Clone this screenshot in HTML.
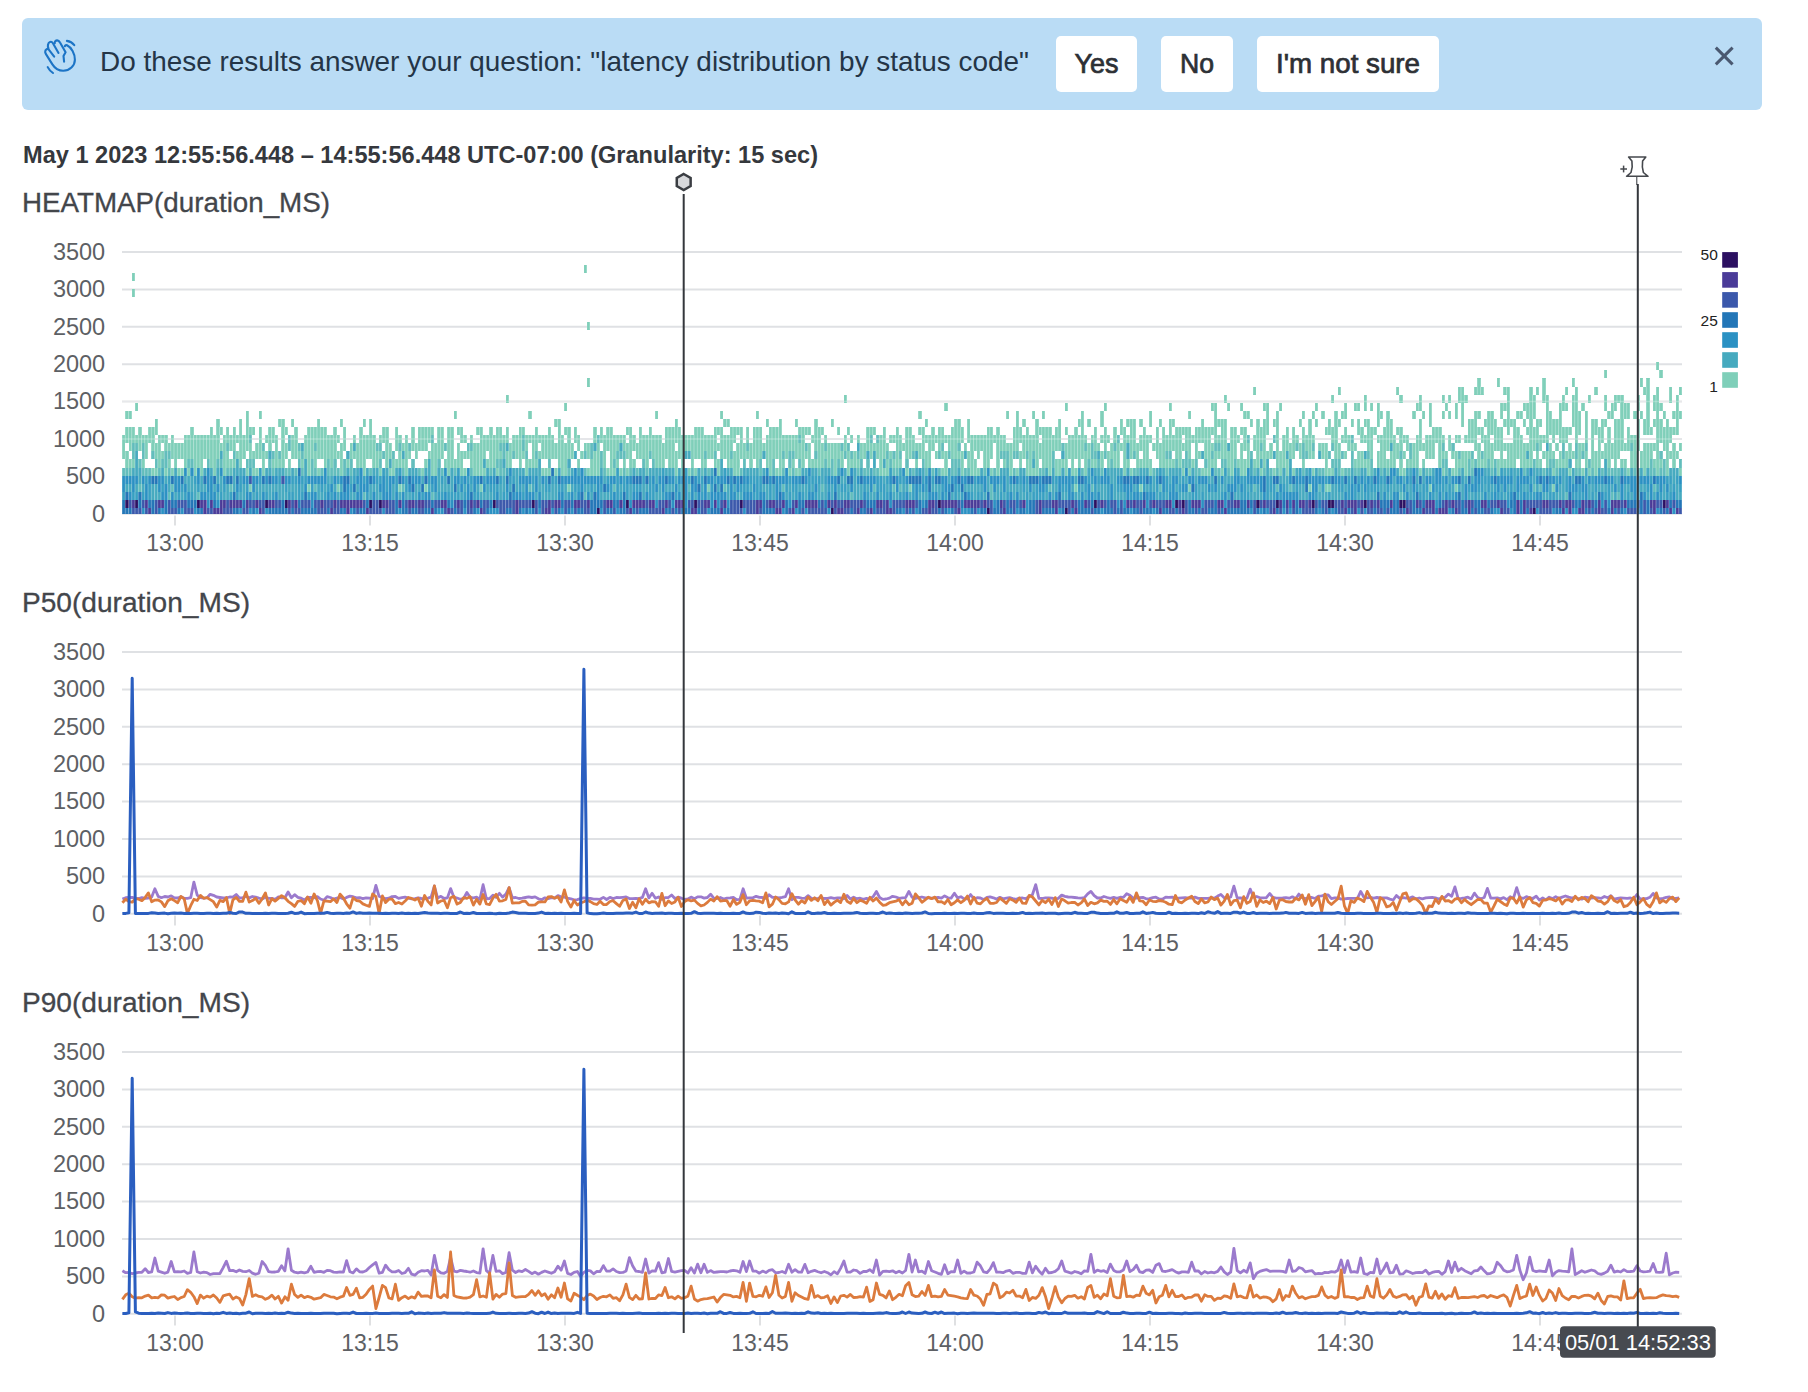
<!DOCTYPE html><html><head><meta charset="utf-8"><title>Query results</title><style>html,body{margin:0;padding:0;background:#fff;width:1808px;height:1392px;overflow:hidden}svg{display:block}text{font-family:"Liberation Sans",sans-serif}</style></head><body>
<svg width="1808" height="1392" viewBox="0 0 1808 1392">
<rect x="22" y="18" width="1740" height="92" rx="6" fill="#badcf5"/>
<g fill="none" stroke="#1c74c6" stroke-width="2.1" stroke-linecap="round" stroke-linejoin="round"><path d="M54.2 56.6 L49 49.8 C47.8 48.2 45 49 45.2 52 C45.3 52.8 45.5 53.3 45.8 53.9 L52.4 64.4 C54.6 67.9 58.6 70.8 63.2 70.8 C69.6 70.8 74.9 65.8 74.9 59.7 C74.9 53.5 71.4 47.4 67 45.3 C66 44.9 65.2 45.3 64.8 46.2"/><path d="M48.4 48.2 C47.5 46.4 47.6 42.9 50.1 41.9 C51.2 41.5 52.1 41.9 52.8 43 L58.5 52.9"/><path d="M54.8 43.2 C54.3 41.6 55.7 40.4 57.2 40.4 C58.4 40.4 59.3 41.3 60 42.6 L65.6 52.3 L63.5 56 L64.1 61.6"/><path d="M66.9 40.9 C69.8 41.3 72.6 42.9 74.3 45.2"/><path d="M47.7 67.1 C48.9 69.5 50.8 71.5 53 73"/></g>
<text x="100" y="71" font-size="27.8" fill="#243547" textLength="929" lengthAdjust="spacingAndGlyphs">Do these results answer your question: "latency distribution by status code"</text>
<rect x="1056" y="36" width="81" height="56" rx="5" fill="#ffffff"/>
<text x="1096.5" y="72.8" font-size="27" text-anchor="middle" fill="#2d3035" stroke="#2d3035" stroke-width="0.7" textLength="44" lengthAdjust="spacingAndGlyphs">Yes</text>
<rect x="1161" y="36" width="72" height="56" rx="5" fill="#ffffff"/>
<text x="1197.0" y="72.8" font-size="27" text-anchor="middle" fill="#2d3035" stroke="#2d3035" stroke-width="0.7" textLength="34" lengthAdjust="spacingAndGlyphs">No</text>
<rect x="1257" y="36" width="182" height="56" rx="5" fill="#ffffff"/>
<text x="1348.0" y="72.8" font-size="27" text-anchor="middle" fill="#2d3035" stroke="#2d3035" stroke-width="0.7" textLength="144" lengthAdjust="spacingAndGlyphs">I&#39;m not sure</text>
<g stroke="#4a5870" stroke-width="3" stroke-linecap="butt"><line x1="1715.8" y1="47.6" x2="1732.6" y2="64.4"/><line x1="1732.6" y1="47.6" x2="1715.8" y2="64.4"/></g>
<text x="23" y="162.7" font-size="23.2" font-weight="bold" fill="#35383d" textLength="795" lengthAdjust="spacingAndGlyphs">May 1 2023 12:55:56.448 – 14:55:56.448 UTC-07:00 (Granularity: 15 sec)</text>
<text x="22" y="211.8" font-size="27" fill="#43464b" stroke="#43464b" stroke-width="0.3" textLength="308" lengthAdjust="spacingAndGlyphs">HEATMAP(duration_MS)</text>
<text x="105.2" y="521.6" font-size="23.5" text-anchor="end" fill="#5d6064">0</text>
<text x="105.2" y="484.2" font-size="23.5" text-anchor="end" fill="#5d6064">500</text>
<text x="105.2" y="446.8" font-size="23.5" text-anchor="end" fill="#5d6064">1000</text>
<text x="105.2" y="409.4" font-size="23.5" text-anchor="end" fill="#5d6064">1500</text>
<text x="105.2" y="372.0" font-size="23.5" text-anchor="end" fill="#5d6064">2000</text>
<text x="105.2" y="334.6" font-size="23.5" text-anchor="end" fill="#5d6064">2500</text>
<text x="105.2" y="297.3" font-size="23.5" text-anchor="end" fill="#5d6064">3000</text>
<text x="105.2" y="259.9" font-size="23.5" text-anchor="end" fill="#5d6064">3500</text>
<line x1="175" y1="515.5" x2="175" y2="525.5" stroke="#d4d6d9" stroke-width="1.5"/>
<text x="175" y="550.7" font-size="23" text-anchor="middle" fill="#5d6064">13:00</text>
<line x1="370" y1="515.5" x2="370" y2="525.5" stroke="#d4d6d9" stroke-width="1.5"/>
<text x="370" y="550.7" font-size="23" text-anchor="middle" fill="#5d6064">13:15</text>
<line x1="565" y1="515.5" x2="565" y2="525.5" stroke="#d4d6d9" stroke-width="1.5"/>
<text x="565" y="550.7" font-size="23" text-anchor="middle" fill="#5d6064">13:30</text>
<line x1="760" y1="515.5" x2="760" y2="525.5" stroke="#d4d6d9" stroke-width="1.5"/>
<text x="760" y="550.7" font-size="23" text-anchor="middle" fill="#5d6064">13:45</text>
<line x1="955" y1="515.5" x2="955" y2="525.5" stroke="#d4d6d9" stroke-width="1.5"/>
<text x="955" y="550.7" font-size="23" text-anchor="middle" fill="#5d6064">14:00</text>
<line x1="1150" y1="515.5" x2="1150" y2="525.5" stroke="#d4d6d9" stroke-width="1.5"/>
<text x="1150" y="550.7" font-size="23" text-anchor="middle" fill="#5d6064">14:15</text>
<line x1="1345" y1="515.5" x2="1345" y2="525.5" stroke="#d4d6d9" stroke-width="1.5"/>
<text x="1345" y="550.7" font-size="23" text-anchor="middle" fill="#5d6064">14:30</text>
<line x1="1540" y1="515.5" x2="1540" y2="525.5" stroke="#d4d6d9" stroke-width="1.5"/>
<text x="1540" y="550.7" font-size="23" text-anchor="middle" fill="#5d6064">14:45</text>
<text x="22" y="611.8" font-size="27" fill="#43464b" stroke="#43464b" stroke-width="0.3" textLength="228" lengthAdjust="spacingAndGlyphs">P50(duration_MS)</text>
<text x="105.2" y="921.6" font-size="23.5" text-anchor="end" fill="#5d6064">0</text>
<text x="105.2" y="884.2" font-size="23.5" text-anchor="end" fill="#5d6064">500</text>
<text x="105.2" y="846.8" font-size="23.5" text-anchor="end" fill="#5d6064">1000</text>
<text x="105.2" y="809.4" font-size="23.5" text-anchor="end" fill="#5d6064">1500</text>
<text x="105.2" y="772.0" font-size="23.5" text-anchor="end" fill="#5d6064">2000</text>
<text x="105.2" y="734.6" font-size="23.5" text-anchor="end" fill="#5d6064">2500</text>
<text x="105.2" y="697.3" font-size="23.5" text-anchor="end" fill="#5d6064">3000</text>
<text x="105.2" y="659.9" font-size="23.5" text-anchor="end" fill="#5d6064">3500</text>
<line x1="175" y1="915.5" x2="175" y2="925.5" stroke="#d4d6d9" stroke-width="1.5"/>
<text x="175" y="950.7" font-size="23" text-anchor="middle" fill="#5d6064">13:00</text>
<line x1="370" y1="915.5" x2="370" y2="925.5" stroke="#d4d6d9" stroke-width="1.5"/>
<text x="370" y="950.7" font-size="23" text-anchor="middle" fill="#5d6064">13:15</text>
<line x1="565" y1="915.5" x2="565" y2="925.5" stroke="#d4d6d9" stroke-width="1.5"/>
<text x="565" y="950.7" font-size="23" text-anchor="middle" fill="#5d6064">13:30</text>
<line x1="760" y1="915.5" x2="760" y2="925.5" stroke="#d4d6d9" stroke-width="1.5"/>
<text x="760" y="950.7" font-size="23" text-anchor="middle" fill="#5d6064">13:45</text>
<line x1="955" y1="915.5" x2="955" y2="925.5" stroke="#d4d6d9" stroke-width="1.5"/>
<text x="955" y="950.7" font-size="23" text-anchor="middle" fill="#5d6064">14:00</text>
<line x1="1150" y1="915.5" x2="1150" y2="925.5" stroke="#d4d6d9" stroke-width="1.5"/>
<text x="1150" y="950.7" font-size="23" text-anchor="middle" fill="#5d6064">14:15</text>
<line x1="1345" y1="915.5" x2="1345" y2="925.5" stroke="#d4d6d9" stroke-width="1.5"/>
<text x="1345" y="950.7" font-size="23" text-anchor="middle" fill="#5d6064">14:30</text>
<line x1="1540" y1="915.5" x2="1540" y2="925.5" stroke="#d4d6d9" stroke-width="1.5"/>
<text x="1540" y="950.7" font-size="23" text-anchor="middle" fill="#5d6064">14:45</text>
<text x="22" y="1011.8" font-size="27" fill="#43464b" stroke="#43464b" stroke-width="0.3" textLength="228" lengthAdjust="spacingAndGlyphs">P90(duration_MS)</text>
<text x="105.2" y="1321.6" font-size="23.5" text-anchor="end" fill="#5d6064">0</text>
<text x="105.2" y="1284.2" font-size="23.5" text-anchor="end" fill="#5d6064">500</text>
<text x="105.2" y="1246.8" font-size="23.5" text-anchor="end" fill="#5d6064">1000</text>
<text x="105.2" y="1209.4" font-size="23.5" text-anchor="end" fill="#5d6064">1500</text>
<text x="105.2" y="1172.0" font-size="23.5" text-anchor="end" fill="#5d6064">2000</text>
<text x="105.2" y="1134.6" font-size="23.5" text-anchor="end" fill="#5d6064">2500</text>
<text x="105.2" y="1097.3" font-size="23.5" text-anchor="end" fill="#5d6064">3000</text>
<text x="105.2" y="1059.9" font-size="23.5" text-anchor="end" fill="#5d6064">3500</text>
<line x1="175" y1="1315.5" x2="175" y2="1325.5" stroke="#d4d6d9" stroke-width="1.5"/>
<text x="175" y="1350.7" font-size="23" text-anchor="middle" fill="#5d6064">13:00</text>
<line x1="370" y1="1315.5" x2="370" y2="1325.5" stroke="#d4d6d9" stroke-width="1.5"/>
<text x="370" y="1350.7" font-size="23" text-anchor="middle" fill="#5d6064">13:15</text>
<line x1="565" y1="1315.5" x2="565" y2="1325.5" stroke="#d4d6d9" stroke-width="1.5"/>
<text x="565" y="1350.7" font-size="23" text-anchor="middle" fill="#5d6064">13:30</text>
<line x1="760" y1="1315.5" x2="760" y2="1325.5" stroke="#d4d6d9" stroke-width="1.5"/>
<text x="760" y="1350.7" font-size="23" text-anchor="middle" fill="#5d6064">13:45</text>
<line x1="955" y1="1315.5" x2="955" y2="1325.5" stroke="#d4d6d9" stroke-width="1.5"/>
<text x="955" y="1350.7" font-size="23" text-anchor="middle" fill="#5d6064">14:00</text>
<line x1="1150" y1="1315.5" x2="1150" y2="1325.5" stroke="#d4d6d9" stroke-width="1.5"/>
<text x="1150" y="1350.7" font-size="23" text-anchor="middle" fill="#5d6064">14:15</text>
<line x1="1345" y1="1315.5" x2="1345" y2="1325.5" stroke="#d4d6d9" stroke-width="1.5"/>
<text x="1345" y="1350.7" font-size="23" text-anchor="middle" fill="#5d6064">14:30</text>
<line x1="1540" y1="1315.5" x2="1540" y2="1325.5" stroke="#d4d6d9" stroke-width="1.5"/>
<text x="1540" y="1350.7" font-size="23" text-anchor="middle" fill="#5d6064">14:45</text>
<g stroke="#dfe1e4" stroke-width="2"><line x1="122" y1="513.8" x2="1682" y2="513.8"/><line x1="122" y1="476.4" x2="1682" y2="476.4"/><line x1="122" y1="439.0" x2="1682" y2="439.0"/><line x1="122" y1="401.6" x2="1682" y2="401.6"/><line x1="122" y1="364.2" x2="1682" y2="364.2"/><line x1="122" y1="326.8" x2="1682" y2="326.8"/><line x1="122" y1="289.5" x2="1682" y2="289.5"/><line x1="122" y1="252.1" x2="1682" y2="252.1"/></g>
<g shape-rendering="crispEdges">
<g fill="#2c1061"><path id="hm0" d="M596.50 508.0h3.25v5.8h-3.25zM830.50 508.0h3.25v5.8h-3.25zM986.50 508.0h3.25v5.8h-3.25zM1064.50 508.0h3.25v5.8h-3.25zM1532.50 508.0h3.25v5.8h-3.25zM125.25 499.9h3.25v8.1h-3.25zM135.00 499.9h3.25v8.1h-3.25zM196.75 499.9h3.25v8.1h-3.25zM265.00 499.9h3.25v8.1h-3.25zM284.50 499.9h3.25v8.1h-3.25zM369.00 499.9h3.25v8.1h-3.25zM378.75 499.9h3.25v8.1h-3.25zM492.50 499.9h3.25v8.1h-3.25zM531.50 499.9h3.25v8.1h-3.25zM625.75 499.9h3.25v8.1h-3.25zM694.00 499.9h3.25v8.1h-3.25zM739.50 499.9h3.25v8.1h-3.25zM937.75 499.9h3.25v8.1h-3.25zM1093.75 499.9h3.25v8.1h-3.25zM1175.00 499.9h3.25v8.1h-3.25zM1181.50 499.9h3.25v8.1h-3.25zM1256.25 499.9h3.25v8.1h-3.25zM1275.75 499.9h3.25v8.1h-3.25zM1311.50 499.9h3.25v8.1h-3.25zM1327.75 499.9h6.50v8.1h-6.50zM1363.50 499.9h3.25v8.1h-3.25zM1399.25 499.9h6.50v8.1h-6.50zM1662.50 499.9h3.25v8.1h-3.25z"/></g>
<g fill="#4a3b98"><path id="hm1" d="M148.00 508.0h3.25v5.8h-3.25zM203.25 508.0h3.25v5.8h-3.25zM213.00 508.0h9.75v5.8h-9.75zM258.50 508.0h3.25v5.8h-3.25zM330.00 508.0h3.25v5.8h-3.25zM346.25 508.0h3.25v5.8h-3.25zM365.75 508.0h3.25v5.8h-3.25zM430.75 508.0h3.25v5.8h-3.25zM447.00 508.0h3.25v5.8h-3.25zM479.50 508.0h3.25v5.8h-3.25zM515.25 508.0h3.25v5.8h-3.25zM544.50 508.0h6.50v5.8h-6.50zM629.00 508.0h3.25v5.8h-3.25zM661.50 508.0h3.25v5.8h-3.25zM690.75 508.0h6.50v5.8h-6.50zM720.00 508.0h3.25v5.8h-3.25zM755.75 508.0h3.25v5.8h-3.25zM775.25 508.0h6.50v5.8h-6.50zM791.50 508.0h3.25v5.8h-3.25zM837.00 508.0h6.50v5.8h-6.50zM856.50 508.0h3.25v5.8h-3.25zM869.50 508.0h3.25v5.8h-3.25zM885.75 508.0h6.50v5.8h-6.50zM928.00 508.0h3.25v5.8h-3.25zM957.25 508.0h3.25v5.8h-3.25zM1002.75 508.0h3.25v5.8h-3.25zM1038.50 508.0h3.25v5.8h-3.25zM1054.75 508.0h3.25v5.8h-3.25zM1074.25 508.0h3.25v5.8h-3.25zM1158.75 508.0h3.25v5.8h-3.25zM1181.50 508.0h3.25v5.8h-3.25zM1223.75 508.0h3.25v5.8h-3.25zM1272.50 508.0h3.25v5.8h-3.25zM1344.00 508.0h3.25v5.8h-3.25zM1353.75 508.0h3.25v5.8h-3.25zM1405.75 508.0h3.25v5.8h-3.25zM1422.00 508.0h3.25v5.8h-3.25zM1431.75 508.0h3.25v5.8h-3.25zM1438.25 508.0h9.75v5.8h-9.75zM1454.50 508.0h3.25v5.8h-3.25zM1467.50 508.0h3.25v5.8h-3.25zM1500.00 508.0h3.25v5.8h-3.25zM1516.25 508.0h3.25v5.8h-3.25zM1522.75 508.0h3.25v5.8h-3.25zM1529.25 508.0h3.25v5.8h-3.25zM1561.75 508.0h3.25v5.8h-3.25zM1568.25 508.0h3.25v5.8h-3.25zM1578.00 508.0h6.50v5.8h-6.50zM1597.50 508.0h3.25v5.8h-3.25zM1610.50 508.0h3.25v5.8h-3.25zM1652.75 508.0h3.25v5.8h-3.25zM1669.00 508.0h3.25v5.8h-3.25zM1675.50 508.0h3.25v5.8h-3.25zM131.75 499.9h3.25v8.1h-3.25zM144.75 499.9h3.25v8.1h-3.25zM157.75 499.9h6.50v8.1h-6.50zM200.00 499.9h6.50v8.1h-6.50zM209.75 499.9h3.25v8.1h-3.25zM219.50 499.9h6.50v8.1h-6.50zM229.25 499.9h13.00v8.1h-13.00zM245.50 499.9h3.25v8.1h-3.25zM255.25 499.9h3.25v8.1h-3.25zM268.25 499.9h6.50v8.1h-6.50zM287.75 499.9h3.25v8.1h-3.25zM294.25 499.9h3.25v8.1h-3.25zM320.25 499.9h3.25v8.1h-3.25zM333.25 499.9h3.25v8.1h-3.25zM339.75 499.9h22.75v8.1h-22.75zM382.00 499.9h6.50v8.1h-6.50zM398.25 499.9h3.25v8.1h-3.25zM408.00 499.9h6.50v8.1h-6.50zM417.75 499.9h6.50v8.1h-6.50zM440.50 499.9h6.50v8.1h-6.50zM456.75 499.9h3.25v8.1h-3.25zM469.75 499.9h3.25v8.1h-3.25zM476.25 499.9h3.25v8.1h-3.25zM515.25 499.9h3.25v8.1h-3.25zM547.75 499.9h3.25v8.1h-3.25zM554.25 499.9h6.50v8.1h-6.50zM573.75 499.9h6.50v8.1h-6.50zM586.75 499.9h3.25v8.1h-3.25zM606.25 499.9h6.50v8.1h-6.50zM619.25 499.9h3.25v8.1h-3.25zM632.25 499.9h13.00v8.1h-13.00zM648.50 499.9h6.50v8.1h-6.50zM664.75 499.9h3.25v8.1h-3.25zM674.50 499.9h9.75v8.1h-9.75zM703.75 499.9h6.50v8.1h-6.50zM713.50 499.9h3.25v8.1h-3.25zM723.25 499.9h3.25v8.1h-3.25zM755.75 499.9h6.50v8.1h-6.50zM768.75 499.9h6.50v8.1h-6.50zM781.75 499.9h3.25v8.1h-3.25zM794.75 499.9h3.25v8.1h-3.25zM804.50 499.9h13.00v8.1h-13.00zM827.25 499.9h3.25v8.1h-3.25zM833.75 499.9h3.25v8.1h-3.25zM843.50 499.9h6.50v8.1h-6.50zM859.75 499.9h3.25v8.1h-3.25zM876.00 499.9h6.50v8.1h-6.50zM885.75 499.9h3.25v8.1h-3.25zM905.25 499.9h9.75v8.1h-9.75zM928.00 499.9h6.50v8.1h-6.50zM941.00 499.9h16.25v8.1h-16.25zM963.75 499.9h16.25v8.1h-16.25zM983.25 499.9h3.25v8.1h-3.25zM999.50 499.9h3.25v8.1h-3.25zM1022.25 499.9h3.25v8.1h-3.25zM1038.50 499.9h3.25v8.1h-3.25zM1051.50 499.9h6.50v8.1h-6.50zM1071.00 499.9h3.25v8.1h-3.25zM1084.00 499.9h3.25v8.1h-3.25zM1100.25 499.9h3.25v8.1h-3.25zM1126.25 499.9h3.25v8.1h-3.25zM1132.75 499.9h3.25v8.1h-3.25zM1142.50 499.9h3.25v8.1h-3.25zM1152.25 499.9h3.25v8.1h-3.25zM1165.25 499.9h6.50v8.1h-6.50zM1178.25 499.9h3.25v8.1h-3.25zM1191.25 499.9h9.75v8.1h-9.75zM1217.25 499.9h6.50v8.1h-6.50zM1233.50 499.9h6.50v8.1h-6.50zM1246.50 499.9h3.25v8.1h-3.25zM1262.75 499.9h3.25v8.1h-3.25zM1279.00 499.9h3.25v8.1h-3.25zM1285.50 499.9h3.25v8.1h-3.25zM1292.00 499.9h3.25v8.1h-3.25zM1298.50 499.9h6.50v8.1h-6.50zM1308.25 499.9h3.25v8.1h-3.25zM1340.75 499.9h3.25v8.1h-3.25zM1347.25 499.9h9.75v8.1h-9.75zM1360.25 499.9h3.25v8.1h-3.25zM1370.00 499.9h3.25v8.1h-3.25zM1376.50 499.9h3.25v8.1h-3.25zM1389.50 499.9h3.25v8.1h-3.25zM1415.50 499.9h3.25v8.1h-3.25zM1425.25 499.9h9.75v8.1h-9.75zM1444.75 499.9h3.25v8.1h-3.25zM1451.25 499.9h3.25v8.1h-3.25zM1467.50 499.9h3.25v8.1h-3.25zM1480.50 499.9h6.50v8.1h-6.50zM1496.75 499.9h3.25v8.1h-3.25zM1516.25 499.9h3.25v8.1h-3.25zM1522.75 499.9h3.25v8.1h-3.25zM1542.25 499.9h6.50v8.1h-6.50zM1558.50 499.9h3.25v8.1h-3.25zM1565.00 499.9h6.50v8.1h-6.50zM1581.25 499.9h3.25v8.1h-3.25zM1587.75 499.9h3.25v8.1h-3.25zM1597.50 499.9h3.25v8.1h-3.25zM1610.50 499.9h9.75v8.1h-9.75zM1623.50 499.9h3.25v8.1h-3.25zM1649.50 499.9h6.50v8.1h-6.50zM1665.75 499.9h3.25v8.1h-3.25z"/></g>
<g fill="#3b58ab"><path id="hm2" d="M131.75 508.0h9.75v5.8h-9.75zM144.75 508.0h3.25v5.8h-3.25zM154.50 508.0h3.25v5.8h-3.25zM167.50 508.0h9.75v5.8h-9.75zM183.75 508.0h9.75v5.8h-9.75zM206.50 508.0h6.50v5.8h-6.50zM222.75 508.0h9.75v5.8h-9.75zM242.25 508.0h6.50v5.8h-6.50zM261.75 508.0h3.25v5.8h-3.25zM287.75 508.0h3.25v5.8h-3.25zM294.25 508.0h6.50v5.8h-6.50zM317.00 508.0h9.75v5.8h-9.75zM333.25 508.0h6.50v5.8h-6.50zM356.00 508.0h3.25v5.8h-3.25zM369.00 508.0h13.00v5.8h-13.00zM385.25 508.0h9.75v5.8h-9.75zM408.00 508.0h3.25v5.8h-3.25zM417.75 508.0h6.50v5.8h-6.50zM443.75 508.0h3.25v5.8h-3.25zM450.25 508.0h3.25v5.8h-3.25zM456.75 508.0h6.50v5.8h-6.50zM466.50 508.0h6.50v5.8h-6.50zM482.75 508.0h3.25v5.8h-3.25zM499.00 508.0h6.50v5.8h-6.50zM512.00 508.0h3.25v5.8h-3.25zM534.75 508.0h3.25v5.8h-3.25zM541.25 508.0h3.25v5.8h-3.25zM554.25 508.0h3.25v5.8h-3.25zM564.00 508.0h3.25v5.8h-3.25zM573.75 508.0h3.25v5.8h-3.25zM583.50 508.0h6.50v5.8h-6.50zM603.00 508.0h3.25v5.8h-3.25zM612.75 508.0h3.25v5.8h-3.25zM625.75 508.0h3.25v5.8h-3.25zM635.50 508.0h3.25v5.8h-3.25zM648.50 508.0h13.00v5.8h-13.00zM671.25 508.0h3.25v5.8h-3.25zM677.75 508.0h3.25v5.8h-3.25zM700.50 508.0h6.50v5.8h-6.50zM729.75 508.0h13.00v5.8h-13.00zM746.00 508.0h9.75v5.8h-9.75zM759.00 508.0h3.25v5.8h-3.25zM788.25 508.0h3.25v5.8h-3.25zM801.25 508.0h3.25v5.8h-3.25zM807.75 508.0h19.50v5.8h-19.50zM833.75 508.0h3.25v5.8h-3.25zM843.50 508.0h6.50v5.8h-6.50zM853.25 508.0h3.25v5.8h-3.25zM866.25 508.0h3.25v5.8h-3.25zM876.00 508.0h9.75v5.8h-9.75zM892.25 508.0h3.25v5.8h-3.25zM905.25 508.0h3.25v5.8h-3.25zM911.75 508.0h3.25v5.8h-3.25zM921.50 508.0h6.50v5.8h-6.50zM931.25 508.0h6.50v5.8h-6.50zM941.00 508.0h3.25v5.8h-3.25zM954.00 508.0h3.25v5.8h-3.25zM973.50 508.0h3.25v5.8h-3.25zM989.75 508.0h3.25v5.8h-3.25zM999.50 508.0h3.25v5.8h-3.25zM1012.50 508.0h3.25v5.8h-3.25zM1035.25 508.0h3.25v5.8h-3.25zM1067.75 508.0h3.25v5.8h-3.25zM1090.50 508.0h3.25v5.8h-3.25zM1113.25 508.0h3.25v5.8h-3.25zM1119.75 508.0h3.25v5.8h-3.25zM1139.25 508.0h3.25v5.8h-3.25zM1168.50 508.0h6.50v5.8h-6.50zM1178.25 508.0h3.25v5.8h-3.25zM1184.75 508.0h3.25v5.8h-3.25zM1194.50 508.0h3.25v5.8h-3.25zM1201.00 508.0h6.50v5.8h-6.50zM1217.25 508.0h3.25v5.8h-3.25zM1253.00 508.0h3.25v5.8h-3.25zM1269.25 508.0h3.25v5.8h-3.25zM1279.00 508.0h3.25v5.8h-3.25zM1285.50 508.0h3.25v5.8h-3.25zM1292.00 508.0h3.25v5.8h-3.25zM1301.75 508.0h13.00v5.8h-13.00zM1324.50 508.0h3.25v5.8h-3.25zM1337.50 508.0h6.50v5.8h-6.50zM1350.50 508.0h3.25v5.8h-3.25zM1360.25 508.0h3.25v5.8h-3.25zM1366.75 508.0h6.50v5.8h-6.50zM1376.50 508.0h6.50v5.8h-6.50zM1386.25 508.0h3.25v5.8h-3.25zM1399.25 508.0h3.25v5.8h-3.25zM1409.00 508.0h3.25v5.8h-3.25zM1425.25 508.0h6.50v5.8h-6.50zM1457.75 508.0h3.25v5.8h-3.25zM1474.00 508.0h3.25v5.8h-3.25zM1483.75 508.0h6.50v5.8h-6.50zM1503.25 508.0h6.50v5.8h-6.50zM1539.00 508.0h13.00v5.8h-13.00zM1587.75 508.0h3.25v5.8h-3.25zM1594.25 508.0h3.25v5.8h-3.25zM1600.75 508.0h6.50v5.8h-6.50zM1617.00 508.0h3.25v5.8h-3.25zM1626.75 508.0h9.75v5.8h-9.75zM1643.00 508.0h3.25v5.8h-3.25zM1649.50 508.0h3.25v5.8h-3.25zM1662.50 508.0h3.25v5.8h-3.25zM1678.75 508.0h3.25v5.8h-3.25zM128.50 499.9h3.25v8.1h-3.25zM141.50 499.9h3.25v8.1h-3.25zM154.50 499.9h3.25v8.1h-3.25zM167.50 499.9h3.25v8.1h-3.25zM177.25 499.9h9.75v8.1h-9.75zM226.00 499.9h3.25v8.1h-3.25zM248.75 499.9h6.50v8.1h-6.50zM258.50 499.9h6.50v8.1h-6.50zM274.75 499.9h6.50v8.1h-6.50zM291.00 499.9h3.25v8.1h-3.25zM300.75 499.9h9.75v8.1h-9.75zM313.75 499.9h6.50v8.1h-6.50zM323.50 499.9h9.75v8.1h-9.75zM336.50 499.9h3.25v8.1h-3.25zM362.50 499.9h3.25v8.1h-3.25zM372.25 499.9h6.50v8.1h-6.50zM388.50 499.9h6.50v8.1h-6.50zM404.75 499.9h3.25v8.1h-3.25zM414.50 499.9h3.25v8.1h-3.25zM424.25 499.9h6.50v8.1h-6.50zM434.00 499.9h6.50v8.1h-6.50zM453.50 499.9h3.25v8.1h-3.25zM460.00 499.9h3.25v8.1h-3.25zM466.50 499.9h3.25v8.1h-3.25zM473.00 499.9h3.25v8.1h-3.25zM482.75 499.9h6.50v8.1h-6.50zM495.75 499.9h19.50v8.1h-19.50zM518.50 499.9h13.00v8.1h-13.00zM534.75 499.9h3.25v8.1h-3.25zM541.25 499.9h6.50v8.1h-6.50zM551.00 499.9h3.25v8.1h-3.25zM564.00 499.9h6.50v8.1h-6.50zM580.25 499.9h6.50v8.1h-6.50zM603.00 499.9h3.25v8.1h-3.25zM645.25 499.9h3.25v8.1h-3.25zM658.25 499.9h6.50v8.1h-6.50zM668.00 499.9h3.25v8.1h-3.25zM687.50 499.9h6.50v8.1h-6.50zM697.25 499.9h6.50v8.1h-6.50zM720.00 499.9h3.25v8.1h-3.25zM729.75 499.9h9.75v8.1h-9.75zM742.75 499.9h13.00v8.1h-13.00zM765.50 499.9h3.25v8.1h-3.25zM775.25 499.9h6.50v8.1h-6.50zM791.50 499.9h3.25v8.1h-3.25zM820.75 499.9h3.25v8.1h-3.25zM830.50 499.9h3.25v8.1h-3.25zM837.00 499.9h6.50v8.1h-6.50zM850.00 499.9h9.75v8.1h-9.75zM863.00 499.9h3.25v8.1h-3.25zM882.50 499.9h3.25v8.1h-3.25zM892.25 499.9h13.00v8.1h-13.00zM915.00 499.9h3.25v8.1h-3.25zM934.50 499.9h3.25v8.1h-3.25zM957.25 499.9h3.25v8.1h-3.25zM980.00 499.9h3.25v8.1h-3.25zM986.50 499.9h6.50v8.1h-6.50zM1002.75 499.9h3.25v8.1h-3.25zM1009.25 499.9h6.50v8.1h-6.50zM1019.00 499.9h3.25v8.1h-3.25zM1035.25 499.9h3.25v8.1h-3.25zM1041.75 499.9h9.75v8.1h-9.75zM1058.00 499.9h13.00v8.1h-13.00zM1074.25 499.9h3.25v8.1h-3.25zM1087.25 499.9h3.25v8.1h-3.25zM1097.00 499.9h3.25v8.1h-3.25zM1103.50 499.9h3.25v8.1h-3.25zM1110.00 499.9h6.50v8.1h-6.50zM1119.75 499.9h3.25v8.1h-3.25zM1129.50 499.9h3.25v8.1h-3.25zM1136.00 499.9h6.50v8.1h-6.50zM1149.00 499.9h3.25v8.1h-3.25zM1155.50 499.9h9.75v8.1h-9.75zM1184.75 499.9h3.25v8.1h-3.25zM1204.25 499.9h9.75v8.1h-9.75zM1227.00 499.9h6.50v8.1h-6.50zM1253.00 499.9h3.25v8.1h-3.25zM1259.50 499.9h3.25v8.1h-3.25zM1266.00 499.9h9.75v8.1h-9.75zM1305.00 499.9h3.25v8.1h-3.25zM1314.75 499.9h3.25v8.1h-3.25zM1321.25 499.9h6.50v8.1h-6.50zM1334.25 499.9h6.50v8.1h-6.50zM1344.00 499.9h3.25v8.1h-3.25zM1357.00 499.9h3.25v8.1h-3.25zM1366.75 499.9h3.25v8.1h-3.25zM1373.25 499.9h3.25v8.1h-3.25zM1405.75 499.9h6.50v8.1h-6.50zM1418.75 499.9h3.25v8.1h-3.25zM1441.50 499.9h3.25v8.1h-3.25zM1448.00 499.9h3.25v8.1h-3.25zM1454.50 499.9h6.50v8.1h-6.50zM1464.25 499.9h3.25v8.1h-3.25zM1470.75 499.9h3.25v8.1h-3.25zM1490.25 499.9h6.50v8.1h-6.50zM1500.00 499.9h6.50v8.1h-6.50zM1526.00 499.9h16.25v8.1h-16.25zM1548.75 499.9h9.75v8.1h-9.75zM1561.75 499.9h3.25v8.1h-3.25zM1571.50 499.9h3.25v8.1h-3.25zM1584.50 499.9h3.25v8.1h-3.25zM1591.00 499.9h3.25v8.1h-3.25zM1604.00 499.9h3.25v8.1h-3.25zM1620.25 499.9h3.25v8.1h-3.25zM1636.50 499.9h3.25v8.1h-3.25zM1643.00 499.9h3.25v8.1h-3.25zM1656.00 499.9h6.50v8.1h-6.50zM1672.25 499.9h3.25v8.1h-3.25zM248.75 475.6h3.25v8.1h-3.25zM281.25 475.6h3.25v8.1h-3.25z"/></g>
<g fill="#2376b7"><path id="hm3" d="M122.00 508.0h9.75v5.8h-9.75zM151.25 508.0h3.25v5.8h-3.25zM157.75 508.0h3.25v5.8h-3.25zM164.25 508.0h3.25v5.8h-3.25zM177.25 508.0h3.25v5.8h-3.25zM196.75 508.0h6.50v5.8h-6.50zM232.50 508.0h6.50v5.8h-6.50zM252.00 508.0h3.25v5.8h-3.25zM268.25 508.0h19.50v5.8h-19.50zM291.00 508.0h3.25v5.8h-3.25zM300.75 508.0h16.25v5.8h-16.25zM326.75 508.0h3.25v5.8h-3.25zM339.75 508.0h6.50v5.8h-6.50zM352.75 508.0h3.25v5.8h-3.25zM359.25 508.0h6.50v5.8h-6.50zM395.00 508.0h3.25v5.8h-3.25zM401.50 508.0h6.50v5.8h-6.50zM411.25 508.0h6.50v5.8h-6.50zM424.25 508.0h6.50v5.8h-6.50zM434.00 508.0h3.25v5.8h-3.25zM453.50 508.0h3.25v5.8h-3.25zM473.00 508.0h3.25v5.8h-3.25zM486.00 508.0h3.25v5.8h-3.25zM505.50 508.0h6.50v5.8h-6.50zM518.50 508.0h3.25v5.8h-3.25zM525.00 508.0h3.25v5.8h-3.25zM531.50 508.0h3.25v5.8h-3.25zM557.50 508.0h3.25v5.8h-3.25zM567.25 508.0h3.25v5.8h-3.25zM577.00 508.0h6.50v5.8h-6.50zM590.00 508.0h6.50v5.8h-6.50zM606.25 508.0h6.50v5.8h-6.50zM619.25 508.0h6.50v5.8h-6.50zM632.25 508.0h3.25v5.8h-3.25zM638.75 508.0h9.75v5.8h-9.75zM664.75 508.0h6.50v5.8h-6.50zM674.50 508.0h3.25v5.8h-3.25zM681.00 508.0h9.75v5.8h-9.75zM697.25 508.0h3.25v5.8h-3.25zM710.25 508.0h9.75v5.8h-9.75zM723.25 508.0h6.50v5.8h-6.50zM762.25 508.0h13.00v5.8h-13.00zM785.00 508.0h3.25v5.8h-3.25zM798.00 508.0h3.25v5.8h-3.25zM850.00 508.0h3.25v5.8h-3.25zM859.75 508.0h6.50v5.8h-6.50zM872.75 508.0h3.25v5.8h-3.25zM895.50 508.0h6.50v5.8h-6.50zM908.50 508.0h3.25v5.8h-3.25zM918.25 508.0h3.25v5.8h-3.25zM937.75 508.0h3.25v5.8h-3.25zM944.25 508.0h3.25v5.8h-3.25zM950.75 508.0h3.25v5.8h-3.25zM970.25 508.0h3.25v5.8h-3.25zM980.00 508.0h6.50v5.8h-6.50zM993.00 508.0h6.50v5.8h-6.50zM1006.00 508.0h6.50v5.8h-6.50zM1019.00 508.0h6.50v5.8h-6.50zM1028.75 508.0h6.50v5.8h-6.50zM1041.75 508.0h13.00v5.8h-13.00zM1061.25 508.0h3.25v5.8h-3.25zM1071.00 508.0h3.25v5.8h-3.25zM1077.50 508.0h13.00v5.8h-13.00zM1093.75 508.0h6.50v5.8h-6.50zM1103.50 508.0h9.75v5.8h-9.75zM1116.50 508.0h3.25v5.8h-3.25zM1123.00 508.0h6.50v5.8h-6.50zM1132.75 508.0h6.50v5.8h-6.50zM1142.50 508.0h9.75v5.8h-9.75zM1155.50 508.0h3.25v5.8h-3.25zM1162.00 508.0h6.50v5.8h-6.50zM1175.00 508.0h3.25v5.8h-3.25zM1188.00 508.0h6.50v5.8h-6.50zM1197.75 508.0h3.25v5.8h-3.25zM1207.50 508.0h9.75v5.8h-9.75zM1220.50 508.0h3.25v5.8h-3.25zM1227.00 508.0h22.75v5.8h-22.75zM1256.25 508.0h3.25v5.8h-3.25zM1262.75 508.0h3.25v5.8h-3.25zM1275.75 508.0h3.25v5.8h-3.25zM1295.25 508.0h3.25v5.8h-3.25zM1314.75 508.0h3.25v5.8h-3.25zM1321.25 508.0h3.25v5.8h-3.25zM1327.75 508.0h3.25v5.8h-3.25zM1334.25 508.0h3.25v5.8h-3.25zM1347.25 508.0h3.25v5.8h-3.25zM1373.25 508.0h3.25v5.8h-3.25zM1383.00 508.0h3.25v5.8h-3.25zM1389.50 508.0h9.75v5.8h-9.75zM1402.50 508.0h3.25v5.8h-3.25zM1412.25 508.0h9.75v5.8h-9.75zM1435.00 508.0h3.25v5.8h-3.25zM1451.25 508.0h3.25v5.8h-3.25zM1461.00 508.0h6.50v5.8h-6.50zM1470.75 508.0h3.25v5.8h-3.25zM1477.25 508.0h6.50v5.8h-6.50zM1490.25 508.0h3.25v5.8h-3.25zM1513.00 508.0h3.25v5.8h-3.25zM1519.50 508.0h3.25v5.8h-3.25zM1526.00 508.0h3.25v5.8h-3.25zM1555.25 508.0h6.50v5.8h-6.50zM1584.50 508.0h3.25v5.8h-3.25zM1591.00 508.0h3.25v5.8h-3.25zM1607.25 508.0h3.25v5.8h-3.25zM1613.75 508.0h3.25v5.8h-3.25zM1620.25 508.0h3.25v5.8h-3.25zM1636.50 508.0h6.50v5.8h-6.50zM1646.25 508.0h3.25v5.8h-3.25zM1659.25 508.0h3.25v5.8h-3.25zM1665.75 508.0h3.25v5.8h-3.25zM122.00 499.9h3.25v8.1h-3.25zM138.25 499.9h3.25v8.1h-3.25zM148.00 499.9h6.50v8.1h-6.50zM164.25 499.9h3.25v8.1h-3.25zM170.75 499.9h6.50v8.1h-6.50zM187.00 499.9h9.75v8.1h-9.75zM213.00 499.9h3.25v8.1h-3.25zM242.25 499.9h3.25v8.1h-3.25zM281.25 499.9h3.25v8.1h-3.25zM297.50 499.9h3.25v8.1h-3.25zM365.75 499.9h3.25v8.1h-3.25zM395.00 499.9h3.25v8.1h-3.25zM401.50 499.9h3.25v8.1h-3.25zM430.75 499.9h3.25v8.1h-3.25zM447.00 499.9h3.25v8.1h-3.25zM463.25 499.9h3.25v8.1h-3.25zM479.50 499.9h3.25v8.1h-3.25zM489.25 499.9h3.25v8.1h-3.25zM538.00 499.9h3.25v8.1h-3.25zM560.75 499.9h3.25v8.1h-3.25zM570.50 499.9h3.25v8.1h-3.25zM590.00 499.9h13.00v8.1h-13.00zM612.75 499.9h6.50v8.1h-6.50zM622.50 499.9h3.25v8.1h-3.25zM762.25 499.9h3.25v8.1h-3.25zM785.00 499.9h3.25v8.1h-3.25zM798.00 499.9h6.50v8.1h-6.50zM817.50 499.9h3.25v8.1h-3.25zM824.00 499.9h3.25v8.1h-3.25zM866.25 499.9h9.75v8.1h-9.75zM918.25 499.9h3.25v8.1h-3.25zM924.75 499.9h3.25v8.1h-3.25zM960.50 499.9h3.25v8.1h-3.25zM996.25 499.9h3.25v8.1h-3.25zM1006.00 499.9h3.25v8.1h-3.25zM1015.75 499.9h3.25v8.1h-3.25zM1028.75 499.9h6.50v8.1h-6.50zM1077.50 499.9h6.50v8.1h-6.50zM1090.50 499.9h3.25v8.1h-3.25zM1106.75 499.9h3.25v8.1h-3.25zM1188.00 499.9h3.25v8.1h-3.25zM1214.00 499.9h3.25v8.1h-3.25zM1240.00 499.9h6.50v8.1h-6.50zM1249.75 499.9h3.25v8.1h-3.25zM1282.25 499.9h3.25v8.1h-3.25zM1288.75 499.9h3.25v8.1h-3.25zM1295.25 499.9h3.25v8.1h-3.25zM1318.00 499.9h3.25v8.1h-3.25zM1379.75 499.9h9.75v8.1h-9.75zM1392.75 499.9h6.50v8.1h-6.50zM1412.25 499.9h3.25v8.1h-3.25zM1422.00 499.9h3.25v8.1h-3.25zM1438.25 499.9h3.25v8.1h-3.25zM1461.00 499.9h3.25v8.1h-3.25zM1474.00 499.9h6.50v8.1h-6.50zM1487.00 499.9h3.25v8.1h-3.25zM1509.75 499.9h6.50v8.1h-6.50zM1519.50 499.9h3.25v8.1h-3.25zM1574.75 499.9h6.50v8.1h-6.50zM1594.25 499.9h3.25v8.1h-3.25zM1626.75 499.9h9.75v8.1h-9.75zM1639.75 499.9h3.25v8.1h-3.25zM1646.25 499.9h3.25v8.1h-3.25zM1669.00 499.9h3.25v8.1h-3.25zM1675.50 499.9h6.50v8.1h-6.50zM125.25 491.8h3.25v8.1h-3.25zM138.25 491.8h3.25v8.1h-3.25zM232.50 491.8h3.25v8.1h-3.25zM304.00 491.8h3.25v8.1h-3.25zM469.75 491.8h3.25v8.1h-3.25zM508.75 491.8h3.25v8.1h-3.25zM580.25 491.8h3.25v8.1h-3.25zM593.25 491.8h3.25v8.1h-3.25zM622.50 491.8h3.25v8.1h-3.25zM638.75 491.8h3.25v8.1h-3.25zM671.25 491.8h3.25v8.1h-3.25zM778.50 491.8h3.25v8.1h-3.25zM833.75 491.8h3.25v8.1h-3.25zM947.50 491.8h3.25v8.1h-3.25zM963.75 491.8h3.25v8.1h-3.25zM986.50 491.8h3.25v8.1h-3.25zM1058.00 491.8h3.25v8.1h-3.25zM1142.50 491.8h3.25v8.1h-3.25zM1230.25 491.8h3.25v8.1h-3.25zM1376.50 491.8h3.25v8.1h-3.25zM1415.50 491.8h3.25v8.1h-3.25zM1457.75 491.8h3.25v8.1h-3.25zM1513.00 491.8h3.25v8.1h-3.25zM1568.25 491.8h3.25v8.1h-3.25zM1597.50 491.8h3.25v8.1h-3.25zM1639.75 491.8h3.25v8.1h-3.25zM343.00 483.7h3.25v8.1h-3.25zM352.75 483.7h3.25v8.1h-3.25zM411.25 483.7h3.25v8.1h-3.25zM421.00 483.7h3.25v8.1h-3.25zM453.50 483.7h3.25v8.1h-3.25zM512.00 483.7h3.25v8.1h-3.25zM603.00 483.7h3.25v8.1h-3.25zM697.25 483.7h3.25v8.1h-3.25zM713.50 483.7h3.25v8.1h-3.25zM720.00 483.7h3.25v8.1h-3.25zM928.00 483.7h3.25v8.1h-3.25zM950.75 483.7h3.25v8.1h-3.25zM960.50 483.7h3.25v8.1h-3.25zM1191.25 483.7h3.25v8.1h-3.25zM1262.75 483.7h3.25v8.1h-3.25zM1305.00 483.7h3.25v8.1h-3.25zM151.25 475.6h6.50v8.1h-6.50zM170.75 475.6h3.25v8.1h-3.25zM180.50 475.6h3.25v8.1h-3.25zM203.25 475.6h3.25v8.1h-3.25zM213.00 475.6h3.25v8.1h-3.25zM226.00 475.6h6.50v8.1h-6.50zM235.75 475.6h3.25v8.1h-3.25zM261.75 475.6h3.25v8.1h-3.25zM268.25 475.6h3.25v8.1h-3.25zM343.00 475.6h6.50v8.1h-6.50zM369.00 475.6h3.25v8.1h-3.25zM398.25 475.6h3.25v8.1h-3.25zM408.00 475.6h3.25v8.1h-3.25zM424.25 475.6h3.25v8.1h-3.25zM447.00 475.6h3.25v8.1h-3.25zM479.50 475.6h3.25v8.1h-3.25zM495.75 475.6h3.25v8.1h-3.25zM505.50 475.6h3.25v8.1h-3.25zM547.75 475.6h3.25v8.1h-3.25zM557.50 475.6h3.25v8.1h-3.25zM632.25 475.6h9.75v8.1h-9.75zM645.25 475.6h3.25v8.1h-3.25zM664.75 475.6h3.25v8.1h-3.25zM690.75 475.6h3.25v8.1h-3.25zM703.75 475.6h3.25v8.1h-3.25zM726.50 475.6h3.25v8.1h-3.25zM733.00 475.6h3.25v8.1h-3.25zM739.50 475.6h3.25v8.1h-3.25zM762.25 475.6h6.50v8.1h-6.50zM772.00 475.6h3.25v8.1h-3.25zM801.25 475.6h3.25v8.1h-3.25zM837.00 475.6h3.25v8.1h-3.25zM846.75 475.6h6.50v8.1h-6.50zM859.75 475.6h3.25v8.1h-3.25zM892.25 475.6h3.25v8.1h-3.25zM908.50 475.6h13.00v8.1h-13.00zM928.00 475.6h3.25v8.1h-3.25zM934.50 475.6h6.50v8.1h-6.50zM957.25 475.6h3.25v8.1h-3.25zM967.00 475.6h6.50v8.1h-6.50zM1012.50 475.6h3.25v8.1h-3.25zM1028.75 475.6h9.75v8.1h-9.75zM1041.75 475.6h9.75v8.1h-9.75zM1077.50 475.6h6.50v8.1h-6.50zM1123.00 475.6h6.50v8.1h-6.50zM1132.75 475.6h6.50v8.1h-6.50zM1145.75 475.6h3.25v8.1h-3.25zM1158.75 475.6h3.25v8.1h-3.25zM1214.00 475.6h3.25v8.1h-3.25zM1262.75 475.6h3.25v8.1h-3.25zM1272.50 475.6h6.50v8.1h-6.50zM1292.00 475.6h3.25v8.1h-3.25zM1305.00 475.6h3.25v8.1h-3.25zM1331.00 475.6h3.25v8.1h-3.25zM1344.00 475.6h3.25v8.1h-3.25zM1353.75 475.6h3.25v8.1h-3.25zM1373.25 475.6h3.25v8.1h-3.25zM1386.25 475.6h3.25v8.1h-3.25zM1412.25 475.6h3.25v8.1h-3.25zM1418.75 475.6h3.25v8.1h-3.25zM1457.75 475.6h3.25v8.1h-3.25zM1467.50 475.6h3.25v8.1h-3.25zM1493.50 475.6h3.25v8.1h-3.25zM1539.00 475.6h3.25v8.1h-3.25zM1545.50 475.6h3.25v8.1h-3.25zM1574.75 475.6h6.50v8.1h-6.50zM1604.00 475.6h3.25v8.1h-3.25zM1620.25 475.6h3.25v8.1h-3.25zM1652.75 475.6h3.25v8.1h-3.25zM297.50 467.5h3.25v8.1h-3.25zM551.00 467.5h3.25v8.1h-3.25zM713.50 467.5h3.25v8.1h-3.25zM1474.00 467.5h3.25v8.1h-3.25z"/></g>
<g fill="#2b91c3"><path id="hm4" d="M141.50 508.0h3.25v5.8h-3.25zM161.00 508.0h3.25v5.8h-3.25zM180.50 508.0h3.25v5.8h-3.25zM193.50 508.0h3.25v5.8h-3.25zM239.00 508.0h3.25v5.8h-3.25zM248.75 508.0h3.25v5.8h-3.25zM255.25 508.0h3.25v5.8h-3.25zM265.00 508.0h3.25v5.8h-3.25zM349.50 508.0h3.25v5.8h-3.25zM382.00 508.0h3.25v5.8h-3.25zM398.25 508.0h3.25v5.8h-3.25zM437.25 508.0h6.50v5.8h-6.50zM463.25 508.0h3.25v5.8h-3.25zM476.25 508.0h3.25v5.8h-3.25zM489.25 508.0h9.75v5.8h-9.75zM521.75 508.0h3.25v5.8h-3.25zM528.25 508.0h3.25v5.8h-3.25zM538.00 508.0h3.25v5.8h-3.25zM551.00 508.0h3.25v5.8h-3.25zM560.75 508.0h3.25v5.8h-3.25zM570.50 508.0h3.25v5.8h-3.25zM599.75 508.0h3.25v5.8h-3.25zM616.00 508.0h3.25v5.8h-3.25zM707.00 508.0h3.25v5.8h-3.25zM742.75 508.0h3.25v5.8h-3.25zM781.75 508.0h3.25v5.8h-3.25zM794.75 508.0h3.25v5.8h-3.25zM804.50 508.0h3.25v5.8h-3.25zM827.25 508.0h3.25v5.8h-3.25zM902.00 508.0h3.25v5.8h-3.25zM915.00 508.0h3.25v5.8h-3.25zM947.50 508.0h3.25v5.8h-3.25zM960.50 508.0h9.75v5.8h-9.75zM976.75 508.0h3.25v5.8h-3.25zM1015.75 508.0h3.25v5.8h-3.25zM1025.50 508.0h3.25v5.8h-3.25zM1058.00 508.0h3.25v5.8h-3.25zM1100.25 508.0h3.25v5.8h-3.25zM1129.50 508.0h3.25v5.8h-3.25zM1152.25 508.0h3.25v5.8h-3.25zM1249.75 508.0h3.25v5.8h-3.25zM1259.50 508.0h3.25v5.8h-3.25zM1266.00 508.0h3.25v5.8h-3.25zM1282.25 508.0h3.25v5.8h-3.25zM1288.75 508.0h3.25v5.8h-3.25zM1298.50 508.0h3.25v5.8h-3.25zM1318.00 508.0h3.25v5.8h-3.25zM1331.00 508.0h3.25v5.8h-3.25zM1357.00 508.0h3.25v5.8h-3.25zM1363.50 508.0h3.25v5.8h-3.25zM1448.00 508.0h3.25v5.8h-3.25zM1493.50 508.0h6.50v5.8h-6.50zM1509.75 508.0h3.25v5.8h-3.25zM1535.75 508.0h3.25v5.8h-3.25zM1552.00 508.0h3.25v5.8h-3.25zM1565.00 508.0h3.25v5.8h-3.25zM1571.50 508.0h6.50v5.8h-6.50zM1623.50 508.0h3.25v5.8h-3.25zM1656.00 508.0h3.25v5.8h-3.25zM1672.25 508.0h3.25v5.8h-3.25zM206.50 499.9h3.25v8.1h-3.25zM216.25 499.9h3.25v8.1h-3.25zM310.50 499.9h3.25v8.1h-3.25zM450.25 499.9h3.25v8.1h-3.25zM629.00 499.9h3.25v8.1h-3.25zM655.00 499.9h3.25v8.1h-3.25zM671.25 499.9h3.25v8.1h-3.25zM684.25 499.9h3.25v8.1h-3.25zM710.25 499.9h3.25v8.1h-3.25zM716.75 499.9h3.25v8.1h-3.25zM726.50 499.9h3.25v8.1h-3.25zM788.25 499.9h3.25v8.1h-3.25zM889.00 499.9h3.25v8.1h-3.25zM921.50 499.9h3.25v8.1h-3.25zM993.00 499.9h3.25v8.1h-3.25zM1025.50 499.9h3.25v8.1h-3.25zM1116.50 499.9h3.25v8.1h-3.25zM1123.00 499.9h3.25v8.1h-3.25zM1145.75 499.9h3.25v8.1h-3.25zM1171.75 499.9h3.25v8.1h-3.25zM1201.00 499.9h3.25v8.1h-3.25zM1223.75 499.9h3.25v8.1h-3.25zM1435.00 499.9h3.25v8.1h-3.25zM1506.50 499.9h3.25v8.1h-3.25zM1600.75 499.9h3.25v8.1h-3.25zM1607.25 499.9h3.25v8.1h-3.25zM128.50 491.8h3.25v8.1h-3.25zM144.75 491.8h3.25v8.1h-3.25zM161.00 491.8h6.50v8.1h-6.50zM170.75 491.8h3.25v8.1h-3.25zM187.00 491.8h3.25v8.1h-3.25zM200.00 491.8h6.50v8.1h-6.50zM209.75 491.8h6.50v8.1h-6.50zM245.50 491.8h6.50v8.1h-6.50zM261.75 491.8h3.25v8.1h-3.25zM274.75 491.8h3.25v8.1h-3.25zM310.50 491.8h6.50v8.1h-6.50zM326.75 491.8h3.25v8.1h-3.25zM333.25 491.8h3.25v8.1h-3.25zM339.75 491.8h9.75v8.1h-9.75zM356.00 491.8h6.50v8.1h-6.50zM372.25 491.8h3.25v8.1h-3.25zM382.00 491.8h9.75v8.1h-9.75zM395.00 491.8h3.25v8.1h-3.25zM401.50 491.8h3.25v8.1h-3.25zM417.75 491.8h3.25v8.1h-3.25zM424.25 491.8h6.50v8.1h-6.50zM443.75 491.8h3.25v8.1h-3.25zM466.50 491.8h3.25v8.1h-3.25zM495.75 491.8h3.25v8.1h-3.25zM512.00 491.8h9.75v8.1h-9.75zM525.00 491.8h9.75v8.1h-9.75zM538.00 491.8h3.25v8.1h-3.25zM557.50 491.8h6.50v8.1h-6.50zM570.50 491.8h3.25v8.1h-3.25zM577.00 491.8h3.25v8.1h-3.25zM586.75 491.8h3.25v8.1h-3.25zM596.50 491.8h3.25v8.1h-3.25zM612.75 491.8h3.25v8.1h-3.25zM632.25 491.8h6.50v8.1h-6.50zM645.25 491.8h3.25v8.1h-3.25zM664.75 491.8h6.50v8.1h-6.50zM677.75 491.8h3.25v8.1h-3.25zM684.25 491.8h3.25v8.1h-3.25zM690.75 491.8h3.25v8.1h-3.25zM697.25 491.8h3.25v8.1h-3.25zM703.75 491.8h3.25v8.1h-3.25zM710.25 491.8h16.25v8.1h-16.25zM729.75 491.8h6.50v8.1h-6.50zM742.75 491.8h9.75v8.1h-9.75zM759.00 491.8h6.50v8.1h-6.50zM775.25 491.8h3.25v8.1h-3.25zM781.75 491.8h3.25v8.1h-3.25zM798.00 491.8h3.25v8.1h-3.25zM807.75 491.8h6.50v8.1h-6.50zM827.25 491.8h3.25v8.1h-3.25zM863.00 491.8h3.25v8.1h-3.25zM876.00 491.8h3.25v8.1h-3.25zM889.00 491.8h3.25v8.1h-3.25zM905.25 491.8h3.25v8.1h-3.25zM915.00 491.8h3.25v8.1h-3.25zM928.00 491.8h9.75v8.1h-9.75zM941.00 491.8h3.25v8.1h-3.25zM967.00 491.8h3.25v8.1h-3.25zM1009.25 491.8h3.25v8.1h-3.25zM1015.75 491.8h3.25v8.1h-3.25zM1048.25 491.8h3.25v8.1h-3.25zM1054.75 491.8h3.25v8.1h-3.25zM1067.75 491.8h6.50v8.1h-6.50zM1080.75 491.8h3.25v8.1h-3.25zM1087.25 491.8h6.50v8.1h-6.50zM1097.00 491.8h3.25v8.1h-3.25zM1110.00 491.8h3.25v8.1h-3.25zM1126.25 491.8h3.25v8.1h-3.25zM1132.75 491.8h6.50v8.1h-6.50zM1145.75 491.8h9.75v8.1h-9.75zM1168.50 491.8h9.75v8.1h-9.75zM1223.75 491.8h3.25v8.1h-3.25zM1262.75 491.8h3.25v8.1h-3.25zM1275.75 491.8h3.25v8.1h-3.25zM1282.25 491.8h16.25v8.1h-16.25zM1308.25 491.8h6.50v8.1h-6.50zM1344.00 491.8h3.25v8.1h-3.25zM1350.50 491.8h3.25v8.1h-3.25zM1383.00 491.8h3.25v8.1h-3.25zM1392.75 491.8h6.50v8.1h-6.50zM1405.75 491.8h3.25v8.1h-3.25zM1428.50 491.8h3.25v8.1h-3.25zM1438.25 491.8h3.25v8.1h-3.25zM1444.75 491.8h3.25v8.1h-3.25zM1454.50 491.8h3.25v8.1h-3.25zM1464.25 491.8h3.25v8.1h-3.25zM1483.75 491.8h3.25v8.1h-3.25zM1493.50 491.8h3.25v8.1h-3.25zM1509.75 491.8h3.25v8.1h-3.25zM1522.75 491.8h3.25v8.1h-3.25zM1535.75 491.8h6.50v8.1h-6.50zM1584.50 491.8h3.25v8.1h-3.25zM1600.75 491.8h3.25v8.1h-3.25zM1620.25 491.8h3.25v8.1h-3.25zM1633.25 491.8h3.25v8.1h-3.25zM1643.00 491.8h3.25v8.1h-3.25zM1649.50 491.8h3.25v8.1h-3.25zM1656.00 491.8h3.25v8.1h-3.25zM1672.25 491.8h3.25v8.1h-3.25zM122.00 483.7h3.25v8.1h-3.25zM131.75 483.7h3.25v8.1h-3.25zM144.75 483.7h3.25v8.1h-3.25zM157.75 483.7h3.25v8.1h-3.25zM164.25 483.7h3.25v8.1h-3.25zM174.00 483.7h6.50v8.1h-6.50zM183.75 483.7h3.25v8.1h-3.25zM206.50 483.7h6.50v8.1h-6.50zM216.25 483.7h3.25v8.1h-3.25zM235.75 483.7h3.25v8.1h-3.25zM252.00 483.7h3.25v8.1h-3.25zM304.00 483.7h3.25v8.1h-3.25zM330.00 483.7h3.25v8.1h-3.25zM346.25 483.7h3.25v8.1h-3.25zM359.25 483.7h9.75v8.1h-9.75zM378.75 483.7h6.50v8.1h-6.50zM388.50 483.7h3.25v8.1h-3.25zM408.00 483.7h3.25v8.1h-3.25zM434.00 483.7h3.25v8.1h-3.25zM460.00 483.7h3.25v8.1h-3.25zM466.50 483.7h3.25v8.1h-3.25zM473.00 483.7h3.25v8.1h-3.25zM482.75 483.7h3.25v8.1h-3.25zM505.50 483.7h3.25v8.1h-3.25zM525.00 483.7h3.25v8.1h-3.25zM534.75 483.7h3.25v8.1h-3.25zM580.25 483.7h3.25v8.1h-3.25zM596.50 483.7h3.25v8.1h-3.25zM606.25 483.7h3.25v8.1h-3.25zM655.00 483.7h3.25v8.1h-3.25zM661.50 483.7h3.25v8.1h-3.25zM674.50 483.7h3.25v8.1h-3.25zM684.25 483.7h3.25v8.1h-3.25zM690.75 483.7h6.50v8.1h-6.50zM703.75 483.7h3.25v8.1h-3.25zM729.75 483.7h3.25v8.1h-3.25zM736.25 483.7h3.25v8.1h-3.25zM752.50 483.7h3.25v8.1h-3.25zM775.25 483.7h3.25v8.1h-3.25zM814.25 483.7h3.25v8.1h-3.25zM833.75 483.7h3.25v8.1h-3.25zM850.00 483.7h3.25v8.1h-3.25zM869.50 483.7h3.25v8.1h-3.25zM895.50 483.7h3.25v8.1h-3.25zM915.00 483.7h3.25v8.1h-3.25zM921.50 483.7h3.25v8.1h-3.25zM944.25 483.7h6.50v8.1h-6.50zM983.25 483.7h3.25v8.1h-3.25zM993.00 483.7h3.25v8.1h-3.25zM1002.75 483.7h3.25v8.1h-3.25zM1028.75 483.7h3.25v8.1h-3.25zM1038.50 483.7h6.50v8.1h-6.50zM1058.00 483.7h3.25v8.1h-3.25zM1067.75 483.7h3.25v8.1h-3.25zM1087.25 483.7h3.25v8.1h-3.25zM1110.00 483.7h3.25v8.1h-3.25zM1123.00 483.7h9.75v8.1h-9.75zM1162.00 483.7h3.25v8.1h-3.25zM1171.75 483.7h3.25v8.1h-3.25zM1181.50 483.7h6.50v8.1h-6.50zM1207.50 483.7h3.25v8.1h-3.25zM1214.00 483.7h3.25v8.1h-3.25zM1227.00 483.7h9.75v8.1h-9.75zM1240.00 483.7h3.25v8.1h-3.25zM1259.50 483.7h3.25v8.1h-3.25zM1279.00 483.7h3.25v8.1h-3.25zM1311.50 483.7h6.50v8.1h-6.50zM1350.50 483.7h3.25v8.1h-3.25zM1357.00 483.7h3.25v8.1h-3.25zM1363.50 483.7h3.25v8.1h-3.25zM1402.50 483.7h3.25v8.1h-3.25zM1412.25 483.7h3.25v8.1h-3.25zM1431.75 483.7h3.25v8.1h-3.25zM1464.25 483.7h3.25v8.1h-3.25zM1470.75 483.7h6.50v8.1h-6.50zM1496.75 483.7h3.25v8.1h-3.25zM1503.25 483.7h3.25v8.1h-3.25zM1516.25 483.7h3.25v8.1h-3.25zM1529.25 483.7h3.25v8.1h-3.25zM1542.25 483.7h6.50v8.1h-6.50zM1555.25 483.7h3.25v8.1h-3.25zM1568.25 483.7h9.75v8.1h-9.75zM1581.25 483.7h6.50v8.1h-6.50zM1613.75 483.7h3.25v8.1h-3.25zM1620.25 483.7h3.25v8.1h-3.25zM1630.00 483.7h6.50v8.1h-6.50zM1649.50 483.7h3.25v8.1h-3.25zM1659.25 483.7h3.25v8.1h-3.25zM1665.75 483.7h3.25v8.1h-3.25zM122.00 475.6h16.25v8.1h-16.25zM141.50 475.6h3.25v8.1h-3.25zM148.00 475.6h3.25v8.1h-3.25zM157.75 475.6h6.50v8.1h-6.50zM174.00 475.6h6.50v8.1h-6.50zM196.75 475.6h3.25v8.1h-3.25zM206.50 475.6h6.50v8.1h-6.50zM222.75 475.6h3.25v8.1h-3.25zM242.25 475.6h6.50v8.1h-6.50zM252.00 475.6h6.50v8.1h-6.50zM265.00 475.6h3.25v8.1h-3.25zM271.50 475.6h6.50v8.1h-6.50zM284.50 475.6h6.50v8.1h-6.50zM297.50 475.6h3.25v8.1h-3.25zM307.25 475.6h19.50v8.1h-19.50zM333.25 475.6h3.25v8.1h-3.25zM339.75 475.6h3.25v8.1h-3.25zM356.00 475.6h6.50v8.1h-6.50zM365.75 475.6h3.25v8.1h-3.25zM372.25 475.6h3.25v8.1h-3.25zM382.00 475.6h3.25v8.1h-3.25zM388.50 475.6h6.50v8.1h-6.50zM401.50 475.6h3.25v8.1h-3.25zM411.25 475.6h9.75v8.1h-9.75zM430.75 475.6h6.50v8.1h-6.50zM453.50 475.6h6.50v8.1h-6.50zM463.25 475.6h3.25v8.1h-3.25zM473.00 475.6h6.50v8.1h-6.50zM486.00 475.6h9.75v8.1h-9.75zM518.50 475.6h13.00v8.1h-13.00zM534.75 475.6h3.25v8.1h-3.25zM541.25 475.6h3.25v8.1h-3.25zM560.75 475.6h42.25v8.1h-42.25zM609.50 475.6h6.50v8.1h-6.50zM619.25 475.6h3.25v8.1h-3.25zM625.75 475.6h6.50v8.1h-6.50zM651.75 475.6h3.25v8.1h-3.25zM658.25 475.6h6.50v8.1h-6.50zM668.00 475.6h6.50v8.1h-6.50zM677.75 475.6h9.75v8.1h-9.75zM694.00 475.6h3.25v8.1h-3.25zM707.00 475.6h6.50v8.1h-6.50zM716.75 475.6h9.75v8.1h-9.75zM729.75 475.6h3.25v8.1h-3.25zM736.25 475.6h3.25v8.1h-3.25zM742.75 475.6h6.50v8.1h-6.50zM768.75 475.6h3.25v8.1h-3.25zM775.25 475.6h13.00v8.1h-13.00zM791.50 475.6h9.75v8.1h-9.75zM804.50 475.6h3.25v8.1h-3.25zM827.25 475.6h9.75v8.1h-9.75zM856.50 475.6h3.25v8.1h-3.25zM863.00 475.6h13.00v8.1h-13.00zM889.00 475.6h3.25v8.1h-3.25zM895.50 475.6h3.25v8.1h-3.25zM905.25 475.6h3.25v8.1h-3.25zM924.75 475.6h3.25v8.1h-3.25zM941.00 475.6h6.50v8.1h-6.50zM950.75 475.6h6.50v8.1h-6.50zM960.50 475.6h6.50v8.1h-6.50zM976.75 475.6h9.75v8.1h-9.75zM989.75 475.6h9.75v8.1h-9.75zM1002.75 475.6h3.25v8.1h-3.25zM1009.25 475.6h3.25v8.1h-3.25zM1015.75 475.6h3.25v8.1h-3.25zM1022.25 475.6h3.25v8.1h-3.25zM1038.50 475.6h3.25v8.1h-3.25zM1058.00 475.6h16.25v8.1h-16.25zM1084.00 475.6h3.25v8.1h-3.25zM1093.75 475.6h3.25v8.1h-3.25zM1100.25 475.6h9.75v8.1h-9.75zM1116.50 475.6h6.50v8.1h-6.50zM1129.50 475.6h3.25v8.1h-3.25zM1139.25 475.6h6.50v8.1h-6.50zM1149.00 475.6h3.25v8.1h-3.25zM1155.50 475.6h3.25v8.1h-3.25zM1162.00 475.6h3.25v8.1h-3.25zM1171.75 475.6h6.50v8.1h-6.50zM1188.00 475.6h6.50v8.1h-6.50zM1197.75 475.6h9.75v8.1h-9.75zM1220.50 475.6h3.25v8.1h-3.25zM1233.50 475.6h6.50v8.1h-6.50zM1246.50 475.6h16.25v8.1h-16.25zM1288.75 475.6h3.25v8.1h-3.25zM1295.25 475.6h9.75v8.1h-9.75zM1308.25 475.6h16.25v8.1h-16.25zM1327.75 475.6h3.25v8.1h-3.25zM1334.25 475.6h6.50v8.1h-6.50zM1360.25 475.6h3.25v8.1h-3.25zM1366.75 475.6h3.25v8.1h-3.25zM1376.50 475.6h3.25v8.1h-3.25zM1389.50 475.6h3.25v8.1h-3.25zM1396.00 475.6h6.50v8.1h-6.50zM1405.75 475.6h3.25v8.1h-3.25zM1425.25 475.6h6.50v8.1h-6.50zM1435.00 475.6h6.50v8.1h-6.50zM1444.75 475.6h3.25v8.1h-3.25zM1451.25 475.6h6.50v8.1h-6.50zM1474.00 475.6h6.50v8.1h-6.50zM1490.25 475.6h3.25v8.1h-3.25zM1496.75 475.6h16.25v8.1h-16.25zM1516.25 475.6h13.00v8.1h-13.00zM1535.75 475.6h3.25v8.1h-3.25zM1542.25 475.6h3.25v8.1h-3.25zM1548.75 475.6h6.50v8.1h-6.50zM1558.50 475.6h3.25v8.1h-3.25zM1568.25 475.6h3.25v8.1h-3.25zM1581.25 475.6h3.25v8.1h-3.25zM1587.75 475.6h3.25v8.1h-3.25zM1594.25 475.6h9.75v8.1h-9.75zM1607.25 475.6h6.50v8.1h-6.50zM1623.50 475.6h26.00v8.1h-26.00zM1656.00 475.6h9.75v8.1h-9.75zM1678.75 475.6h3.25v8.1h-3.25zM183.75 467.5h3.25v8.1h-3.25zM190.25 467.5h3.25v8.1h-3.25zM196.75 467.5h3.25v8.1h-3.25zM206.50 467.5h3.25v8.1h-3.25zM219.50 467.5h3.25v8.1h-3.25zM323.50 467.5h3.25v8.1h-3.25zM359.25 467.5h3.25v8.1h-3.25zM443.75 467.5h3.25v8.1h-3.25zM466.50 467.5h3.25v8.1h-3.25zM508.75 467.5h3.25v8.1h-3.25zM573.75 467.5h3.25v8.1h-3.25zM580.25 467.5h3.25v8.1h-3.25zM765.50 467.5h3.25v8.1h-3.25zM785.00 467.5h3.25v8.1h-3.25zM807.75 467.5h3.25v8.1h-3.25zM840.25 467.5h3.25v8.1h-3.25zM850.00 467.5h3.25v8.1h-3.25zM902.00 467.5h3.25v8.1h-3.25zM928.00 467.5h3.25v8.1h-3.25zM986.50 467.5h3.25v8.1h-3.25zM1090.50 467.5h3.25v8.1h-3.25zM1103.50 467.5h3.25v8.1h-3.25zM1184.75 467.5h3.25v8.1h-3.25zM1210.75 467.5h3.25v8.1h-3.25zM1246.50 467.5h3.25v8.1h-3.25zM1376.50 467.5h3.25v8.1h-3.25zM1389.50 467.5h6.50v8.1h-6.50zM1412.25 467.5h3.25v8.1h-3.25zM1435.00 467.5h6.50v8.1h-6.50zM1477.25 467.5h6.50v8.1h-6.50zM1519.50 467.5h3.25v8.1h-3.25zM1529.25 467.5h3.25v8.1h-3.25z"/></g>
<g fill="#46aabf"><path id="hm5" d="M151.25 491.8h9.75v8.1h-9.75zM174.00 491.8h3.25v8.1h-3.25zM180.50 491.8h3.25v8.1h-3.25zM193.50 491.8h3.25v8.1h-3.25zM216.25 491.8h3.25v8.1h-3.25zM222.75 491.8h6.50v8.1h-6.50zM239.00 491.8h6.50v8.1h-6.50zM252.00 491.8h3.25v8.1h-3.25zM258.50 491.8h3.25v8.1h-3.25zM268.25 491.8h3.25v8.1h-3.25zM278.00 491.8h9.75v8.1h-9.75zM294.25 491.8h3.25v8.1h-3.25zM317.00 491.8h6.50v8.1h-6.50zM336.50 491.8h3.25v8.1h-3.25zM349.50 491.8h6.50v8.1h-6.50zM369.00 491.8h3.25v8.1h-3.25zM375.50 491.8h6.50v8.1h-6.50zM391.75 491.8h3.25v8.1h-3.25zM398.25 491.8h3.25v8.1h-3.25zM404.75 491.8h6.50v8.1h-6.50zM414.50 491.8h3.25v8.1h-3.25zM434.00 491.8h3.25v8.1h-3.25zM460.00 491.8h3.25v8.1h-3.25zM479.50 491.8h13.00v8.1h-13.00zM499.00 491.8h3.25v8.1h-3.25zM534.75 491.8h3.25v8.1h-3.25zM541.25 491.8h16.25v8.1h-16.25zM564.00 491.8h3.25v8.1h-3.25zM573.75 491.8h3.25v8.1h-3.25zM590.00 491.8h3.25v8.1h-3.25zM599.75 491.8h9.75v8.1h-9.75zM629.00 491.8h3.25v8.1h-3.25zM642.00 491.8h3.25v8.1h-3.25zM655.00 491.8h6.50v8.1h-6.50zM681.00 491.8h3.25v8.1h-3.25zM687.50 491.8h3.25v8.1h-3.25zM694.00 491.8h3.25v8.1h-3.25zM707.00 491.8h3.25v8.1h-3.25zM726.50 491.8h3.25v8.1h-3.25zM736.25 491.8h6.50v8.1h-6.50zM765.50 491.8h3.25v8.1h-3.25zM772.00 491.8h3.25v8.1h-3.25zM785.00 491.8h3.25v8.1h-3.25zM791.50 491.8h3.25v8.1h-3.25zM804.50 491.8h3.25v8.1h-3.25zM817.50 491.8h9.75v8.1h-9.75zM830.50 491.8h3.25v8.1h-3.25zM837.00 491.8h9.75v8.1h-9.75zM853.25 491.8h9.75v8.1h-9.75zM869.50 491.8h6.50v8.1h-6.50zM879.25 491.8h3.25v8.1h-3.25zM892.25 491.8h6.50v8.1h-6.50zM908.50 491.8h3.25v8.1h-3.25zM918.25 491.8h9.75v8.1h-9.75zM937.75 491.8h3.25v8.1h-3.25zM950.75 491.8h3.25v8.1h-3.25zM957.25 491.8h3.25v8.1h-3.25zM973.50 491.8h3.25v8.1h-3.25zM983.25 491.8h3.25v8.1h-3.25zM993.00 491.8h6.50v8.1h-6.50zM1002.75 491.8h3.25v8.1h-3.25zM1012.50 491.8h3.25v8.1h-3.25zM1019.00 491.8h6.50v8.1h-6.50zM1028.75 491.8h3.25v8.1h-3.25zM1045.00 491.8h3.25v8.1h-3.25zM1051.50 491.8h3.25v8.1h-3.25zM1061.25 491.8h6.50v8.1h-6.50zM1074.25 491.8h6.50v8.1h-6.50zM1084.00 491.8h3.25v8.1h-3.25zM1100.25 491.8h6.50v8.1h-6.50zM1113.25 491.8h13.00v8.1h-13.00zM1155.50 491.8h3.25v8.1h-3.25zM1165.25 491.8h3.25v8.1h-3.25zM1178.25 491.8h13.00v8.1h-13.00zM1197.75 491.8h3.25v8.1h-3.25zM1204.25 491.8h16.25v8.1h-16.25zM1227.00 491.8h3.25v8.1h-3.25zM1233.50 491.8h6.50v8.1h-6.50zM1249.75 491.8h13.00v8.1h-13.00zM1269.25 491.8h3.25v8.1h-3.25zM1298.50 491.8h9.75v8.1h-9.75zM1318.00 491.8h9.75v8.1h-9.75zM1331.00 491.8h13.00v8.1h-13.00zM1357.00 491.8h6.50v8.1h-6.50zM1370.00 491.8h6.50v8.1h-6.50zM1379.75 491.8h3.25v8.1h-3.25zM1386.25 491.8h6.50v8.1h-6.50zM1402.50 491.8h3.25v8.1h-3.25zM1409.00 491.8h3.25v8.1h-3.25zM1425.25 491.8h3.25v8.1h-3.25zM1435.00 491.8h3.25v8.1h-3.25zM1441.50 491.8h3.25v8.1h-3.25zM1461.00 491.8h3.25v8.1h-3.25zM1467.50 491.8h6.50v8.1h-6.50zM1477.25 491.8h6.50v8.1h-6.50zM1487.00 491.8h3.25v8.1h-3.25zM1503.25 491.8h3.25v8.1h-3.25zM1542.25 491.8h6.50v8.1h-6.50zM1555.25 491.8h9.75v8.1h-9.75zM1587.75 491.8h3.25v8.1h-3.25zM1594.25 491.8h3.25v8.1h-3.25zM1613.75 491.8h3.25v8.1h-3.25zM1623.50 491.8h3.25v8.1h-3.25zM1630.00 491.8h3.25v8.1h-3.25zM1636.50 491.8h3.25v8.1h-3.25zM1646.25 491.8h3.25v8.1h-3.25zM1652.75 491.8h3.25v8.1h-3.25zM1662.50 491.8h3.25v8.1h-3.25zM1675.50 491.8h6.50v8.1h-6.50zM125.25 483.7h6.50v8.1h-6.50zM135.00 483.7h3.25v8.1h-3.25zM141.50 483.7h3.25v8.1h-3.25zM151.25 483.7h6.50v8.1h-6.50zM167.50 483.7h3.25v8.1h-3.25zM187.00 483.7h9.75v8.1h-9.75zM200.00 483.7h6.50v8.1h-6.50zM213.00 483.7h3.25v8.1h-3.25zM219.50 483.7h3.25v8.1h-3.25zM226.00 483.7h3.25v8.1h-3.25zM232.50 483.7h3.25v8.1h-3.25zM242.25 483.7h3.25v8.1h-3.25zM255.25 483.7h29.25v8.1h-29.25zM287.75 483.7h9.75v8.1h-9.75zM300.75 483.7h3.25v8.1h-3.25zM317.00 483.7h3.25v8.1h-3.25zM323.50 483.7h3.25v8.1h-3.25zM333.25 483.7h3.25v8.1h-3.25zM339.75 483.7h3.25v8.1h-3.25zM356.00 483.7h3.25v8.1h-3.25zM369.00 483.7h9.75v8.1h-9.75zM391.75 483.7h3.25v8.1h-3.25zM414.50 483.7h6.50v8.1h-6.50zM427.50 483.7h3.25v8.1h-3.25zM437.25 483.7h16.25v8.1h-16.25zM456.75 483.7h3.25v8.1h-3.25zM463.25 483.7h3.25v8.1h-3.25zM469.75 483.7h3.25v8.1h-3.25zM476.25 483.7h3.25v8.1h-3.25zM486.00 483.7h3.25v8.1h-3.25zM499.00 483.7h6.50v8.1h-6.50zM508.75 483.7h3.25v8.1h-3.25zM515.25 483.7h3.25v8.1h-3.25zM521.75 483.7h3.25v8.1h-3.25zM531.50 483.7h3.25v8.1h-3.25zM538.00 483.7h6.50v8.1h-6.50zM551.00 483.7h6.50v8.1h-6.50zM564.00 483.7h3.25v8.1h-3.25zM570.50 483.7h3.25v8.1h-3.25zM583.50 483.7h6.50v8.1h-6.50zM593.25 483.7h3.25v8.1h-3.25zM619.25 483.7h3.25v8.1h-3.25zM629.00 483.7h3.25v8.1h-3.25zM642.00 483.7h6.50v8.1h-6.50zM658.25 483.7h3.25v8.1h-3.25zM664.75 483.7h9.75v8.1h-9.75zM677.75 483.7h6.50v8.1h-6.50zM700.50 483.7h3.25v8.1h-3.25zM716.75 483.7h3.25v8.1h-3.25zM726.50 483.7h3.25v8.1h-3.25zM733.00 483.7h3.25v8.1h-3.25zM749.25 483.7h3.25v8.1h-3.25zM762.25 483.7h6.50v8.1h-6.50zM772.00 483.7h3.25v8.1h-3.25zM788.25 483.7h3.25v8.1h-3.25zM798.00 483.7h9.75v8.1h-9.75zM811.00 483.7h3.25v8.1h-3.25zM817.50 483.7h3.25v8.1h-3.25zM824.00 483.7h3.25v8.1h-3.25zM830.50 483.7h3.25v8.1h-3.25zM837.00 483.7h3.25v8.1h-3.25zM846.75 483.7h3.25v8.1h-3.25zM853.25 483.7h9.75v8.1h-9.75zM866.25 483.7h3.25v8.1h-3.25zM885.75 483.7h3.25v8.1h-3.25zM902.00 483.7h6.50v8.1h-6.50zM931.25 483.7h9.75v8.1h-9.75zM963.75 483.7h19.50v8.1h-19.50zM986.50 483.7h3.25v8.1h-3.25zM996.25 483.7h6.50v8.1h-6.50zM1006.00 483.7h16.25v8.1h-16.25zM1025.50 483.7h3.25v8.1h-3.25zM1032.00 483.7h3.25v8.1h-3.25zM1051.50 483.7h6.50v8.1h-6.50zM1071.00 483.7h3.25v8.1h-3.25zM1080.75 483.7h3.25v8.1h-3.25zM1097.00 483.7h9.75v8.1h-9.75zM1113.25 483.7h3.25v8.1h-3.25zM1132.75 483.7h3.25v8.1h-3.25zM1145.75 483.7h3.25v8.1h-3.25zM1152.25 483.7h3.25v8.1h-3.25zM1175.00 483.7h3.25v8.1h-3.25zM1197.75 483.7h9.75v8.1h-9.75zM1217.25 483.7h9.75v8.1h-9.75zM1236.75 483.7h3.25v8.1h-3.25zM1246.50 483.7h3.25v8.1h-3.25zM1256.25 483.7h3.25v8.1h-3.25zM1285.50 483.7h3.25v8.1h-3.25zM1292.00 483.7h3.25v8.1h-3.25zM1298.50 483.7h6.50v8.1h-6.50zM1331.00 483.7h6.50v8.1h-6.50zM1344.00 483.7h3.25v8.1h-3.25zM1360.25 483.7h3.25v8.1h-3.25zM1379.75 483.7h6.50v8.1h-6.50zM1389.50 483.7h13.00v8.1h-13.00zM1405.75 483.7h6.50v8.1h-6.50zM1418.75 483.7h3.25v8.1h-3.25zM1444.75 483.7h3.25v8.1h-3.25zM1451.25 483.7h3.25v8.1h-3.25zM1457.75 483.7h6.50v8.1h-6.50zM1483.75 483.7h3.25v8.1h-3.25zM1490.25 483.7h3.25v8.1h-3.25zM1500.00 483.7h3.25v8.1h-3.25zM1506.50 483.7h3.25v8.1h-3.25zM1513.00 483.7h3.25v8.1h-3.25zM1522.75 483.7h6.50v8.1h-6.50zM1535.75 483.7h3.25v8.1h-3.25zM1548.75 483.7h3.25v8.1h-3.25zM1558.50 483.7h6.50v8.1h-6.50zM1587.75 483.7h6.50v8.1h-6.50zM1597.50 483.7h9.75v8.1h-9.75zM1610.50 483.7h3.25v8.1h-3.25zM1617.00 483.7h3.25v8.1h-3.25zM1623.50 483.7h6.50v8.1h-6.50zM1639.75 483.7h6.50v8.1h-6.50zM1656.00 483.7h3.25v8.1h-3.25zM1662.50 483.7h3.25v8.1h-3.25zM1669.00 483.7h3.25v8.1h-3.25zM1675.50 483.7h3.25v8.1h-3.25zM138.25 475.6h3.25v8.1h-3.25zM164.25 475.6h3.25v8.1h-3.25zM183.75 475.6h9.75v8.1h-9.75zM200.00 475.6h3.25v8.1h-3.25zM216.25 475.6h6.50v8.1h-6.50zM232.50 475.6h3.25v8.1h-3.25zM326.75 475.6h6.50v8.1h-6.50zM349.50 475.6h3.25v8.1h-3.25zM421.00 475.6h3.25v8.1h-3.25zM437.25 475.6h3.25v8.1h-3.25zM443.75 475.6h3.25v8.1h-3.25zM450.25 475.6h3.25v8.1h-3.25zM502.25 475.6h3.25v8.1h-3.25zM515.25 475.6h3.25v8.1h-3.25zM538.00 475.6h3.25v8.1h-3.25zM603.00 475.6h3.25v8.1h-3.25zM655.00 475.6h3.25v8.1h-3.25zM674.50 475.6h3.25v8.1h-3.25zM820.75 475.6h3.25v8.1h-3.25zM840.25 475.6h6.50v8.1h-6.50zM853.25 475.6h3.25v8.1h-3.25zM882.50 475.6h3.25v8.1h-3.25zM947.50 475.6h3.25v8.1h-3.25zM986.50 475.6h3.25v8.1h-3.25zM1006.00 475.6h3.25v8.1h-3.25zM1074.25 475.6h3.25v8.1h-3.25zM1110.00 475.6h6.50v8.1h-6.50zM1152.25 475.6h3.25v8.1h-3.25zM1168.50 475.6h3.25v8.1h-3.25zM1178.25 475.6h3.25v8.1h-3.25zM1184.75 475.6h3.25v8.1h-3.25zM1194.50 475.6h3.25v8.1h-3.25zM1207.50 475.6h6.50v8.1h-6.50zM1217.25 475.6h3.25v8.1h-3.25zM1223.75 475.6h9.75v8.1h-9.75zM1279.00 475.6h9.75v8.1h-9.75zM1392.75 475.6h3.25v8.1h-3.25zM1402.50 475.6h3.25v8.1h-3.25zM1415.50 475.6h3.25v8.1h-3.25zM1422.00 475.6h3.25v8.1h-3.25zM1448.00 475.6h3.25v8.1h-3.25zM1464.25 475.6h3.25v8.1h-3.25zM1470.75 475.6h3.25v8.1h-3.25zM1513.00 475.6h3.25v8.1h-3.25zM1532.50 475.6h3.25v8.1h-3.25zM1561.75 475.6h3.25v8.1h-3.25zM1571.50 475.6h3.25v8.1h-3.25zM1584.50 475.6h3.25v8.1h-3.25zM1613.75 475.6h6.50v8.1h-6.50zM1672.25 475.6h3.25v8.1h-3.25zM131.75 467.5h9.75v8.1h-9.75zM161.00 467.5h3.25v8.1h-3.25zM174.00 467.5h3.25v8.1h-3.25zM203.25 467.5h3.25v8.1h-3.25zM209.75 467.5h3.25v8.1h-3.25zM216.25 467.5h3.25v8.1h-3.25zM232.50 467.5h13.00v8.1h-13.00zM248.75 467.5h3.25v8.1h-3.25zM265.00 467.5h6.50v8.1h-6.50zM274.75 467.5h9.75v8.1h-9.75zM291.00 467.5h3.25v8.1h-3.25zM304.00 467.5h3.25v8.1h-3.25zM346.25 467.5h3.25v8.1h-3.25zM352.75 467.5h6.50v8.1h-6.50zM365.75 467.5h3.25v8.1h-3.25zM372.25 467.5h6.50v8.1h-6.50zM385.25 467.5h3.25v8.1h-3.25zM395.00 467.5h3.25v8.1h-3.25zM408.00 467.5h9.75v8.1h-9.75zM424.25 467.5h6.50v8.1h-6.50zM437.25 467.5h3.25v8.1h-3.25zM450.25 467.5h3.25v8.1h-3.25zM486.00 467.5h3.25v8.1h-3.25zM492.50 467.5h3.25v8.1h-3.25zM505.50 467.5h3.25v8.1h-3.25zM512.00 467.5h13.00v8.1h-13.00zM528.25 467.5h13.00v8.1h-13.00zM557.50 467.5h3.25v8.1h-3.25zM570.50 467.5h3.25v8.1h-3.25zM577.00 467.5h3.25v8.1h-3.25zM599.75 467.5h3.25v8.1h-3.25zM632.25 467.5h3.25v8.1h-3.25zM638.75 467.5h6.50v8.1h-6.50zM648.50 467.5h13.00v8.1h-13.00zM664.75 467.5h9.75v8.1h-9.75zM677.75 467.5h3.25v8.1h-3.25zM697.25 467.5h3.25v8.1h-3.25zM703.75 467.5h3.25v8.1h-3.25zM710.25 467.5h3.25v8.1h-3.25zM720.00 467.5h3.25v8.1h-3.25zM726.50 467.5h6.50v8.1h-6.50zM742.75 467.5h16.25v8.1h-16.25zM762.25 467.5h3.25v8.1h-3.25zM801.25 467.5h6.50v8.1h-6.50zM811.00 467.5h6.50v8.1h-6.50zM820.75 467.5h9.75v8.1h-9.75zM837.00 467.5h3.25v8.1h-3.25zM843.50 467.5h3.25v8.1h-3.25zM853.25 467.5h3.25v8.1h-3.25zM859.75 467.5h3.25v8.1h-3.25zM869.50 467.5h3.25v8.1h-3.25zM898.75 467.5h3.25v8.1h-3.25zM908.50 467.5h3.25v8.1h-3.25zM915.00 467.5h3.25v8.1h-3.25zM921.50 467.5h3.25v8.1h-3.25zM947.50 467.5h3.25v8.1h-3.25zM957.25 467.5h3.25v8.1h-3.25zM980.00 467.5h3.25v8.1h-3.25zM999.50 467.5h9.75v8.1h-9.75zM1019.00 467.5h6.50v8.1h-6.50zM1045.00 467.5h3.25v8.1h-3.25zM1051.50 467.5h3.25v8.1h-3.25zM1061.25 467.5h3.25v8.1h-3.25zM1087.25 467.5h3.25v8.1h-3.25zM1093.75 467.5h6.50v8.1h-6.50zM1106.75 467.5h16.25v8.1h-16.25zM1126.25 467.5h3.25v8.1h-3.25zM1139.25 467.5h9.75v8.1h-9.75zM1155.50 467.5h3.25v8.1h-3.25zM1162.00 467.5h3.25v8.1h-3.25zM1168.50 467.5h13.00v8.1h-13.00zM1191.25 467.5h3.25v8.1h-3.25zM1236.75 467.5h3.25v8.1h-3.25zM1249.75 467.5h3.25v8.1h-3.25zM1256.25 467.5h3.25v8.1h-3.25zM1266.00 467.5h3.25v8.1h-3.25zM1282.25 467.5h3.25v8.1h-3.25zM1295.25 467.5h3.25v8.1h-3.25zM1305.00 467.5h3.25v8.1h-3.25zM1314.75 467.5h3.25v8.1h-3.25zM1334.25 467.5h3.25v8.1h-3.25zM1350.50 467.5h3.25v8.1h-3.25zM1360.25 467.5h6.50v8.1h-6.50zM1373.25 467.5h3.25v8.1h-3.25zM1383.00 467.5h3.25v8.1h-3.25zM1396.00 467.5h3.25v8.1h-3.25zM1405.75 467.5h6.50v8.1h-6.50zM1415.50 467.5h3.25v8.1h-3.25zM1422.00 467.5h3.25v8.1h-3.25zM1431.75 467.5h3.25v8.1h-3.25zM1448.00 467.5h3.25v8.1h-3.25zM1461.00 467.5h3.25v8.1h-3.25zM1483.75 467.5h6.50v8.1h-6.50zM1493.50 467.5h3.25v8.1h-3.25zM1503.25 467.5h6.50v8.1h-6.50zM1513.00 467.5h6.50v8.1h-6.50zM1526.00 467.5h3.25v8.1h-3.25zM1532.50 467.5h9.75v8.1h-9.75zM1545.50 467.5h6.50v8.1h-6.50zM1558.50 467.5h9.75v8.1h-9.75zM1571.50 467.5h3.25v8.1h-3.25zM1584.50 467.5h3.25v8.1h-3.25zM1597.50 467.5h3.25v8.1h-3.25zM1604.00 467.5h3.25v8.1h-3.25zM1620.25 467.5h3.25v8.1h-3.25zM1630.00 467.5h3.25v8.1h-3.25zM1639.75 467.5h3.25v8.1h-3.25zM1646.25 467.5h3.25v8.1h-3.25zM1669.00 467.5h9.75v8.1h-9.75zM135.00 459.4h3.25v8.1h-3.25zM235.75 459.4h3.25v8.1h-3.25zM304.00 459.4h3.25v8.1h-3.25zM388.50 459.4h3.25v8.1h-3.25zM427.50 459.4h3.25v8.1h-3.25zM482.75 459.4h3.25v8.1h-3.25zM502.25 459.4h3.25v8.1h-3.25zM538.00 459.4h3.25v8.1h-3.25zM567.25 459.4h3.25v8.1h-3.25zM720.00 459.4h3.25v8.1h-3.25zM872.75 459.4h3.25v8.1h-3.25zM882.50 459.4h3.25v8.1h-3.25zM1032.00 459.4h3.25v8.1h-3.25zM1249.75 459.4h3.25v8.1h-3.25zM1259.50 459.4h3.25v8.1h-3.25zM1266.00 459.4h3.25v8.1h-3.25zM1288.75 459.4h3.25v8.1h-3.25zM1568.25 459.4h3.25v8.1h-3.25zM1604.00 459.4h3.25v8.1h-3.25zM135.00 451.3h3.25v8.1h-3.25zM219.50 451.3h3.25v8.1h-3.25zM268.25 451.3h3.25v8.1h-3.25zM346.25 451.3h3.25v8.1h-3.25zM401.50 451.3h3.25v8.1h-3.25zM573.75 451.3h3.25v8.1h-3.25zM684.25 451.3h6.50v8.1h-6.50zM762.25 451.3h3.25v8.1h-3.25zM866.25 451.3h3.25v8.1h-3.25zM872.75 451.3h3.25v8.1h-3.25zM915.00 451.3h3.25v8.1h-3.25zM963.75 451.3h3.25v8.1h-3.25zM1061.25 451.3h3.25v8.1h-3.25zM1097.00 451.3h3.25v8.1h-3.25zM1126.25 451.3h3.25v8.1h-3.25zM1201.00 451.3h3.25v8.1h-3.25zM1272.50 451.3h3.25v8.1h-3.25zM1285.50 451.3h3.25v8.1h-3.25zM1318.00 451.3h3.25v8.1h-3.25zM1363.50 451.3h3.25v8.1h-3.25zM1526.00 451.3h3.25v8.1h-3.25zM300.75 443.2h3.25v8.1h-3.25zM352.75 443.2h3.25v8.1h-3.25zM505.50 443.2h3.25v8.1h-3.25zM593.25 443.2h3.25v8.1h-3.25zM619.25 443.2h3.25v8.1h-3.25zM856.50 443.2h3.25v8.1h-3.25zM1126.25 443.2h3.25v8.1h-3.25zM1227.00 443.2h3.25v8.1h-3.25zM1389.50 443.2h3.25v8.1h-3.25zM1545.50 443.2h3.25v8.1h-3.25z"/></g>
<g fill="#7fcfb9"><path id="hm6" d="M248.75 483.7h3.25v8.1h-3.25zM307.25 483.7h3.25v8.1h-3.25zM336.50 483.7h3.25v8.1h-3.25zM398.25 483.7h3.25v8.1h-3.25zM424.25 483.7h3.25v8.1h-3.25zM479.50 483.7h3.25v8.1h-3.25zM567.25 483.7h3.25v8.1h-3.25zM707.00 483.7h3.25v8.1h-3.25zM908.50 483.7h3.25v8.1h-3.25zM1074.25 483.7h3.25v8.1h-3.25zM1139.25 483.7h3.25v8.1h-3.25zM1188.00 483.7h3.25v8.1h-3.25zM1308.25 483.7h3.25v8.1h-3.25zM1324.50 483.7h6.50v8.1h-6.50zM1428.50 483.7h3.25v8.1h-3.25zM1454.50 483.7h3.25v8.1h-3.25zM1552.00 483.7h3.25v8.1h-3.25zM151.25 467.5h6.50v8.1h-6.50zM164.25 467.5h3.25v8.1h-3.25zM170.75 467.5h3.25v8.1h-3.25zM177.25 467.5h6.50v8.1h-6.50zM187.00 467.5h3.25v8.1h-3.25zM193.50 467.5h3.25v8.1h-3.25zM200.00 467.5h3.25v8.1h-3.25zM213.00 467.5h3.25v8.1h-3.25zM222.75 467.5h3.25v8.1h-3.25zM245.50 467.5h3.25v8.1h-3.25zM252.00 467.5h6.50v8.1h-6.50zM261.75 467.5h3.25v8.1h-3.25zM307.25 467.5h3.25v8.1h-3.25zM317.00 467.5h3.25v8.1h-3.25zM339.75 467.5h3.25v8.1h-3.25zM362.50 467.5h3.25v8.1h-3.25zM378.75 467.5h3.25v8.1h-3.25zM388.50 467.5h6.50v8.1h-6.50zM404.75 467.5h3.25v8.1h-3.25zM421.00 467.5h3.25v8.1h-3.25zM430.75 467.5h6.50v8.1h-6.50zM447.00 467.5h3.25v8.1h-3.25zM460.00 467.5h6.50v8.1h-6.50zM473.00 467.5h13.00v8.1h-13.00zM495.75 467.5h3.25v8.1h-3.25zM525.00 467.5h3.25v8.1h-3.25zM541.25 467.5h9.75v8.1h-9.75zM554.25 467.5h3.25v8.1h-3.25zM560.75 467.5h6.50v8.1h-6.50zM586.75 467.5h13.00v8.1h-13.00zM606.25 467.5h9.75v8.1h-9.75zM619.25 467.5h3.25v8.1h-3.25zM625.75 467.5h3.25v8.1h-3.25zM674.50 467.5h3.25v8.1h-3.25zM687.50 467.5h3.25v8.1h-3.25zM694.00 467.5h3.25v8.1h-3.25zM716.75 467.5h3.25v8.1h-3.25zM733.00 467.5h6.50v8.1h-6.50zM768.75 467.5h3.25v8.1h-3.25zM775.25 467.5h6.50v8.1h-6.50zM788.25 467.5h3.25v8.1h-3.25zM794.75 467.5h6.50v8.1h-6.50zM833.75 467.5h3.25v8.1h-3.25zM846.75 467.5h3.25v8.1h-3.25zM879.25 467.5h9.75v8.1h-9.75zM905.25 467.5h3.25v8.1h-3.25zM941.00 467.5h6.50v8.1h-6.50zM960.50 467.5h3.25v8.1h-3.25zM970.25 467.5h9.75v8.1h-9.75zM989.75 467.5h3.25v8.1h-3.25zM996.25 467.5h3.25v8.1h-3.25zM1009.25 467.5h3.25v8.1h-3.25zM1015.75 467.5h3.25v8.1h-3.25zM1025.50 467.5h13.00v8.1h-13.00zM1048.25 467.5h3.25v8.1h-3.25zM1054.75 467.5h6.50v8.1h-6.50zM1064.50 467.5h3.25v8.1h-3.25zM1071.00 467.5h6.50v8.1h-6.50zM1084.00 467.5h3.25v8.1h-3.25zM1123.00 467.5h3.25v8.1h-3.25zM1129.50 467.5h3.25v8.1h-3.25zM1149.00 467.5h3.25v8.1h-3.25zM1181.50 467.5h3.25v8.1h-3.25zM1188.00 467.5h3.25v8.1h-3.25zM1201.00 467.5h9.75v8.1h-9.75zM1220.50 467.5h3.25v8.1h-3.25zM1230.25 467.5h3.25v8.1h-3.25zM1240.00 467.5h6.50v8.1h-6.50zM1259.50 467.5h3.25v8.1h-3.25zM1272.50 467.5h3.25v8.1h-3.25zM1279.00 467.5h3.25v8.1h-3.25zM1285.50 467.5h3.25v8.1h-3.25zM1292.00 467.5h3.25v8.1h-3.25zM1311.50 467.5h3.25v8.1h-3.25zM1324.50 467.5h9.75v8.1h-9.75zM1340.75 467.5h3.25v8.1h-3.25zM1366.75 467.5h3.25v8.1h-3.25zM1399.25 467.5h6.50v8.1h-6.50zM1418.75 467.5h3.25v8.1h-3.25zM1441.50 467.5h3.25v8.1h-3.25zM1451.25 467.5h6.50v8.1h-6.50zM1464.25 467.5h3.25v8.1h-3.25zM1496.75 467.5h3.25v8.1h-3.25zM1552.00 467.5h3.25v8.1h-3.25zM1568.25 467.5h3.25v8.1h-3.25zM1581.25 467.5h3.25v8.1h-3.25zM1587.75 467.5h3.25v8.1h-3.25zM1594.25 467.5h3.25v8.1h-3.25zM1626.75 467.5h3.25v8.1h-3.25zM1643.00 467.5h3.25v8.1h-3.25zM1656.00 467.5h3.25v8.1h-3.25zM1665.75 467.5h3.25v8.1h-3.25zM1678.75 467.5h3.25v8.1h-3.25zM125.25 459.4h9.75v8.1h-9.75zM141.50 459.4h3.25v8.1h-3.25zM157.75 459.4h3.25v8.1h-3.25zM167.50 459.4h3.25v8.1h-3.25zM174.00 459.4h3.25v8.1h-3.25zM183.75 459.4h3.25v8.1h-3.25zM193.50 459.4h9.75v8.1h-9.75zM209.75 459.4h6.50v8.1h-6.50zM222.75 459.4h13.00v8.1h-13.00zM239.00 459.4h3.25v8.1h-3.25zM261.75 459.4h3.25v8.1h-3.25zM271.50 459.4h13.00v8.1h-13.00zM287.75 459.4h3.25v8.1h-3.25zM300.75 459.4h3.25v8.1h-3.25zM307.25 459.4h3.25v8.1h-3.25zM313.75 459.4h3.25v8.1h-3.25zM323.50 459.4h3.25v8.1h-3.25zM330.00 459.4h3.25v8.1h-3.25zM339.75 459.4h3.25v8.1h-3.25zM346.25 459.4h3.25v8.1h-3.25zM356.00 459.4h9.75v8.1h-9.75zM372.25 459.4h6.50v8.1h-6.50zM385.25 459.4h3.25v8.1h-3.25zM391.75 459.4h16.25v8.1h-16.25zM424.25 459.4h3.25v8.1h-3.25zM430.75 459.4h6.50v8.1h-6.50zM443.75 459.4h19.50v8.1h-19.50zM469.75 459.4h13.00v8.1h-13.00zM486.00 459.4h9.75v8.1h-9.75zM505.50 459.4h6.50v8.1h-6.50zM518.50 459.4h3.25v8.1h-3.25zM525.00 459.4h13.00v8.1h-13.00zM557.50 459.4h9.75v8.1h-9.75zM577.00 459.4h3.25v8.1h-3.25zM590.00 459.4h9.75v8.1h-9.75zM603.00 459.4h3.25v8.1h-3.25zM609.50 459.4h3.25v8.1h-3.25zM616.00 459.4h3.25v8.1h-3.25zM622.50 459.4h3.25v8.1h-3.25zM629.00 459.4h6.50v8.1h-6.50zM645.25 459.4h3.25v8.1h-3.25zM655.00 459.4h9.75v8.1h-9.75zM668.00 459.4h9.75v8.1h-9.75zM681.00 459.4h3.25v8.1h-3.25zM690.75 459.4h3.25v8.1h-3.25zM700.50 459.4h6.50v8.1h-6.50zM713.50 459.4h6.50v8.1h-6.50zM726.50 459.4h13.00v8.1h-13.00zM749.25 459.4h3.25v8.1h-3.25zM755.75 459.4h3.25v8.1h-3.25zM765.50 459.4h6.50v8.1h-6.50zM778.50 459.4h6.50v8.1h-6.50zM791.50 459.4h3.25v8.1h-3.25zM801.25 459.4h3.25v8.1h-3.25zM807.75 459.4h16.25v8.1h-16.25zM827.25 459.4h3.25v8.1h-3.25zM833.75 459.4h3.25v8.1h-3.25zM840.25 459.4h3.25v8.1h-3.25zM846.75 459.4h13.00v8.1h-13.00zM879.25 459.4h3.25v8.1h-3.25zM885.75 459.4h3.25v8.1h-3.25zM892.25 459.4h9.75v8.1h-9.75zM915.00 459.4h3.25v8.1h-3.25zM924.75 459.4h6.50v8.1h-6.50zM944.25 459.4h3.25v8.1h-3.25zM960.50 459.4h3.25v8.1h-3.25zM967.00 459.4h9.75v8.1h-9.75zM983.25 459.4h6.50v8.1h-6.50zM996.25 459.4h3.25v8.1h-3.25zM1002.75 459.4h3.25v8.1h-3.25zM1009.25 459.4h3.25v8.1h-3.25zM1019.00 459.4h3.25v8.1h-3.25zM1025.50 459.4h6.50v8.1h-6.50zM1035.25 459.4h3.25v8.1h-3.25zM1041.75 459.4h9.75v8.1h-9.75zM1054.75 459.4h13.00v8.1h-13.00zM1071.00 459.4h3.25v8.1h-3.25zM1077.50 459.4h3.25v8.1h-3.25zM1084.00 459.4h3.25v8.1h-3.25zM1090.50 459.4h6.50v8.1h-6.50zM1100.25 459.4h3.25v8.1h-3.25zM1106.75 459.4h3.25v8.1h-3.25zM1113.25 459.4h6.50v8.1h-6.50zM1123.00 459.4h6.50v8.1h-6.50zM1136.00 459.4h16.25v8.1h-16.25zM1158.75 459.4h16.25v8.1h-16.25zM1178.25 459.4h3.25v8.1h-3.25zM1191.25 459.4h3.25v8.1h-3.25zM1207.50 459.4h9.75v8.1h-9.75zM1227.00 459.4h6.50v8.1h-6.50zM1236.75 459.4h13.00v8.1h-13.00zM1253.00 459.4h6.50v8.1h-6.50zM1262.75 459.4h3.25v8.1h-3.25zM1275.75 459.4h13.00v8.1h-13.00zM1301.75 459.4h3.25v8.1h-3.25zM1324.50 459.4h3.25v8.1h-3.25zM1353.75 459.4h16.25v8.1h-16.25zM1376.50 459.4h19.50v8.1h-19.50zM1399.25 459.4h3.25v8.1h-3.25zM1405.75 459.4h13.00v8.1h-13.00zM1422.00 459.4h3.25v8.1h-3.25zM1438.25 459.4h3.25v8.1h-3.25zM1454.50 459.4h13.00v8.1h-13.00zM1470.75 459.4h3.25v8.1h-3.25zM1477.25 459.4h9.75v8.1h-9.75zM1490.25 459.4h3.25v8.1h-3.25zM1496.75 459.4h19.50v8.1h-19.50zM1519.50 459.4h13.00v8.1h-13.00zM1535.75 459.4h6.50v8.1h-6.50zM1545.50 459.4h3.25v8.1h-3.25zM1555.25 459.4h13.00v8.1h-13.00zM1574.75 459.4h6.50v8.1h-6.50zM1584.50 459.4h3.25v8.1h-3.25zM1591.00 459.4h9.75v8.1h-9.75zM1607.25 459.4h3.25v8.1h-3.25zM1613.75 459.4h3.25v8.1h-3.25zM1620.25 459.4h6.50v8.1h-6.50zM1630.00 459.4h6.50v8.1h-6.50zM1639.75 459.4h9.75v8.1h-9.75zM1652.75 459.4h9.75v8.1h-9.75zM1665.75 459.4h3.25v8.1h-3.25zM1672.25 459.4h3.25v8.1h-3.25zM122.00 451.3h6.50v8.1h-6.50zM144.75 451.3h3.25v8.1h-3.25zM154.50 451.3h9.75v8.1h-9.75zM170.75 451.3h48.75v8.1h-48.75zM222.75 451.3h6.50v8.1h-6.50zM235.75 451.3h9.75v8.1h-9.75zM248.75 451.3h19.50v8.1h-19.50zM274.75 451.3h3.25v8.1h-3.25zM281.25 451.3h6.50v8.1h-6.50zM291.00 451.3h9.75v8.1h-9.75zM304.00 451.3h39.00v8.1h-39.00zM349.50 451.3h32.50v8.1h-32.50zM385.25 451.3h6.50v8.1h-6.50zM398.25 451.3h3.25v8.1h-3.25zM404.75 451.3h6.50v8.1h-6.50zM414.50 451.3h3.25v8.1h-3.25zM427.50 451.3h16.25v8.1h-16.25zM447.00 451.3h6.50v8.1h-6.50zM456.75 451.3h29.25v8.1h-29.25zM489.25 451.3h13.00v8.1h-13.00zM505.50 451.3h6.50v8.1h-6.50zM515.25 451.3h9.75v8.1h-9.75zM531.50 451.3h3.25v8.1h-3.25zM538.00 451.3h35.75v8.1h-35.75zM580.25 451.3h3.25v8.1h-3.25zM586.75 451.3h3.25v8.1h-3.25zM593.25 451.3h6.50v8.1h-6.50zM603.00 451.3h3.25v8.1h-3.25zM609.50 451.3h6.50v8.1h-6.50zM625.75 451.3h6.50v8.1h-6.50zM635.50 451.3h13.00v8.1h-13.00zM651.75 451.3h32.50v8.1h-32.50zM690.75 451.3h13.00v8.1h-13.00zM707.00 451.3h6.50v8.1h-6.50zM720.00 451.3h9.75v8.1h-9.75zM733.00 451.3h29.25v8.1h-29.25zM765.50 451.3h16.25v8.1h-16.25zM785.00 451.3h3.25v8.1h-3.25zM794.75 451.3h16.25v8.1h-16.25zM817.50 451.3h26.00v8.1h-26.00zM846.75 451.3h3.25v8.1h-3.25zM853.25 451.3h3.25v8.1h-3.25zM859.75 451.3h6.50v8.1h-6.50zM869.50 451.3h3.25v8.1h-3.25zM876.00 451.3h9.75v8.1h-9.75zM889.00 451.3h3.25v8.1h-3.25zM895.50 451.3h3.25v8.1h-3.25zM905.25 451.3h6.50v8.1h-6.50zM918.25 451.3h13.00v8.1h-13.00zM934.50 451.3h3.25v8.1h-3.25zM941.00 451.3h6.50v8.1h-6.50zM950.75 451.3h13.00v8.1h-13.00zM967.00 451.3h6.50v8.1h-6.50zM976.75 451.3h3.25v8.1h-3.25zM983.25 451.3h9.75v8.1h-9.75zM996.25 451.3h3.25v8.1h-3.25zM1009.25 451.3h3.25v8.1h-3.25zM1019.00 451.3h6.50v8.1h-6.50zM1028.75 451.3h3.25v8.1h-3.25zM1035.25 451.3h16.25v8.1h-16.25zM1064.50 451.3h26.00v8.1h-26.00zM1100.25 451.3h3.25v8.1h-3.25zM1106.75 451.3h13.00v8.1h-13.00zM1123.00 451.3h3.25v8.1h-3.25zM1129.50 451.3h3.25v8.1h-3.25zM1136.00 451.3h3.25v8.1h-3.25zM1142.50 451.3h6.50v8.1h-6.50zM1155.50 451.3h9.75v8.1h-9.75zM1175.00 451.3h6.50v8.1h-6.50zM1188.00 451.3h3.25v8.1h-3.25zM1194.50 451.3h6.50v8.1h-6.50zM1204.25 451.3h6.50v8.1h-6.50zM1214.00 451.3h22.75v8.1h-22.75zM1240.00 451.3h3.25v8.1h-3.25zM1246.50 451.3h3.25v8.1h-3.25zM1256.25 451.3h16.25v8.1h-16.25zM1275.75 451.3h9.75v8.1h-9.75zM1288.75 451.3h6.50v8.1h-6.50zM1298.50 451.3h3.25v8.1h-3.25zM1308.25 451.3h6.50v8.1h-6.50zM1321.25 451.3h6.50v8.1h-6.50zM1334.25 451.3h6.50v8.1h-6.50zM1344.00 451.3h3.25v8.1h-3.25zM1357.00 451.3h6.50v8.1h-6.50zM1370.00 451.3h3.25v8.1h-3.25zM1376.50 451.3h9.75v8.1h-9.75zM1389.50 451.3h9.75v8.1h-9.75zM1402.50 451.3h3.25v8.1h-3.25zM1412.25 451.3h6.50v8.1h-6.50zM1425.25 451.3h9.75v8.1h-9.75zM1438.25 451.3h9.75v8.1h-9.75zM1451.25 451.3h6.50v8.1h-6.50zM1461.00 451.3h9.75v8.1h-9.75zM1477.25 451.3h3.25v8.1h-3.25zM1483.75 451.3h9.75v8.1h-9.75zM1500.00 451.3h3.25v8.1h-3.25zM1506.50 451.3h19.50v8.1h-19.50zM1529.25 451.3h3.25v8.1h-3.25zM1535.75 451.3h3.25v8.1h-3.25zM1542.25 451.3h13.00v8.1h-13.00zM1558.50 451.3h3.25v8.1h-3.25zM1565.00 451.3h9.75v8.1h-9.75zM1578.00 451.3h3.25v8.1h-3.25zM1584.50 451.3h3.25v8.1h-3.25zM1591.00 451.3h29.25v8.1h-29.25zM1630.00 451.3h6.50v8.1h-6.50zM1639.75 451.3h13.00v8.1h-13.00zM1656.00 451.3h3.25v8.1h-3.25zM1665.75 451.3h13.00v8.1h-13.00zM122.00 443.2h3.25v8.1h-3.25zM128.50 443.2h3.25v8.1h-3.25zM138.25 443.2h3.25v8.1h-3.25zM144.75 443.2h3.25v8.1h-3.25zM151.25 443.2h9.75v8.1h-9.75zM164.25 443.2h61.75v8.1h-61.75zM229.25 443.2h6.50v8.1h-6.50zM239.00 443.2h13.00v8.1h-13.00zM255.25 443.2h6.50v8.1h-6.50zM268.25 443.2h3.25v8.1h-3.25zM274.75 443.2h3.25v8.1h-3.25zM281.25 443.2h6.50v8.1h-6.50zM291.00 443.2h6.50v8.1h-6.50zM304.00 443.2h9.75v8.1h-9.75zM317.00 443.2h19.50v8.1h-19.50zM339.75 443.2h6.50v8.1h-6.50zM349.50 443.2h3.25v8.1h-3.25zM356.00 443.2h19.50v8.1h-19.50zM385.25 443.2h6.50v8.1h-6.50zM395.00 443.2h3.25v8.1h-3.25zM401.50 443.2h6.50v8.1h-6.50zM411.25 443.2h16.25v8.1h-16.25zM430.75 443.2h13.00v8.1h-13.00zM447.00 443.2h6.50v8.1h-6.50zM456.75 443.2h3.25v8.1h-3.25zM473.00 443.2h26.00v8.1h-26.00zM508.75 443.2h13.00v8.1h-13.00zM525.00 443.2h3.25v8.1h-3.25zM531.50 443.2h6.50v8.1h-6.50zM541.25 443.2h32.50v8.1h-32.50zM577.00 443.2h3.25v8.1h-3.25zM583.50 443.2h6.50v8.1h-6.50zM596.50 443.2h3.25v8.1h-3.25zM603.00 443.2h16.25v8.1h-16.25zM622.50 443.2h52.00v8.1h-52.00zM677.75 443.2h55.25v8.1h-55.25zM736.25 443.2h9.75v8.1h-9.75zM749.25 443.2h55.25v8.1h-55.25zM807.75 443.2h3.25v8.1h-3.25zM814.25 443.2h9.75v8.1h-9.75zM827.25 443.2h13.00v8.1h-13.00zM843.50 443.2h3.25v8.1h-3.25zM859.75 443.2h29.25v8.1h-29.25zM895.50 443.2h29.25v8.1h-29.25zM928.00 443.2h6.50v8.1h-6.50zM937.75 443.2h3.25v8.1h-3.25zM947.50 443.2h9.75v8.1h-9.75zM963.75 443.2h3.25v8.1h-3.25zM970.25 443.2h22.75v8.1h-22.75zM996.25 443.2h22.75v8.1h-22.75zM1022.25 443.2h39.00v8.1h-39.00zM1064.50 443.2h19.50v8.1h-19.50zM1087.25 443.2h3.25v8.1h-3.25zM1093.75 443.2h6.50v8.1h-6.50zM1103.50 443.2h3.25v8.1h-3.25zM1110.00 443.2h3.25v8.1h-3.25zM1116.50 443.2h9.75v8.1h-9.75zM1129.50 443.2h19.50v8.1h-19.50zM1152.25 443.2h39.00v8.1h-39.00zM1194.50 443.2h3.25v8.1h-3.25zM1204.25 443.2h9.75v8.1h-9.75zM1220.50 443.2h6.50v8.1h-6.50zM1230.25 443.2h6.50v8.1h-6.50zM1240.00 443.2h9.75v8.1h-9.75zM1253.00 443.2h6.50v8.1h-6.50zM1262.75 443.2h3.25v8.1h-3.25zM1269.25 443.2h3.25v8.1h-3.25zM1275.75 443.2h3.25v8.1h-3.25zM1282.25 443.2h13.00v8.1h-13.00zM1298.50 443.2h3.25v8.1h-3.25zM1305.00 443.2h6.50v8.1h-6.50zM1318.00 443.2h9.75v8.1h-9.75zM1334.25 443.2h6.50v8.1h-6.50zM1347.25 443.2h9.75v8.1h-9.75zM1366.75 443.2h6.50v8.1h-6.50zM1379.75 443.2h9.75v8.1h-9.75zM1392.75 443.2h9.75v8.1h-9.75zM1405.75 443.2h3.25v8.1h-3.25zM1412.25 443.2h22.75v8.1h-22.75zM1438.25 443.2h3.25v8.1h-3.25zM1448.00 443.2h3.25v8.1h-3.25zM1474.00 443.2h6.50v8.1h-6.50zM1483.75 443.2h52.00v8.1h-52.00zM1539.00 443.2h3.25v8.1h-3.25zM1548.75 443.2h3.25v8.1h-3.25zM1555.25 443.2h3.25v8.1h-3.25zM1568.25 443.2h3.25v8.1h-3.25zM1578.00 443.2h6.50v8.1h-6.50zM1591.00 443.2h3.25v8.1h-3.25zM1597.50 443.2h3.25v8.1h-3.25zM1604.00 443.2h26.00v8.1h-26.00zM1633.25 443.2h6.50v8.1h-6.50zM1643.00 443.2h16.25v8.1h-16.25zM1662.50 443.2h6.50v8.1h-6.50zM1672.25 443.2h3.25v8.1h-3.25zM1678.75 443.2h3.25v8.1h-3.25zM122.00 435.1h32.50v8.1h-32.50zM157.75 435.1h9.75v8.1h-9.75zM170.75 435.1h3.25v8.1h-3.25zM183.75 435.1h35.75v8.1h-35.75zM222.75 435.1h26.00v8.1h-26.00zM258.50 435.1h3.25v8.1h-3.25zM265.00 435.1h13.00v8.1h-13.00zM281.25 435.1h3.25v8.1h-3.25zM291.00 435.1h6.50v8.1h-6.50zM304.00 435.1h35.75v8.1h-35.75zM343.00 435.1h3.25v8.1h-3.25zM352.75 435.1h3.25v8.1h-3.25zM359.25 435.1h16.25v8.1h-16.25zM378.75 435.1h9.75v8.1h-9.75zM395.00 435.1h6.50v8.1h-6.50zM404.75 435.1h3.25v8.1h-3.25zM411.25 435.1h3.25v8.1h-3.25zM417.75 435.1h13.00v8.1h-13.00zM437.25 435.1h6.50v8.1h-6.50zM447.00 435.1h6.50v8.1h-6.50zM460.00 435.1h6.50v8.1h-6.50zM469.75 435.1h3.25v8.1h-3.25zM479.50 435.1h29.25v8.1h-29.25zM512.00 435.1h9.75v8.1h-9.75zM525.00 435.1h29.25v8.1h-29.25zM557.50 435.1h6.50v8.1h-6.50zM567.25 435.1h3.25v8.1h-3.25zM573.75 435.1h6.50v8.1h-6.50zM593.25 435.1h3.25v8.1h-3.25zM599.75 435.1h26.00v8.1h-26.00zM629.00 435.1h6.50v8.1h-6.50zM638.75 435.1h22.75v8.1h-22.75zM664.75 435.1h52.00v8.1h-52.00zM720.00 435.1h16.25v8.1h-16.25zM739.50 435.1h3.25v8.1h-3.25zM746.00 435.1h3.25v8.1h-3.25zM752.50 435.1h9.75v8.1h-9.75zM765.50 435.1h32.50v8.1h-32.50zM801.25 435.1h3.25v8.1h-3.25zM811.00 435.1h9.75v8.1h-9.75zM824.00 435.1h3.25v8.1h-3.25zM843.50 435.1h3.25v8.1h-3.25zM850.00 435.1h3.25v8.1h-3.25zM856.50 435.1h3.25v8.1h-3.25zM866.25 435.1h3.25v8.1h-3.25zM879.25 435.1h6.50v8.1h-6.50zM889.00 435.1h13.00v8.1h-13.00zM905.25 435.1h9.75v8.1h-9.75zM921.50 435.1h42.25v8.1h-42.25zM967.00 435.1h39.00v8.1h-39.00zM1012.50 435.1h26.00v8.1h-26.00zM1041.75 435.1h19.50v8.1h-19.50zM1067.75 435.1h19.50v8.1h-19.50zM1090.50 435.1h6.50v8.1h-6.50zM1100.25 435.1h9.75v8.1h-9.75zM1113.25 435.1h3.25v8.1h-3.25zM1123.00 435.1h13.00v8.1h-13.00zM1139.25 435.1h13.00v8.1h-13.00zM1155.50 435.1h3.25v8.1h-3.25zM1162.00 435.1h19.50v8.1h-19.50zM1184.75 435.1h26.00v8.1h-26.00zM1214.00 435.1h13.00v8.1h-13.00zM1230.25 435.1h9.75v8.1h-9.75zM1243.25 435.1h3.25v8.1h-3.25zM1253.00 435.1h13.00v8.1h-13.00zM1275.75 435.1h3.25v8.1h-3.25zM1282.25 435.1h6.50v8.1h-6.50zM1292.00 435.1h6.50v8.1h-6.50zM1301.75 435.1h13.00v8.1h-13.00zM1331.00 435.1h6.50v8.1h-6.50zM1340.75 435.1h9.75v8.1h-9.75zM1360.25 435.1h13.00v8.1h-13.00zM1376.50 435.1h19.50v8.1h-19.50zM1399.25 435.1h9.75v8.1h-9.75zM1415.50 435.1h6.50v8.1h-6.50zM1425.25 435.1h19.50v8.1h-19.50zM1448.00 435.1h3.25v8.1h-3.25zM1454.50 435.1h6.50v8.1h-6.50zM1464.25 435.1h13.00v8.1h-13.00zM1480.50 435.1h9.75v8.1h-9.75zM1493.50 435.1h9.75v8.1h-9.75zM1513.00 435.1h9.75v8.1h-9.75zM1529.25 435.1h19.50v8.1h-19.50zM1552.00 435.1h3.25v8.1h-3.25zM1558.50 435.1h9.75v8.1h-9.75zM1574.75 435.1h3.25v8.1h-3.25zM1584.50 435.1h3.25v8.1h-3.25zM1591.00 435.1h3.25v8.1h-3.25zM1597.50 435.1h6.50v8.1h-6.50zM1607.25 435.1h3.25v8.1h-3.25zM1613.75 435.1h9.75v8.1h-9.75zM1626.75 435.1h13.00v8.1h-13.00zM1656.00 435.1h16.25v8.1h-16.25zM125.25 427.0h9.75v8.1h-9.75zM138.25 427.0h3.25v8.1h-3.25zM148.00 427.0h9.75v8.1h-9.75zM190.25 427.0h3.25v8.1h-3.25zM209.75 427.0h3.25v8.1h-3.25zM216.25 427.0h6.50v8.1h-6.50zM226.00 427.0h3.25v8.1h-3.25zM232.50 427.0h3.25v8.1h-3.25zM239.00 427.0h3.25v8.1h-3.25zM245.50 427.0h9.75v8.1h-9.75zM258.50 427.0h3.25v8.1h-3.25zM268.25 427.0h6.50v8.1h-6.50zM281.25 427.0h6.50v8.1h-6.50zM294.25 427.0h3.25v8.1h-3.25zM307.25 427.0h19.50v8.1h-19.50zM333.25 427.0h3.25v8.1h-3.25zM343.00 427.0h3.25v8.1h-3.25zM359.25 427.0h3.25v8.1h-3.25zM369.00 427.0h3.25v8.1h-3.25zM382.00 427.0h6.50v8.1h-6.50zM395.00 427.0h3.25v8.1h-3.25zM411.25 427.0h3.25v8.1h-3.25zM417.75 427.0h16.25v8.1h-16.25zM437.25 427.0h6.50v8.1h-6.50zM447.00 427.0h6.50v8.1h-6.50zM456.75 427.0h6.50v8.1h-6.50zM476.25 427.0h6.50v8.1h-6.50zM489.25 427.0h3.25v8.1h-3.25zM495.75 427.0h6.50v8.1h-6.50zM505.50 427.0h3.25v8.1h-3.25zM518.50 427.0h6.50v8.1h-6.50zM534.75 427.0h3.25v8.1h-3.25zM547.75 427.0h3.25v8.1h-3.25zM557.50 427.0h3.25v8.1h-3.25zM564.00 427.0h6.50v8.1h-6.50zM573.75 427.0h3.25v8.1h-3.25zM593.25 427.0h3.25v8.1h-3.25zM599.75 427.0h3.25v8.1h-3.25zM606.25 427.0h6.50v8.1h-6.50zM625.75 427.0h6.50v8.1h-6.50zM638.75 427.0h3.25v8.1h-3.25zM648.50 427.0h3.25v8.1h-3.25zM664.75 427.0h16.25v8.1h-16.25zM694.00 427.0h9.75v8.1h-9.75zM713.50 427.0h9.75v8.1h-9.75zM729.75 427.0h13.00v8.1h-13.00zM746.00 427.0h3.25v8.1h-3.25zM752.50 427.0h9.75v8.1h-9.75zM768.75 427.0h13.00v8.1h-13.00zM798.00 427.0h13.00v8.1h-13.00zM814.25 427.0h9.75v8.1h-9.75zM837.00 427.0h3.25v8.1h-3.25zM846.75 427.0h3.25v8.1h-3.25zM866.25 427.0h9.75v8.1h-9.75zM882.50 427.0h3.25v8.1h-3.25zM895.50 427.0h3.25v8.1h-3.25zM905.25 427.0h6.50v8.1h-6.50zM918.25 427.0h6.50v8.1h-6.50zM931.25 427.0h3.25v8.1h-3.25zM937.75 427.0h6.50v8.1h-6.50zM950.75 427.0h13.00v8.1h-13.00zM967.00 427.0h3.25v8.1h-3.25zM986.50 427.0h6.50v8.1h-6.50zM996.25 427.0h3.25v8.1h-3.25zM1012.50 427.0h9.75v8.1h-9.75zM1025.50 427.0h3.25v8.1h-3.25zM1035.25 427.0h16.25v8.1h-16.25zM1054.75 427.0h6.50v8.1h-6.50zM1064.50 427.0h3.25v8.1h-3.25zM1074.25 427.0h3.25v8.1h-3.25zM1080.75 427.0h3.25v8.1h-3.25zM1093.75 427.0h3.25v8.1h-3.25zM1103.50 427.0h3.25v8.1h-3.25zM1113.25 427.0h3.25v8.1h-3.25zM1119.75 427.0h6.50v8.1h-6.50zM1129.50 427.0h6.50v8.1h-6.50zM1142.50 427.0h3.25v8.1h-3.25zM1155.50 427.0h3.25v8.1h-3.25zM1162.00 427.0h3.25v8.1h-3.25zM1168.50 427.0h3.25v8.1h-3.25zM1175.00 427.0h16.25v8.1h-16.25zM1194.50 427.0h22.75v8.1h-22.75zM1220.50 427.0h6.50v8.1h-6.50zM1230.25 427.0h6.50v8.1h-6.50zM1240.00 427.0h6.50v8.1h-6.50zM1256.25 427.0h13.00v8.1h-13.00zM1275.75 427.0h3.25v8.1h-3.25zM1285.50 427.0h3.25v8.1h-3.25zM1292.00 427.0h3.25v8.1h-3.25zM1301.75 427.0h3.25v8.1h-3.25zM1308.25 427.0h3.25v8.1h-3.25zM1324.50 427.0h13.00v8.1h-13.00zM1344.00 427.0h3.25v8.1h-3.25zM1357.00 427.0h6.50v8.1h-6.50zM1366.75 427.0h9.75v8.1h-9.75zM1383.00 427.0h9.75v8.1h-9.75zM1396.00 427.0h6.50v8.1h-6.50zM1418.75 427.0h3.25v8.1h-3.25zM1431.75 427.0h9.75v8.1h-9.75zM1467.50 427.0h16.25v8.1h-16.25zM1487.00 427.0h16.25v8.1h-16.25zM1506.50 427.0h3.25v8.1h-3.25zM1513.00 427.0h6.50v8.1h-6.50zM1526.00 427.0h13.00v8.1h-13.00zM1545.50 427.0h26.00v8.1h-26.00zM1574.75 427.0h6.50v8.1h-6.50zM1584.50 427.0h3.25v8.1h-3.25zM1591.00 427.0h13.00v8.1h-13.00zM1607.25 427.0h3.25v8.1h-3.25zM1613.75 427.0h9.75v8.1h-9.75zM1626.75 427.0h3.25v8.1h-3.25zM1636.50 427.0h3.25v8.1h-3.25zM1643.00 427.0h9.75v8.1h-9.75zM1656.00 427.0h22.75v8.1h-22.75zM154.50 418.9h3.25v8.1h-3.25zM216.25 418.9h3.25v8.1h-3.25zM239.00 418.9h3.25v8.1h-3.25zM245.50 418.9h3.25v8.1h-3.25zM278.00 418.9h6.50v8.1h-6.50zM291.00 418.9h3.25v8.1h-3.25zM317.00 418.9h3.25v8.1h-3.25zM339.75 418.9h3.25v8.1h-3.25zM362.50 418.9h3.25v8.1h-3.25zM369.00 418.9h3.25v8.1h-3.25zM554.25 418.9h6.50v8.1h-6.50zM674.50 418.9h3.25v8.1h-3.25zM723.25 418.9h6.50v8.1h-6.50zM765.50 418.9h3.25v8.1h-3.25zM778.50 418.9h3.25v8.1h-3.25zM794.75 418.9h3.25v8.1h-3.25zM814.25 418.9h3.25v8.1h-3.25zM830.50 418.9h3.25v8.1h-3.25zM924.75 418.9h3.25v8.1h-3.25zM954.00 418.9h6.50v8.1h-6.50zM967.00 418.9h3.25v8.1h-3.25zM1015.75 418.9h3.25v8.1h-3.25zM1022.25 418.9h3.25v8.1h-3.25zM1035.25 418.9h3.25v8.1h-3.25zM1058.00 418.9h3.25v8.1h-3.25zM1077.50 418.9h6.50v8.1h-6.50zM1087.25 418.9h3.25v8.1h-3.25zM1100.25 418.9h3.25v8.1h-3.25zM1119.75 418.9h3.25v8.1h-3.25zM1126.25 418.9h9.75v8.1h-9.75zM1139.25 418.9h3.25v8.1h-3.25zM1149.00 418.9h3.25v8.1h-3.25zM1158.75 418.9h3.25v8.1h-3.25zM1168.50 418.9h6.50v8.1h-6.50zM1201.00 418.9h3.25v8.1h-3.25zM1214.00 418.9h13.00v8.1h-13.00zM1249.75 418.9h3.25v8.1h-3.25zM1256.25 418.9h3.25v8.1h-3.25zM1262.75 418.9h6.50v8.1h-6.50zM1272.50 418.9h6.50v8.1h-6.50zM1298.50 418.9h3.25v8.1h-3.25zM1308.25 418.9h3.25v8.1h-3.25zM1314.75 418.9h3.25v8.1h-3.25zM1327.75 418.9h3.25v8.1h-3.25zM1334.25 418.9h6.50v8.1h-6.50zM1350.50 418.9h3.25v8.1h-3.25zM1357.00 418.9h3.25v8.1h-3.25zM1363.50 418.9h6.50v8.1h-6.50zM1376.50 418.9h3.25v8.1h-3.25zM1386.25 418.9h6.50v8.1h-6.50zM1418.75 418.9h3.25v8.1h-3.25zM1428.50 418.9h3.25v8.1h-3.25zM1461.00 418.9h3.25v8.1h-3.25zM1467.50 418.9h9.75v8.1h-9.75zM1483.75 418.9h13.00v8.1h-13.00zM1503.25 418.9h13.00v8.1h-13.00zM1522.75 418.9h3.25v8.1h-3.25zM1529.25 418.9h3.25v8.1h-3.25zM1535.75 418.9h6.50v8.1h-6.50zM1545.50 418.9h16.25v8.1h-16.25zM1571.50 418.9h9.75v8.1h-9.75zM1584.50 418.9h3.25v8.1h-3.25zM1591.00 418.9h6.50v8.1h-6.50zM1600.75 418.9h6.50v8.1h-6.50zM1613.75 418.9h9.75v8.1h-9.75zM1636.50 418.9h3.25v8.1h-3.25zM1643.00 418.9h6.50v8.1h-6.50zM1652.75 418.9h9.75v8.1h-9.75zM1665.75 418.9h3.25v8.1h-3.25zM1675.50 418.9h3.25v8.1h-3.25zM125.25 410.8h6.50v8.1h-6.50zM245.50 410.8h3.25v8.1h-3.25zM258.50 410.8h3.25v8.1h-3.25zM453.50 410.8h3.25v8.1h-3.25zM528.25 410.8h3.25v8.1h-3.25zM655.00 410.8h3.25v8.1h-3.25zM720.00 410.8h3.25v8.1h-3.25zM755.75 410.8h3.25v8.1h-3.25zM918.25 410.8h3.25v8.1h-3.25zM1006.00 410.8h3.25v8.1h-3.25zM1015.75 410.8h3.25v8.1h-3.25zM1032.00 410.8h3.25v8.1h-3.25zM1041.75 410.8h3.25v8.1h-3.25zM1080.75 410.8h3.25v8.1h-3.25zM1100.25 410.8h3.25v8.1h-3.25zM1149.00 410.8h3.25v8.1h-3.25zM1188.00 410.8h3.25v8.1h-3.25zM1214.00 410.8h3.25v8.1h-3.25zM1243.25 410.8h6.50v8.1h-6.50zM1266.00 410.8h3.25v8.1h-3.25zM1275.75 410.8h3.25v8.1h-3.25zM1301.75 410.8h3.25v8.1h-3.25zM1311.50 410.8h3.25v8.1h-3.25zM1321.25 410.8h3.25v8.1h-3.25zM1334.25 410.8h3.25v8.1h-3.25zM1340.75 410.8h6.50v8.1h-6.50zM1376.50 410.8h6.50v8.1h-6.50zM1386.25 410.8h3.25v8.1h-3.25zM1412.25 410.8h3.25v8.1h-3.25zM1422.00 410.8h3.25v8.1h-3.25zM1428.50 410.8h3.25v8.1h-3.25zM1441.50 410.8h3.25v8.1h-3.25zM1448.00 410.8h3.25v8.1h-3.25zM1454.50 410.8h3.25v8.1h-3.25zM1461.00 410.8h3.25v8.1h-3.25zM1474.00 410.8h6.50v8.1h-6.50zM1487.00 410.8h6.50v8.1h-6.50zM1500.00 410.8h3.25v8.1h-3.25zM1506.50 410.8h3.25v8.1h-3.25zM1516.25 410.8h6.50v8.1h-6.50zM1526.00 410.8h9.75v8.1h-9.75zM1545.50 410.8h6.50v8.1h-6.50zM1558.50 410.8h3.25v8.1h-3.25zM1571.50 410.8h9.75v8.1h-9.75zM1584.50 410.8h3.25v8.1h-3.25zM1607.25 410.8h6.50v8.1h-6.50zM1620.25 410.8h9.75v8.1h-9.75zM1633.25 410.8h3.25v8.1h-3.25zM1639.75 410.8h3.25v8.1h-3.25zM1646.25 410.8h3.25v8.1h-3.25zM1656.00 410.8h3.25v8.1h-3.25zM1662.50 410.8h3.25v8.1h-3.25zM1672.25 410.8h9.75v8.1h-9.75zM135.00 402.7h3.25v8.1h-3.25zM564.00 402.7h3.25v8.1h-3.25zM944.25 402.7h3.25v8.1h-3.25zM1064.50 402.7h3.25v8.1h-3.25zM1103.50 402.7h3.25v8.1h-3.25zM1168.50 402.7h3.25v8.1h-3.25zM1210.75 402.7h6.50v8.1h-6.50zM1227.00 402.7h3.25v8.1h-3.25zM1240.00 402.7h3.25v8.1h-3.25zM1262.75 402.7h6.50v8.1h-6.50zM1279.00 402.7h3.25v8.1h-3.25zM1314.75 402.7h3.25v8.1h-3.25zM1344.00 402.7h3.25v8.1h-3.25zM1353.75 402.7h6.50v8.1h-6.50zM1363.50 402.7h3.25v8.1h-3.25zM1370.00 402.7h3.25v8.1h-3.25zM1376.50 402.7h3.25v8.1h-3.25zM1415.50 402.7h6.50v8.1h-6.50zM1428.50 402.7h3.25v8.1h-3.25zM1444.75 402.7h3.25v8.1h-3.25zM1454.50 402.7h3.25v8.1h-3.25zM1461.00 402.7h3.25v8.1h-3.25zM1500.00 402.7h9.75v8.1h-9.75zM1522.75 402.7h13.00v8.1h-13.00zM1545.50 402.7h3.25v8.1h-3.25zM1558.50 402.7h9.75v8.1h-9.75zM1571.50 402.7h6.50v8.1h-6.50zM1581.25 402.7h3.25v8.1h-3.25zM1604.00 402.7h3.25v8.1h-3.25zM1610.50 402.7h6.50v8.1h-6.50zM1620.25 402.7h9.75v8.1h-9.75zM1636.50 402.7h3.25v8.1h-3.25zM1646.25 402.7h3.25v8.1h-3.25zM1652.75 402.7h9.75v8.1h-9.75zM1675.50 402.7h3.25v8.1h-3.25zM505.50 394.6h3.25v8.1h-3.25zM843.50 394.6h3.25v8.1h-3.25zM1223.75 394.6h3.25v8.1h-3.25zM1331.00 394.6h3.25v8.1h-3.25zM1363.50 394.6h3.25v8.1h-3.25zM1399.25 394.6h3.25v8.1h-3.25zM1418.75 394.6h3.25v8.1h-3.25zM1441.50 394.6h3.25v8.1h-3.25zM1448.00 394.6h3.25v8.1h-3.25zM1457.75 394.6h9.75v8.1h-9.75zM1506.50 394.6h3.25v8.1h-3.25zM1529.25 394.6h6.50v8.1h-6.50zM1542.25 394.6h6.50v8.1h-6.50zM1561.75 394.6h3.25v8.1h-3.25zM1571.50 394.6h6.50v8.1h-6.50zM1587.75 394.6h3.25v8.1h-3.25zM1604.00 394.6h3.25v8.1h-3.25zM1613.75 394.6h9.75v8.1h-9.75zM1636.50 394.6h3.25v8.1h-3.25zM1646.25 394.6h3.25v8.1h-3.25zM1652.75 394.6h6.50v8.1h-6.50zM1669.00 394.6h3.25v8.1h-3.25zM1675.50 394.6h3.25v8.1h-3.25zM1253.00 386.5h3.25v8.1h-3.25zM1337.50 386.5h3.25v8.1h-3.25zM1396.00 386.5h3.25v8.1h-3.25zM1457.75 386.5h6.50v8.1h-6.50zM1474.00 386.5h9.75v8.1h-9.75zM1503.25 386.5h6.50v8.1h-6.50zM1529.25 386.5h3.25v8.1h-3.25zM1535.75 386.5h3.25v8.1h-3.25zM1542.25 386.5h3.25v8.1h-3.25zM1565.00 386.5h3.25v8.1h-3.25zM1574.75 386.5h3.25v8.1h-3.25zM1594.25 386.5h3.25v8.1h-3.25zM1643.00 386.5h6.50v8.1h-6.50zM1656.00 386.5h3.25v8.1h-3.25zM1669.00 386.5h3.25v8.1h-3.25zM1678.75 386.5h3.25v8.1h-3.25zM586.75 378.4h3.25v8.1h-3.25zM1477.25 378.4h3.25v8.1h-3.25zM1496.75 378.4h3.25v8.1h-3.25zM1542.25 378.4h3.25v8.1h-3.25zM1571.50 378.4h3.25v8.1h-3.25zM1639.75 378.4h3.25v8.1h-3.25zM1646.25 378.4h3.25v8.1h-3.25zM1604.00 370.3h3.25v8.1h-3.25zM1659.25 370.3h3.25v8.1h-3.25zM1656.00 362.2h3.25v8.1h-3.25zM586.75 321.7h3.25v8.1h-3.25zM131.75 289.3h3.25v8.1h-3.25zM131.75 273.1h3.25v8.1h-3.25zM583.50 265.0h3.25v8.1h-3.25z"/></g>
<g fill="#62bdbc"><path id="hm7" d="M167.50 491.8h3.25v8.1h-3.25zM196.75 491.8h3.25v8.1h-3.25zM362.50 491.8h3.25v8.1h-3.25zM430.75 491.8h3.25v8.1h-3.25zM583.50 491.8h3.25v8.1h-3.25zM850.00 491.8h3.25v8.1h-3.25zM989.75 491.8h3.25v8.1h-3.25zM1399.25 491.8h3.25v8.1h-3.25zM1565.00 491.8h3.25v8.1h-3.25zM1610.50 491.8h3.25v8.1h-3.25zM1617.00 491.8h3.25v8.1h-3.25zM138.25 483.7h3.25v8.1h-3.25zM170.75 483.7h3.25v8.1h-3.25zM229.25 483.7h3.25v8.1h-3.25zM313.75 483.7h3.25v8.1h-3.25zM401.50 483.7h3.25v8.1h-3.25zM528.25 483.7h3.25v8.1h-3.25zM612.75 483.7h3.25v8.1h-3.25zM687.50 483.7h3.25v8.1h-3.25zM723.25 483.7h3.25v8.1h-3.25zM781.75 483.7h3.25v8.1h-3.25zM820.75 483.7h3.25v8.1h-3.25zM872.75 483.7h3.25v8.1h-3.25zM892.25 483.7h3.25v8.1h-3.25zM898.75 483.7h3.25v8.1h-3.25zM989.75 483.7h3.25v8.1h-3.25zM1048.25 483.7h3.25v8.1h-3.25zM1090.50 483.7h3.25v8.1h-3.25zM1158.75 483.7h3.25v8.1h-3.25zM1253.00 483.7h3.25v8.1h-3.25zM1275.75 483.7h3.25v8.1h-3.25zM1288.75 483.7h3.25v8.1h-3.25zM1318.00 483.7h3.25v8.1h-3.25zM1532.50 483.7h3.25v8.1h-3.25zM1539.00 483.7h3.25v8.1h-3.25zM1652.75 483.7h3.25v8.1h-3.25zM122.00 467.5h9.75v8.1h-9.75zM141.50 467.5h9.75v8.1h-9.75zM157.75 467.5h3.25v8.1h-3.25zM167.50 467.5h3.25v8.1h-3.25zM226.00 467.5h6.50v8.1h-6.50zM271.50 467.5h3.25v8.1h-3.25zM284.50 467.5h6.50v8.1h-6.50zM294.25 467.5h3.25v8.1h-3.25zM300.75 467.5h3.25v8.1h-3.25zM310.50 467.5h6.50v8.1h-6.50zM320.25 467.5h3.25v8.1h-3.25zM326.75 467.5h13.00v8.1h-13.00zM343.00 467.5h3.25v8.1h-3.25zM349.50 467.5h3.25v8.1h-3.25zM369.00 467.5h3.25v8.1h-3.25zM401.50 467.5h3.25v8.1h-3.25zM417.75 467.5h3.25v8.1h-3.25zM440.50 467.5h3.25v8.1h-3.25zM453.50 467.5h3.25v8.1h-3.25zM469.75 467.5h3.25v8.1h-3.25zM489.25 467.5h3.25v8.1h-3.25zM499.00 467.5h6.50v8.1h-6.50zM567.25 467.5h3.25v8.1h-3.25zM583.50 467.5h3.25v8.1h-3.25zM603.00 467.5h3.25v8.1h-3.25zM622.50 467.5h3.25v8.1h-3.25zM629.00 467.5h3.25v8.1h-3.25zM635.50 467.5h3.25v8.1h-3.25zM645.25 467.5h3.25v8.1h-3.25zM681.00 467.5h3.25v8.1h-3.25zM690.75 467.5h3.25v8.1h-3.25zM700.50 467.5h3.25v8.1h-3.25zM707.00 467.5h3.25v8.1h-3.25zM739.50 467.5h3.25v8.1h-3.25zM759.00 467.5h3.25v8.1h-3.25zM772.00 467.5h3.25v8.1h-3.25zM781.75 467.5h3.25v8.1h-3.25zM791.50 467.5h3.25v8.1h-3.25zM817.50 467.5h3.25v8.1h-3.25zM830.50 467.5h3.25v8.1h-3.25zM856.50 467.5h3.25v8.1h-3.25zM863.00 467.5h6.50v8.1h-6.50zM872.75 467.5h6.50v8.1h-6.50zM892.25 467.5h6.50v8.1h-6.50zM911.75 467.5h3.25v8.1h-3.25zM924.75 467.5h3.25v8.1h-3.25zM931.25 467.5h3.25v8.1h-3.25zM937.75 467.5h3.25v8.1h-3.25zM950.75 467.5h6.50v8.1h-6.50zM963.75 467.5h6.50v8.1h-6.50zM983.25 467.5h3.25v8.1h-3.25zM993.00 467.5h3.25v8.1h-3.25zM1012.50 467.5h3.25v8.1h-3.25zM1038.50 467.5h6.50v8.1h-6.50zM1080.75 467.5h3.25v8.1h-3.25zM1100.25 467.5h3.25v8.1h-3.25zM1132.75 467.5h6.50v8.1h-6.50zM1152.25 467.5h3.25v8.1h-3.25zM1165.25 467.5h3.25v8.1h-3.25zM1194.50 467.5h6.50v8.1h-6.50zM1214.00 467.5h6.50v8.1h-6.50zM1227.00 467.5h3.25v8.1h-3.25zM1253.00 467.5h3.25v8.1h-3.25zM1262.75 467.5h3.25v8.1h-3.25zM1269.25 467.5h3.25v8.1h-3.25zM1275.75 467.5h3.25v8.1h-3.25zM1301.75 467.5h3.25v8.1h-3.25zM1318.00 467.5h6.50v8.1h-6.50zM1337.50 467.5h3.25v8.1h-3.25zM1344.00 467.5h6.50v8.1h-6.50zM1353.75 467.5h6.50v8.1h-6.50zM1370.00 467.5h3.25v8.1h-3.25zM1379.75 467.5h3.25v8.1h-3.25zM1386.25 467.5h3.25v8.1h-3.25zM1425.25 467.5h6.50v8.1h-6.50zM1444.75 467.5h3.25v8.1h-3.25zM1457.75 467.5h3.25v8.1h-3.25zM1467.50 467.5h6.50v8.1h-6.50zM1490.25 467.5h3.25v8.1h-3.25zM1522.75 467.5h3.25v8.1h-3.25zM1542.25 467.5h3.25v8.1h-3.25zM1555.25 467.5h3.25v8.1h-3.25zM1574.75 467.5h6.50v8.1h-6.50zM1591.00 467.5h3.25v8.1h-3.25zM1600.75 467.5h3.25v8.1h-3.25zM1607.25 467.5h13.00v8.1h-13.00zM1623.50 467.5h3.25v8.1h-3.25zM1633.25 467.5h6.50v8.1h-6.50zM1649.50 467.5h6.50v8.1h-6.50zM1659.25 467.5h6.50v8.1h-6.50zM138.25 459.4h3.25v8.1h-3.25zM154.50 459.4h3.25v8.1h-3.25zM161.00 459.4h6.50v8.1h-6.50zM187.00 459.4h6.50v8.1h-6.50zM206.50 459.4h3.25v8.1h-3.25zM216.25 459.4h6.50v8.1h-6.50zM245.50 459.4h9.75v8.1h-9.75zM268.25 459.4h3.25v8.1h-3.25zM297.50 459.4h3.25v8.1h-3.25zM310.50 459.4h3.25v8.1h-3.25zM326.75 459.4h3.25v8.1h-3.25zM333.25 459.4h3.25v8.1h-3.25zM343.00 459.4h3.25v8.1h-3.25zM349.50 459.4h3.25v8.1h-3.25zM378.75 459.4h3.25v8.1h-3.25zM411.25 459.4h3.25v8.1h-3.25zM437.25 459.4h3.25v8.1h-3.25zM495.75 459.4h6.50v8.1h-6.50zM547.75 459.4h3.25v8.1h-3.25zM599.75 459.4h3.25v8.1h-3.25zM612.75 459.4h3.25v8.1h-3.25zM642.00 459.4h3.25v8.1h-3.25zM651.75 459.4h3.25v8.1h-3.25zM742.75 459.4h3.25v8.1h-3.25zM759.00 459.4h3.25v8.1h-3.25zM772.00 459.4h3.25v8.1h-3.25zM788.25 459.4h3.25v8.1h-3.25zM798.00 459.4h3.25v8.1h-3.25zM824.00 459.4h3.25v8.1h-3.25zM830.50 459.4h3.25v8.1h-3.25zM837.00 459.4h3.25v8.1h-3.25zM859.75 459.4h3.25v8.1h-3.25zM866.25 459.4h3.25v8.1h-3.25zM889.00 459.4h3.25v8.1h-3.25zM905.25 459.4h3.25v8.1h-3.25zM921.50 459.4h3.25v8.1h-3.25zM950.75 459.4h9.75v8.1h-9.75zM1006.00 459.4h3.25v8.1h-3.25zM1051.50 459.4h3.25v8.1h-3.25zM1087.25 459.4h3.25v8.1h-3.25zM1097.00 459.4h3.25v8.1h-3.25zM1110.00 459.4h3.25v8.1h-3.25zM1175.00 459.4h3.25v8.1h-3.25zM1181.50 459.4h9.75v8.1h-9.75zM1194.50 459.4h3.25v8.1h-3.25zM1204.25 459.4h3.25v8.1h-3.25zM1220.50 459.4h6.50v8.1h-6.50zM1233.50 459.4h3.25v8.1h-3.25zM1331.00 459.4h9.75v8.1h-9.75zM1350.50 459.4h3.25v8.1h-3.25zM1370.00 459.4h3.25v8.1h-3.25zM1441.50 459.4h6.50v8.1h-6.50zM1467.50 459.4h3.25v8.1h-3.25zM1474.00 459.4h3.25v8.1h-3.25zM1487.00 459.4h3.25v8.1h-3.25zM1493.50 459.4h3.25v8.1h-3.25zM1532.50 459.4h3.25v8.1h-3.25zM1548.75 459.4h6.50v8.1h-6.50zM1587.75 459.4h3.25v8.1h-3.25zM1649.50 459.4h3.25v8.1h-3.25zM1662.50 459.4h3.25v8.1h-3.25zM1678.75 459.4h3.25v8.1h-3.25zM131.75 451.3h3.25v8.1h-3.25zM141.50 451.3h3.25v8.1h-3.25zM151.25 451.3h3.25v8.1h-3.25zM164.25 451.3h6.50v8.1h-6.50zM232.50 451.3h3.25v8.1h-3.25zM271.50 451.3h3.25v8.1h-3.25zM278.00 451.3h3.25v8.1h-3.25zM300.75 451.3h3.25v8.1h-3.25zM382.00 451.3h3.25v8.1h-3.25zM391.75 451.3h3.25v8.1h-3.25zM502.25 451.3h3.25v8.1h-3.25zM512.00 451.3h3.25v8.1h-3.25zM525.00 451.3h3.25v8.1h-3.25zM534.75 451.3h3.25v8.1h-3.25zM583.50 451.3h3.25v8.1h-3.25zM590.00 451.3h3.25v8.1h-3.25zM599.75 451.3h3.25v8.1h-3.25zM616.00 451.3h9.75v8.1h-9.75zM648.50 451.3h3.25v8.1h-3.25zM703.75 451.3h3.25v8.1h-3.25zM713.50 451.3h3.25v8.1h-3.25zM729.75 451.3h3.25v8.1h-3.25zM781.75 451.3h3.25v8.1h-3.25zM788.25 451.3h6.50v8.1h-6.50zM814.25 451.3h3.25v8.1h-3.25zM843.50 451.3h3.25v8.1h-3.25zM850.00 451.3h3.25v8.1h-3.25zM856.50 451.3h3.25v8.1h-3.25zM885.75 451.3h3.25v8.1h-3.25zM892.25 451.3h3.25v8.1h-3.25zM898.75 451.3h3.25v8.1h-3.25zM911.75 451.3h3.25v8.1h-3.25zM937.75 451.3h3.25v8.1h-3.25zM947.50 451.3h3.25v8.1h-3.25zM999.50 451.3h9.75v8.1h-9.75zM1012.50 451.3h6.50v8.1h-6.50zM1025.50 451.3h3.25v8.1h-3.25zM1032.00 451.3h3.25v8.1h-3.25zM1051.50 451.3h3.25v8.1h-3.25zM1090.50 451.3h6.50v8.1h-6.50zM1103.50 451.3h3.25v8.1h-3.25zM1132.75 451.3h3.25v8.1h-3.25zM1165.25 451.3h6.50v8.1h-6.50zM1184.75 451.3h3.25v8.1h-3.25zM1210.75 451.3h3.25v8.1h-3.25zM1249.75 451.3h3.25v8.1h-3.25zM1301.75 451.3h6.50v8.1h-6.50zM1327.75 451.3h3.25v8.1h-3.25zM1340.75 451.3h3.25v8.1h-3.25zM1350.50 451.3h3.25v8.1h-3.25zM1366.75 451.3h3.25v8.1h-3.25zM1399.25 451.3h3.25v8.1h-3.25zM1409.00 451.3h3.25v8.1h-3.25zM1457.75 451.3h3.25v8.1h-3.25zM1470.75 451.3h3.25v8.1h-3.25zM1480.50 451.3h3.25v8.1h-3.25zM1561.75 451.3h3.25v8.1h-3.25zM1574.75 451.3h3.25v8.1h-3.25zM1581.25 451.3h3.25v8.1h-3.25zM1659.25 451.3h3.25v8.1h-3.25zM131.75 443.2h6.50v8.1h-6.50zM141.50 443.2h3.25v8.1h-3.25zM226.00 443.2h3.25v8.1h-3.25zM261.75 443.2h3.25v8.1h-3.25zM287.75 443.2h3.25v8.1h-3.25zM297.50 443.2h3.25v8.1h-3.25zM313.75 443.2h3.25v8.1h-3.25zM375.50 443.2h6.50v8.1h-6.50zM398.25 443.2h3.25v8.1h-3.25zM408.00 443.2h3.25v8.1h-3.25zM443.75 443.2h3.25v8.1h-3.25zM466.50 443.2h6.50v8.1h-6.50zM499.00 443.2h6.50v8.1h-6.50zM521.75 443.2h3.25v8.1h-3.25zM590.00 443.2h3.25v8.1h-3.25zM746.00 443.2h3.25v8.1h-3.25zM804.50 443.2h3.25v8.1h-3.25zM824.00 443.2h3.25v8.1h-3.25zM840.25 443.2h3.25v8.1h-3.25zM846.75 443.2h3.25v8.1h-3.25zM941.00 443.2h3.25v8.1h-3.25zM957.25 443.2h3.25v8.1h-3.25zM1061.25 443.2h3.25v8.1h-3.25zM1084.00 443.2h3.25v8.1h-3.25zM1090.50 443.2h3.25v8.1h-3.25zM1113.25 443.2h3.25v8.1h-3.25zM1214.00 443.2h6.50v8.1h-6.50zM1259.50 443.2h3.25v8.1h-3.25zM1295.25 443.2h3.25v8.1h-3.25zM1301.75 443.2h3.25v8.1h-3.25zM1311.50 443.2h3.25v8.1h-3.25zM1331.00 443.2h3.25v8.1h-3.25zM1409.00 443.2h3.25v8.1h-3.25zM1441.50 443.2h3.25v8.1h-3.25zM1451.25 443.2h3.25v8.1h-3.25zM1535.75 443.2h3.25v8.1h-3.25zM1561.75 443.2h3.25v8.1h-3.25zM1574.75 443.2h3.25v8.1h-3.25zM1584.50 443.2h3.25v8.1h-3.25zM1630.00 443.2h3.25v8.1h-3.25zM248.75 435.1h3.25v8.1h-3.25zM287.75 435.1h3.25v8.1h-3.25zM430.75 435.1h3.25v8.1h-3.25zM521.75 435.1h3.25v8.1h-3.25zM596.50 435.1h3.25v8.1h-3.25zM798.00 435.1h3.25v8.1h-3.25zM869.50 435.1h3.25v8.1h-3.25zM876.00 435.1h3.25v8.1h-3.25zM1116.50 435.1h3.25v8.1h-3.25zM1246.50 435.1h3.25v8.1h-3.25zM1272.50 435.1h3.25v8.1h-3.25zM1350.50 435.1h3.25v8.1h-3.25z"/></g>
<g fill="#38a0c2"><path id="hm8" d="M122.00 491.8h3.25v8.1h-3.25zM131.75 491.8h6.50v8.1h-6.50zM141.50 491.8h3.25v8.1h-3.25zM148.00 491.8h3.25v8.1h-3.25zM177.25 491.8h3.25v8.1h-3.25zM183.75 491.8h3.25v8.1h-3.25zM190.25 491.8h3.25v8.1h-3.25zM206.50 491.8h3.25v8.1h-3.25zM219.50 491.8h3.25v8.1h-3.25zM229.25 491.8h3.25v8.1h-3.25zM235.75 491.8h3.25v8.1h-3.25zM255.25 491.8h3.25v8.1h-3.25zM265.00 491.8h3.25v8.1h-3.25zM271.50 491.8h3.25v8.1h-3.25zM287.75 491.8h6.50v8.1h-6.50zM297.50 491.8h6.50v8.1h-6.50zM307.25 491.8h3.25v8.1h-3.25zM323.50 491.8h3.25v8.1h-3.25zM330.00 491.8h3.25v8.1h-3.25zM365.75 491.8h3.25v8.1h-3.25zM411.25 491.8h3.25v8.1h-3.25zM421.00 491.8h3.25v8.1h-3.25zM437.25 491.8h6.50v8.1h-6.50zM447.00 491.8h13.00v8.1h-13.00zM463.25 491.8h3.25v8.1h-3.25zM473.00 491.8h6.50v8.1h-6.50zM492.50 491.8h3.25v8.1h-3.25zM502.25 491.8h6.50v8.1h-6.50zM521.75 491.8h3.25v8.1h-3.25zM567.25 491.8h3.25v8.1h-3.25zM609.50 491.8h3.25v8.1h-3.25zM616.00 491.8h6.50v8.1h-6.50zM625.75 491.8h3.25v8.1h-3.25zM648.50 491.8h6.50v8.1h-6.50zM661.50 491.8h3.25v8.1h-3.25zM674.50 491.8h3.25v8.1h-3.25zM700.50 491.8h3.25v8.1h-3.25zM752.50 491.8h6.50v8.1h-6.50zM768.75 491.8h3.25v8.1h-3.25zM788.25 491.8h3.25v8.1h-3.25zM794.75 491.8h3.25v8.1h-3.25zM801.25 491.8h3.25v8.1h-3.25zM814.25 491.8h3.25v8.1h-3.25zM846.75 491.8h3.25v8.1h-3.25zM866.25 491.8h3.25v8.1h-3.25zM882.50 491.8h6.50v8.1h-6.50zM898.75 491.8h6.50v8.1h-6.50zM911.75 491.8h3.25v8.1h-3.25zM944.25 491.8h3.25v8.1h-3.25zM954.00 491.8h3.25v8.1h-3.25zM960.50 491.8h3.25v8.1h-3.25zM970.25 491.8h3.25v8.1h-3.25zM976.75 491.8h6.50v8.1h-6.50zM999.50 491.8h3.25v8.1h-3.25zM1006.00 491.8h3.25v8.1h-3.25zM1025.50 491.8h3.25v8.1h-3.25zM1032.00 491.8h13.00v8.1h-13.00zM1093.75 491.8h3.25v8.1h-3.25zM1106.75 491.8h3.25v8.1h-3.25zM1129.50 491.8h3.25v8.1h-3.25zM1139.25 491.8h3.25v8.1h-3.25zM1158.75 491.8h6.50v8.1h-6.50zM1191.25 491.8h6.50v8.1h-6.50zM1201.00 491.8h3.25v8.1h-3.25zM1220.50 491.8h3.25v8.1h-3.25zM1240.00 491.8h9.75v8.1h-9.75zM1266.00 491.8h3.25v8.1h-3.25zM1272.50 491.8h3.25v8.1h-3.25zM1279.00 491.8h3.25v8.1h-3.25zM1314.75 491.8h3.25v8.1h-3.25zM1327.75 491.8h3.25v8.1h-3.25zM1347.25 491.8h3.25v8.1h-3.25zM1353.75 491.8h3.25v8.1h-3.25zM1363.50 491.8h6.50v8.1h-6.50zM1412.25 491.8h3.25v8.1h-3.25zM1418.75 491.8h6.50v8.1h-6.50zM1431.75 491.8h3.25v8.1h-3.25zM1448.00 491.8h6.50v8.1h-6.50zM1474.00 491.8h3.25v8.1h-3.25zM1490.25 491.8h3.25v8.1h-3.25zM1496.75 491.8h6.50v8.1h-6.50zM1506.50 491.8h3.25v8.1h-3.25zM1516.25 491.8h6.50v8.1h-6.50zM1526.00 491.8h9.75v8.1h-9.75zM1548.75 491.8h6.50v8.1h-6.50zM1571.50 491.8h13.00v8.1h-13.00zM1591.00 491.8h3.25v8.1h-3.25zM1604.00 491.8h6.50v8.1h-6.50zM1626.75 491.8h3.25v8.1h-3.25zM1659.25 491.8h3.25v8.1h-3.25zM1665.75 491.8h6.50v8.1h-6.50zM148.00 483.7h3.25v8.1h-3.25zM161.00 483.7h3.25v8.1h-3.25zM180.50 483.7h3.25v8.1h-3.25zM196.75 483.7h3.25v8.1h-3.25zM222.75 483.7h3.25v8.1h-3.25zM239.00 483.7h3.25v8.1h-3.25zM245.50 483.7h3.25v8.1h-3.25zM284.50 483.7h3.25v8.1h-3.25zM297.50 483.7h3.25v8.1h-3.25zM310.50 483.7h3.25v8.1h-3.25zM320.25 483.7h3.25v8.1h-3.25zM326.75 483.7h3.25v8.1h-3.25zM349.50 483.7h3.25v8.1h-3.25zM385.25 483.7h3.25v8.1h-3.25zM395.00 483.7h3.25v8.1h-3.25zM404.75 483.7h3.25v8.1h-3.25zM430.75 483.7h3.25v8.1h-3.25zM489.25 483.7h9.75v8.1h-9.75zM518.50 483.7h3.25v8.1h-3.25zM544.50 483.7h6.50v8.1h-6.50zM557.50 483.7h6.50v8.1h-6.50zM573.75 483.7h6.50v8.1h-6.50zM590.00 483.7h3.25v8.1h-3.25zM599.75 483.7h3.25v8.1h-3.25zM609.50 483.7h3.25v8.1h-3.25zM616.00 483.7h3.25v8.1h-3.25zM622.50 483.7h6.50v8.1h-6.50zM632.25 483.7h9.75v8.1h-9.75zM648.50 483.7h6.50v8.1h-6.50zM710.25 483.7h3.25v8.1h-3.25zM739.50 483.7h9.75v8.1h-9.75zM755.75 483.7h6.50v8.1h-6.50zM768.75 483.7h3.25v8.1h-3.25zM778.50 483.7h3.25v8.1h-3.25zM785.00 483.7h3.25v8.1h-3.25zM791.50 483.7h6.50v8.1h-6.50zM807.75 483.7h3.25v8.1h-3.25zM827.25 483.7h3.25v8.1h-3.25zM840.25 483.7h6.50v8.1h-6.50zM863.00 483.7h3.25v8.1h-3.25zM876.00 483.7h9.75v8.1h-9.75zM889.00 483.7h3.25v8.1h-3.25zM911.75 483.7h3.25v8.1h-3.25zM918.25 483.7h3.25v8.1h-3.25zM924.75 483.7h3.25v8.1h-3.25zM941.00 483.7h3.25v8.1h-3.25zM954.00 483.7h6.50v8.1h-6.50zM1022.25 483.7h3.25v8.1h-3.25zM1035.25 483.7h3.25v8.1h-3.25zM1045.00 483.7h3.25v8.1h-3.25zM1061.25 483.7h6.50v8.1h-6.50zM1077.50 483.7h3.25v8.1h-3.25zM1084.00 483.7h3.25v8.1h-3.25zM1093.75 483.7h3.25v8.1h-3.25zM1106.75 483.7h3.25v8.1h-3.25zM1116.50 483.7h6.50v8.1h-6.50zM1136.00 483.7h3.25v8.1h-3.25zM1142.50 483.7h3.25v8.1h-3.25zM1149.00 483.7h3.25v8.1h-3.25zM1155.50 483.7h3.25v8.1h-3.25zM1165.25 483.7h6.50v8.1h-6.50zM1178.25 483.7h3.25v8.1h-3.25zM1194.50 483.7h3.25v8.1h-3.25zM1210.75 483.7h3.25v8.1h-3.25zM1243.25 483.7h3.25v8.1h-3.25zM1249.75 483.7h3.25v8.1h-3.25zM1266.00 483.7h9.75v8.1h-9.75zM1282.25 483.7h3.25v8.1h-3.25zM1295.25 483.7h3.25v8.1h-3.25zM1321.25 483.7h3.25v8.1h-3.25zM1337.50 483.7h6.50v8.1h-6.50zM1347.25 483.7h3.25v8.1h-3.25zM1353.75 483.7h3.25v8.1h-3.25zM1366.75 483.7h13.00v8.1h-13.00zM1386.25 483.7h3.25v8.1h-3.25zM1415.50 483.7h3.25v8.1h-3.25zM1422.00 483.7h6.50v8.1h-6.50zM1435.00 483.7h9.75v8.1h-9.75zM1448.00 483.7h3.25v8.1h-3.25zM1467.50 483.7h3.25v8.1h-3.25zM1477.25 483.7h6.50v8.1h-6.50zM1487.00 483.7h3.25v8.1h-3.25zM1493.50 483.7h3.25v8.1h-3.25zM1509.75 483.7h3.25v8.1h-3.25zM1519.50 483.7h3.25v8.1h-3.25zM1565.00 483.7h3.25v8.1h-3.25zM1578.00 483.7h3.25v8.1h-3.25zM1594.25 483.7h3.25v8.1h-3.25zM1607.25 483.7h3.25v8.1h-3.25zM1636.50 483.7h3.25v8.1h-3.25zM1646.25 483.7h3.25v8.1h-3.25zM1672.25 483.7h3.25v8.1h-3.25zM1678.75 483.7h3.25v8.1h-3.25zM144.75 475.6h3.25v8.1h-3.25zM167.50 475.6h3.25v8.1h-3.25zM193.50 475.6h3.25v8.1h-3.25zM239.00 475.6h3.25v8.1h-3.25zM258.50 475.6h3.25v8.1h-3.25zM278.00 475.6h3.25v8.1h-3.25zM291.00 475.6h6.50v8.1h-6.50zM300.75 475.6h6.50v8.1h-6.50zM336.50 475.6h3.25v8.1h-3.25zM352.75 475.6h3.25v8.1h-3.25zM362.50 475.6h3.25v8.1h-3.25zM375.50 475.6h6.50v8.1h-6.50zM385.25 475.6h3.25v8.1h-3.25zM395.00 475.6h3.25v8.1h-3.25zM404.75 475.6h3.25v8.1h-3.25zM427.50 475.6h3.25v8.1h-3.25zM440.50 475.6h3.25v8.1h-3.25zM460.00 475.6h3.25v8.1h-3.25zM466.50 475.6h6.50v8.1h-6.50zM482.75 475.6h3.25v8.1h-3.25zM499.00 475.6h3.25v8.1h-3.25zM508.75 475.6h6.50v8.1h-6.50zM531.50 475.6h3.25v8.1h-3.25zM544.50 475.6h3.25v8.1h-3.25zM551.00 475.6h6.50v8.1h-6.50zM606.25 475.6h3.25v8.1h-3.25zM616.00 475.6h3.25v8.1h-3.25zM622.50 475.6h3.25v8.1h-3.25zM642.00 475.6h3.25v8.1h-3.25zM648.50 475.6h3.25v8.1h-3.25zM687.50 475.6h3.25v8.1h-3.25zM697.25 475.6h6.50v8.1h-6.50zM713.50 475.6h3.25v8.1h-3.25zM749.25 475.6h13.00v8.1h-13.00zM788.25 475.6h3.25v8.1h-3.25zM807.75 475.6h13.00v8.1h-13.00zM824.00 475.6h3.25v8.1h-3.25zM876.00 475.6h6.50v8.1h-6.50zM885.75 475.6h3.25v8.1h-3.25zM898.75 475.6h6.50v8.1h-6.50zM921.50 475.6h3.25v8.1h-3.25zM931.25 475.6h3.25v8.1h-3.25zM973.50 475.6h3.25v8.1h-3.25zM999.50 475.6h3.25v8.1h-3.25zM1019.00 475.6h3.25v8.1h-3.25zM1025.50 475.6h3.25v8.1h-3.25zM1051.50 475.6h6.50v8.1h-6.50zM1087.25 475.6h6.50v8.1h-6.50zM1097.00 475.6h3.25v8.1h-3.25zM1165.25 475.6h3.25v8.1h-3.25zM1181.50 475.6h3.25v8.1h-3.25zM1240.00 475.6h6.50v8.1h-6.50zM1266.00 475.6h6.50v8.1h-6.50zM1324.50 475.6h3.25v8.1h-3.25zM1340.75 475.6h3.25v8.1h-3.25zM1347.25 475.6h6.50v8.1h-6.50zM1357.00 475.6h3.25v8.1h-3.25zM1363.50 475.6h3.25v8.1h-3.25zM1370.00 475.6h3.25v8.1h-3.25zM1379.75 475.6h6.50v8.1h-6.50zM1409.00 475.6h3.25v8.1h-3.25zM1431.75 475.6h3.25v8.1h-3.25zM1441.50 475.6h3.25v8.1h-3.25zM1461.00 475.6h3.25v8.1h-3.25zM1480.50 475.6h9.75v8.1h-9.75zM1529.25 475.6h3.25v8.1h-3.25zM1555.25 475.6h3.25v8.1h-3.25zM1565.00 475.6h3.25v8.1h-3.25zM1591.00 475.6h3.25v8.1h-3.25zM1649.50 475.6h3.25v8.1h-3.25zM1665.75 475.6h6.50v8.1h-6.50zM1675.50 475.6h3.25v8.1h-3.25zM258.50 467.5h3.25v8.1h-3.25zM382.00 467.5h3.25v8.1h-3.25zM398.25 467.5h3.25v8.1h-3.25zM456.75 467.5h3.25v8.1h-3.25zM616.00 467.5h3.25v8.1h-3.25zM661.50 467.5h3.25v8.1h-3.25zM684.25 467.5h3.25v8.1h-3.25zM723.25 467.5h3.25v8.1h-3.25zM889.00 467.5h3.25v8.1h-3.25zM918.25 467.5h3.25v8.1h-3.25zM934.50 467.5h3.25v8.1h-3.25zM1067.75 467.5h3.25v8.1h-3.25zM1077.50 467.5h3.25v8.1h-3.25zM1158.75 467.5h3.25v8.1h-3.25zM1223.75 467.5h3.25v8.1h-3.25zM1233.50 467.5h3.25v8.1h-3.25zM1288.75 467.5h3.25v8.1h-3.25zM1298.50 467.5h3.25v8.1h-3.25zM1308.25 467.5h3.25v8.1h-3.25zM1500.00 467.5h3.25v8.1h-3.25zM1509.75 467.5h3.25v8.1h-3.25z"/></g>
</g>
<defs><pattern id="seams" patternUnits="userSpaceOnUse" x="121.55" y="0" width="3.25" height="20"><rect x="0" y="0" width="0.9" height="20" fill="#ffffff" fill-opacity="0.38"/></pattern></defs>
<g fill="url(#seams)"><use href="#hm0"/><use href="#hm1"/><use href="#hm2"/><use href="#hm3"/><use href="#hm4"/><use href="#hm5"/><use href="#hm6"/><use href="#hm7"/><use href="#hm8"/></g>
<g stroke="#ffffff" stroke-opacity="0.25" stroke-width="1.5"><line x1="122" y1="439.0" x2="1682" y2="439.0"/><line x1="122" y1="401.6" x2="1682" y2="401.6"/></g>
<rect x="1722.2" y="252.1" width="15.7" height="15.6" fill="#2c1061"/>
<rect x="1722.2" y="272.1" width="15.7" height="15.6" fill="#4a3b98"/>
<rect x="1722.2" y="292.1" width="15.7" height="15.6" fill="#3b58ab"/>
<rect x="1722.2" y="312.2" width="15.7" height="15.6" fill="#2376b7"/>
<rect x="1722.2" y="332.2" width="15.7" height="15.6" fill="#2b91c3"/>
<rect x="1722.2" y="352.2" width="15.7" height="15.6" fill="#46aabf"/>
<rect x="1722.2" y="372.2" width="15.7" height="15.6" fill="#7fcfb9"/>
<text x="1717.8" y="259.5" font-size="15.5" text-anchor="end" fill="#222">50</text>
<text x="1717.8" y="325.6" font-size="15.5" text-anchor="end" fill="#222">25</text>
<text x="1717.8" y="391.7" font-size="15.5" text-anchor="end" fill="#222">1</text>
<g stroke="#dfe1e4" stroke-width="2"><line x1="122" y1="913.8" x2="1682" y2="913.8"/><line x1="122" y1="876.4" x2="1682" y2="876.4"/><line x1="122" y1="839.0" x2="1682" y2="839.0"/><line x1="122" y1="801.6" x2="1682" y2="801.6"/><line x1="122" y1="764.2" x2="1682" y2="764.2"/><line x1="122" y1="726.8" x2="1682" y2="726.8"/><line x1="122" y1="689.5" x2="1682" y2="689.5"/><line x1="122" y1="652.1" x2="1682" y2="652.1"/></g>
<polyline fill="none" stroke="#9b7acd" stroke-width="2.8" stroke-linejoin="round" points="122.4,899.0 125.7,897.7 128.9,897.5 132.2,897.3 135.4,898.6 138.7,898.5 141.9,897.6 145.2,898.3 148.4,898.0 151.7,897.1 154.9,888.8 158.2,896.4 161.4,897.7 164.7,896.5 167.9,897.0 171.2,895.8 174.4,897.9 177.7,898.0 180.9,896.8 184.2,898.3 187.4,898.3 190.7,897.7 193.9,882.1 197.2,895.2 200.4,897.7 203.7,898.1 206.9,897.9 210.2,894.3 213.4,895.3 216.7,897.0 219.9,897.5 223.2,898.0 226.4,897.8 229.7,897.0 232.9,897.2 236.2,894.5 239.4,898.0 242.7,897.8 245.9,896.2 249.2,897.9 252.4,896.5 255.7,897.2 258.9,898.2 262.1,899.0 265.4,897.3 268.6,898.4 271.9,898.4 275.1,899.3 278.4,896.9 281.6,897.8 284.9,897.8 288.1,892.0 291.4,897.7 294.6,894.7 297.9,897.4 301.1,898.1 304.4,900.0 307.6,897.3 310.9,897.5 314.1,897.8 317.4,896.6 320.6,899.0 323.9,900.2 327.1,896.6 330.4,897.5 333.6,899.2 336.9,898.2 340.1,897.4 343.4,898.9 346.6,897.4 349.9,896.1 353.1,896.7 356.4,897.9 359.6,897.6 362.9,898.6 366.1,897.8 369.4,898.1 372.6,898.7 375.9,885.4 379.1,896.3 382.4,897.8 385.6,898.7 388.9,898.2 392.1,896.6 395.4,896.5 398.6,898.4 401.9,897.7 405.1,897.1 408.4,898.1 411.6,898.8 414.9,898.7 418.1,897.9 421.4,898.5 424.6,898.9 427.9,898.1 431.1,897.1 434.4,886.0 437.6,898.0 440.9,896.3 444.1,898.5 447.4,897.9 450.6,888.6 453.9,897.2 457.1,898.0 460.4,899.2 463.6,898.5 466.9,892.5 470.1,897.3 473.4,897.8 476.6,897.2 479.9,899.2 483.1,884.7 486.4,898.9 489.6,898.5 492.9,895.2 496.1,897.4 499.4,893.3 502.6,897.1 505.9,894.1 509.1,887.6 512.4,897.9 515.6,897.5 518.9,898.5 522.1,898.1 525.4,897.5 528.6,896.9 531.9,897.5 535.1,896.9 538.4,898.8 541.6,899.7 544.9,897.8 548.1,898.7 551.4,897.7 554.6,898.2 557.9,895.6 561.1,896.9 564.4,897.2 567.6,898.2 570.9,898.8 574.1,899.9 577.4,899.6 580.6,898.5 583.9,897.8 587.1,898.4 590.4,898.4 593.6,899.2 596.9,899.2 600.1,899.3 603.4,897.4 606.6,899.5 609.9,897.3 613.1,898.6 616.4,897.5 619.6,897.7 622.9,897.3 626.1,896.9 629.4,898.6 632.6,898.7 635.9,898.3 639.1,898.6 642.4,897.4 645.6,888.8 648.9,897.9 652.1,893.3 655.4,898.3 658.6,897.0 661.9,899.4 665.1,897.7 668.4,897.5 671.6,895.0 674.9,898.5 678.1,897.2 681.4,898.2 684.6,899.5 687.9,899.0 691.1,897.1 694.4,898.7 697.6,896.9 700.9,896.8 704.1,898.1 707.4,897.5 710.6,894.2 713.9,898.3 717.1,898.5 720.4,897.5 723.6,899.0 726.9,898.1 730.1,897.9 733.4,897.5 736.6,899.7 739.9,899.4 743.1,888.8 746.4,898.1 749.6,897.8 752.9,897.8 756.1,896.3 759.4,897.4 762.6,897.5 765.9,898.4 769.1,894.8 772.4,897.4 775.6,897.4 778.9,898.0 782.1,897.4 785.4,896.7 788.6,888.8 791.9,899.7 795.1,897.3 798.4,897.4 801.6,898.1 804.9,898.3 808.1,895.7 811.4,898.3 814.6,899.0 817.9,898.3 821.1,897.5 824.4,898.5 827.6,898.3 830.9,897.7 834.1,898.3 837.4,897.9 840.6,898.0 843.9,898.8 847.1,895.6 850.4,898.9 853.6,897.2 856.9,898.7 860.1,898.2 863.4,899.4 866.6,898.3 869.9,899.0 873.1,896.7 876.4,891.4 879.6,897.5 882.9,899.4 886.1,899.0 889.4,898.1 892.6,896.3 895.9,897.0 899.1,898.3 902.4,897.8 905.6,897.7 908.9,891.4 912.1,897.3 915.4,898.5 918.6,897.7 921.9,897.0 925.1,897.8 928.4,897.9 931.6,898.2 934.9,897.9 938.1,897.4 941.4,898.2 944.6,895.9 947.9,897.8 951.1,898.1 954.4,893.2 957.6,897.9 960.9,896.7 964.1,898.9 967.4,898.8 970.6,894.6 973.9,898.8 977.1,897.7 980.4,898.0 983.6,899.6 986.9,897.4 990.1,896.9 993.4,897.8 996.6,899.1 999.9,897.3 1003.1,898.8 1006.4,898.1 1009.6,897.6 1012.9,898.6 1016.1,899.3 1019.4,898.1 1022.6,898.0 1025.9,898.7 1029.2,896.5 1032.4,894.7 1035.7,884.6 1038.9,898.4 1042.2,898.5 1045.4,897.8 1048.7,897.9 1051.9,898.1 1055.2,899.1 1058.4,898.3 1061.7,895.1 1064.9,896.4 1068.2,897.0 1071.4,897.2 1074.7,897.5 1077.9,897.9 1081.2,898.2 1084.4,897.7 1087.7,893.9 1090.9,891.4 1094.2,895.7 1097.4,898.0 1100.7,898.0 1103.9,896.5 1107.2,897.5 1110.4,898.3 1113.7,897.4 1116.9,898.4 1120.2,897.2 1123.4,897.4 1126.7,893.7 1129.9,895.3 1133.2,898.0 1136.4,898.1 1139.7,897.7 1142.9,897.4 1146.2,898.8 1149.4,898.6 1152.7,897.7 1155.9,897.2 1159.2,898.9 1162.4,899.2 1165.7,897.1 1168.9,897.3 1172.2,897.1 1175.4,898.7 1178.7,898.1 1181.9,897.8 1185.2,897.6 1188.4,898.1 1191.7,898.0 1194.9,897.2 1198.2,898.3 1201.4,898.4 1204.7,898.3 1207.9,898.4 1211.2,897.9 1214.4,898.1 1217.7,896.1 1220.9,894.4 1224.2,897.7 1227.4,898.2 1230.7,897.0 1233.9,886.1 1237.2,898.0 1240.4,898.0 1243.7,898.4 1246.9,898.3 1250.2,889.1 1253.4,897.2 1256.7,896.5 1259.9,897.8 1263.2,897.8 1266.4,897.7 1269.7,893.5 1272.9,897.4 1276.2,898.1 1279.4,898.1 1282.7,898.0 1285.9,897.6 1289.2,898.2 1292.4,896.8 1295.7,898.8 1298.9,894.1 1302.2,897.6 1305.4,898.9 1308.7,897.5 1311.9,897.5 1315.2,898.5 1318.4,896.2 1321.7,895.9 1324.9,895.0 1328.2,895.0 1331.4,898.6 1334.7,897.8 1337.9,897.9 1341.2,899.1 1344.4,898.8 1347.7,898.5 1350.9,898.3 1354.2,898.3 1357.4,898.5 1360.7,891.4 1363.9,897.2 1367.2,897.9 1370.4,897.4 1373.7,898.1 1376.9,897.5 1380.2,898.0 1383.4,897.8 1386.7,897.9 1389.9,899.1 1393.2,900.0 1396.4,895.5 1399.7,898.4 1402.9,897.7 1406.2,898.2 1409.4,898.1 1412.7,896.9 1415.9,898.9 1419.2,898.0 1422.4,898.8 1425.7,897.9 1428.9,897.6 1432.2,897.5 1435.4,897.9 1438.7,899.1 1441.9,897.8 1445.2,897.3 1448.4,894.1 1451.7,896.3 1454.9,886.9 1458.2,898.8 1461.4,898.4 1464.7,897.9 1467.9,897.2 1471.2,898.9 1474.4,893.1 1477.7,897.5 1480.9,898.7 1484.2,897.5 1487.4,888.4 1490.7,898.0 1493.9,898.2 1497.2,897.8 1500.4,898.9 1503.7,897.6 1506.9,899.7 1510.2,896.7 1513.4,898.4 1516.7,887.6 1519.9,897.6 1523.2,898.4 1526.4,896.6 1529.7,898.0 1532.9,898.5 1536.2,896.2 1539.4,900.1 1542.7,897.9 1545.9,899.9 1549.2,897.2 1552.4,898.6 1555.7,896.7 1558.9,898.4 1562.2,897.1 1565.4,896.0 1568.7,897.1 1571.9,898.0 1575.2,897.7 1578.4,898.5 1581.7,899.2 1584.9,897.2 1588.2,897.6 1591.4,898.0 1594.7,897.6 1597.9,897.8 1601.2,898.4 1604.4,896.5 1607.7,897.8 1610.9,895.6 1614.2,899.1 1617.4,898.5 1620.7,898.0 1623.9,898.1 1627.2,898.3 1630.4,898.0 1633.7,898.9 1636.9,894.5 1640.2,899.2 1643.4,898.6 1646.7,898.6 1649.9,897.3 1653.2,893.4 1656.4,897.9 1659.7,898.9 1662.9,898.3 1666.2,897.4 1669.4,897.0 1672.7,899.1 1675.9,898.3 1679.2,897.9"/>
<polyline fill="none" stroke="#dc7b3d" stroke-width="2.8" stroke-linejoin="round" points="122.4,902.8 125.7,899.2 128.9,901.7 132.2,902.2 135.4,898.7 138.7,899.2 141.9,900.7 145.2,897.4 148.4,892.9 151.7,901.7 154.9,900.1 158.2,900.0 161.4,901.9 164.7,906.6 167.9,900.8 171.2,898.8 174.4,900.6 177.7,902.7 180.9,896.5 184.2,898.9 187.4,913.4 190.7,905.7 193.9,899.3 197.2,900.5 200.4,895.4 203.7,898.3 206.9,897.5 210.2,899.6 213.4,901.7 216.7,907.1 219.9,900.4 223.2,901.6 226.4,897.5 229.7,913.4 232.9,899.9 236.2,897.4 239.4,901.4 242.7,901.3 245.9,892.1 249.2,902.1 252.4,900.6 255.7,898.2 258.9,903.3 262.1,899.0 265.4,892.9 268.6,905.0 271.9,898.6 275.1,901.1 278.4,898.4 281.6,895.6 284.9,897.7 288.1,901.3 291.4,903.6 294.6,906.4 297.9,901.3 301.1,900.5 304.4,903.7 307.6,896.9 310.9,903.2 314.1,894.0 317.4,900.6 320.6,913.4 323.9,901.0 327.1,901.1 330.4,901.7 333.6,898.9 336.9,902.5 340.1,894.1 343.4,898.0 346.6,903.8 349.9,908.2 353.1,897.7 356.4,900.5 359.6,901.0 362.9,903.9 366.1,905.2 369.4,906.4 372.6,894.0 375.9,896.7 379.1,913.4 382.4,895.9 385.6,902.6 388.9,899.2 392.1,899.2 395.4,903.6 398.6,902.5 401.9,904.1 405.1,901.1 408.4,897.5 411.6,898.4 414.9,900.0 418.1,898.1 421.4,906.2 424.6,895.5 427.9,901.4 431.1,904.9 434.4,886.0 437.6,903.0 440.9,901.0 444.1,900.3 447.4,907.8 450.6,897.7 453.9,896.4 457.1,904.1 460.4,902.4 463.6,897.7 466.9,898.4 470.1,896.6 473.4,905.1 476.6,899.2 479.9,904.1 483.1,894.5 486.4,904.0 489.6,904.7 492.9,898.1 496.1,894.3 499.4,901.1 502.6,900.8 505.9,899.5 509.1,887.6 512.4,903.2 515.6,902.8 518.9,902.9 522.1,901.4 525.4,901.2 528.6,904.9 531.9,905.1 535.1,904.8 538.4,902.1 541.6,901.9 544.9,901.9 548.1,897.0 551.4,896.6 554.6,898.2 557.9,896.7 561.1,902.0 564.4,889.9 567.6,901.4 570.9,907.1 574.1,900.5 577.4,905.0 580.6,903.0 583.9,901.7 587.1,900.2 590.4,901.6 593.6,903.7 596.9,904.5 600.1,901.2 603.4,904.6 606.6,904.6 609.9,901.5 613.1,900.7 616.4,903.6 619.6,906.3 622.9,900.4 626.1,898.9 629.4,908.5 632.6,902.3 635.9,907.8 639.1,898.7 642.4,904.3 645.6,899.2 648.9,902.9 652.1,901.6 655.4,901.8 658.6,906.3 661.9,893.4 665.1,905.7 668.4,900.9 671.6,903.5 674.9,901.9 678.1,897.3 681.4,906.5 684.6,901.6 687.9,899.8 691.1,900.9 694.4,900.1 697.6,903.4 700.9,905.9 704.1,905.0 707.4,902.4 710.6,899.1 713.9,901.0 717.1,896.7 720.4,901.0 723.6,900.7 726.9,900.7 730.1,906.2 733.4,899.6 736.6,904.4 739.9,902.3 743.1,894.6 746.4,904.7 749.6,900.9 752.9,900.4 756.1,900.9 759.4,901.2 762.6,902.8 765.9,892.9 769.1,906.9 772.4,904.2 775.6,897.0 778.9,899.7 782.1,903.4 785.4,903.8 788.6,901.9 791.9,893.7 795.1,899.8 798.4,904.2 801.6,900.6 804.9,903.0 808.1,897.0 811.4,900.4 814.6,897.7 817.9,900.8 821.1,895.4 824.4,904.6 827.6,900.4 830.9,905.1 834.1,902.4 837.4,900.1 840.6,902.6 843.9,894.2 847.1,901.3 850.4,903.4 853.6,898.4 856.9,902.7 860.1,900.1 863.4,901.5 866.6,903.3 869.9,897.3 873.1,901.0 876.4,898.1 879.6,902.2 882.9,905.3 886.1,904.8 889.4,902.7 892.6,901.8 895.9,901.1 899.1,899.8 902.4,904.8 905.6,900.6 908.9,904.7 912.1,903.2 915.4,893.9 918.6,897.6 921.9,902.3 925.1,899.8 928.4,897.2 931.6,898.7 934.9,897.1 938.1,901.9 941.4,901.6 944.6,903.7 947.9,899.6 951.1,904.8 954.4,902.7 957.6,899.9 960.9,902.7 964.1,900.3 967.4,896.1 970.6,904.0 973.9,897.2 977.1,903.2 980.4,903.9 983.6,900.6 986.9,898.3 990.1,903.3 993.4,903.3 996.6,902.5 999.9,898.2 1003.1,900.7 1006.4,903.3 1009.6,898.8 1012.9,900.2 1016.1,902.4 1019.4,898.0 1022.6,903.2 1025.9,903.4 1029.2,895.4 1032.4,897.0 1035.7,901.0 1038.9,904.9 1042.2,900.3 1045.4,902.7 1048.7,899.3 1051.9,904.5 1055.2,897.6 1058.4,906.5 1061.7,898.9 1064.9,900.8 1068.2,903.2 1071.4,902.5 1074.7,902.4 1077.9,905.0 1081.2,902.9 1084.4,899.0 1087.7,905.5 1090.9,902.3 1094.2,903.8 1097.4,902.9 1100.7,900.1 1103.9,901.4 1107.2,901.1 1110.4,904.4 1113.7,899.6 1116.9,903.8 1120.2,898.7 1123.4,900.6 1126.7,902.3 1129.9,897.0 1133.2,902.4 1136.4,892.9 1139.7,900.9 1142.9,901.2 1146.2,904.8 1149.4,900.0 1152.7,901.3 1155.9,901.6 1159.2,900.6 1162.4,901.0 1165.7,902.2 1168.9,904.2 1172.2,904.7 1175.4,895.5 1178.7,901.9 1181.9,902.8 1185.2,900.0 1188.4,898.0 1191.7,896.3 1194.9,901.5 1198.2,903.6 1201.4,898.9 1204.7,902.9 1207.9,902.0 1211.2,897.1 1214.4,899.7 1217.7,898.1 1220.9,905.1 1224.2,901.1 1227.4,894.4 1230.7,904.9 1233.9,900.7 1237.2,900.1 1240.4,907.8 1243.7,896.7 1246.9,903.3 1250.2,901.6 1253.4,892.9 1256.7,906.3 1259.9,899.9 1263.2,902.5 1266.4,901.1 1269.7,903.6 1272.9,897.4 1276.2,909.0 1279.4,900.2 1282.7,899.7 1285.9,901.5 1289.2,902.0 1292.4,902.0 1295.7,898.3 1298.9,899.9 1302.2,895.0 1305.4,904.3 1308.7,894.6 1311.9,905.6 1315.2,901.3 1318.4,897.1 1321.7,911.6 1324.9,894.1 1328.2,901.7 1331.4,904.5 1334.7,901.5 1337.9,898.8 1341.2,886.1 1344.4,905.9 1347.7,913.4 1350.9,900.7 1354.2,902.4 1357.4,897.9 1360.7,899.4 1363.9,901.6 1367.2,891.4 1370.4,897.3 1373.7,902.6 1376.9,912.3 1380.2,897.6 1383.4,899.8 1386.7,906.9 1389.9,905.9 1393.2,902.4 1396.4,910.2 1399.7,901.7 1402.9,893.8 1406.2,892.9 1409.4,901.3 1412.7,898.9 1415.9,898.7 1419.2,901.6 1422.4,905.4 1425.7,913.4 1428.9,905.9 1432.2,906.5 1435.4,899.2 1438.7,903.5 1441.9,896.4 1445.2,901.0 1448.4,900.6 1451.7,902.4 1454.9,899.2 1458.2,898.3 1461.4,902.8 1464.7,899.5 1467.9,902.4 1471.2,904.7 1474.4,902.1 1477.7,899.5 1480.9,899.6 1484.2,903.2 1487.4,903.1 1490.7,912.3 1493.9,906.2 1497.2,899.4 1500.4,901.5 1503.7,903.9 1506.9,905.6 1510.2,897.9 1513.4,898.2 1516.7,903.1 1519.9,897.0 1523.2,907.1 1526.4,899.9 1529.7,897.6 1532.9,902.6 1536.2,903.4 1539.4,906.1 1542.7,900.3 1545.9,899.9 1549.2,898.7 1552.4,899.5 1555.7,900.9 1558.9,897.9 1562.2,904.1 1565.4,900.1 1568.7,899.7 1571.9,901.5 1575.2,896.3 1578.4,899.9 1581.7,897.4 1584.9,898.6 1588.2,901.7 1591.4,895.7 1594.7,898.0 1597.9,901.1 1601.2,901.5 1604.4,904.1 1607.7,901.6 1610.9,896.1 1614.2,900.6 1617.4,902.4 1620.7,899.6 1623.9,906.7 1627.2,905.7 1630.4,902.6 1633.7,897.2 1636.9,904.8 1640.2,901.9 1643.4,898.6 1646.7,904.4 1649.9,906.9 1653.2,901.6 1656.4,892.9 1659.7,902.9 1662.9,900.4 1666.2,902.4 1669.4,898.7 1672.7,897.1 1675.9,901.6 1679.2,897.8"/>
<polyline fill="none" stroke="#2a5ec0" stroke-width="3" stroke-linejoin="round" points="122.4,913.6 125.7,913.4 128.9,912.8 132.2,678.2 135.4,913.4 138.7,913.4 141.9,913.5 145.2,913.6 148.4,913.4 151.7,912.7 154.9,913.1 158.2,913.6 161.4,913.3 164.7,913.1 167.9,913.7 171.2,913.3 174.4,912.9 177.7,913.3 180.9,913.1 184.2,913.4 187.4,913.3 190.7,913.5 193.9,913.3 197.2,913.2 200.4,913.4 203.7,913.4 206.9,913.3 210.2,913.2 213.4,913.6 216.7,913.3 219.9,913.5 223.2,913.3 226.4,913.2 229.7,912.5 232.9,913.2 236.2,913.5 239.4,911.9 242.7,912.1 245.9,913.3 249.2,913.3 252.4,913.4 255.7,913.5 258.9,913.4 262.1,913.4 265.4,913.3 268.6,913.4 271.9,913.2 275.1,913.3 278.4,913.6 281.6,913.4 284.9,913.6 288.1,913.2 291.4,912.2 294.6,913.4 297.9,913.3 301.1,912.1 304.4,913.7 307.6,913.4 310.9,913.4 314.1,913.6 317.4,913.3 320.6,913.3 323.9,913.3 327.1,912.4 330.4,913.2 333.6,913.4 336.9,913.3 340.1,913.3 343.4,913.5 346.6,913.1 349.9,913.2 353.1,911.9 356.4,913.4 359.6,912.8 362.9,913.2 366.1,913.2 369.4,913.1 372.6,913.2 375.9,913.3 379.1,913.2 382.4,913.5 385.6,913.2 388.9,913.6 392.1,913.3 395.4,913.3 398.6,913.6 401.9,913.1 405.1,913.5 408.4,913.2 411.6,913.4 414.9,913.3 418.1,913.5 421.4,913.0 424.6,912.5 427.9,913.1 431.1,913.2 434.4,913.2 437.6,913.3 440.9,913.4 444.1,913.3 447.4,913.3 450.6,913.4 453.9,913.6 457.1,913.4 460.4,912.0 463.6,913.4 466.9,913.3 470.1,913.4 473.4,912.5 476.6,913.5 479.9,913.5 483.1,913.4 486.4,913.4 489.6,913.2 492.9,913.5 496.1,913.7 499.4,913.2 502.6,913.4 505.9,913.4 509.1,913.0 512.4,912.1 515.6,912.5 518.9,913.2 522.1,913.3 525.4,913.2 528.6,913.4 531.9,913.5 535.1,913.4 538.4,913.1 541.6,912.1 544.9,913.4 548.1,913.2 551.4,913.4 554.6,913.2 557.9,913.4 561.1,913.2 564.4,913.4 567.6,913.4 570.9,913.4 574.1,913.3 577.4,913.4 580.6,913.6 583.9,669.3 587.1,912.8 590.4,913.6 593.6,913.7 596.9,913.8 600.1,913.4 603.4,913.1 606.6,913.6 609.9,913.4 613.1,913.6 616.4,913.2 619.6,913.3 622.9,913.3 626.1,913.1 629.4,913.1 632.6,913.2 635.9,912.1 639.1,913.5 642.4,913.5 645.6,912.0 648.9,913.1 652.1,913.4 655.4,913.3 658.6,913.3 661.9,913.0 665.1,913.4 668.4,913.2 671.6,913.3 674.9,913.4 678.1,913.6 681.4,913.2 684.6,913.5 687.9,913.4 691.1,913.3 694.4,911.7 697.6,913.2 700.9,913.4 704.1,913.3 707.4,913.3 710.6,913.3 713.9,913.2 717.1,913.4 720.4,913.2 723.6,913.5 726.9,913.6 730.1,913.4 733.4,913.2 736.6,913.4 739.9,913.4 743.1,911.9 746.4,913.3 749.6,913.4 752.9,913.3 756.1,912.2 759.4,912.4 762.6,913.3 765.9,913.5 769.1,913.1 772.4,913.3 775.6,913.1 778.9,913.5 782.1,913.1 785.4,913.3 788.6,913.7 791.9,911.8 795.1,913.4 798.4,913.5 801.6,913.4 804.9,913.6 808.1,911.8 811.4,913.4 814.6,913.4 817.9,913.1 821.1,913.3 824.4,912.5 827.6,913.5 830.9,913.4 834.1,913.2 837.4,913.4 840.6,913.5 843.9,913.2 847.1,913.3 850.4,913.3 853.6,913.0 856.9,912.4 860.1,913.3 863.4,913.6 866.6,913.4 869.9,913.3 873.1,913.2 876.4,913.5 879.6,913.2 882.9,912.0 886.1,913.4 889.4,913.0 892.6,913.3 895.9,913.5 899.1,913.3 902.4,913.6 905.6,913.1 908.9,913.2 912.1,913.4 915.4,913.3 918.6,913.3 921.9,913.0 925.1,911.9 928.4,913.5 931.6,913.7 934.9,913.4 938.1,913.6 941.4,913.4 944.6,913.3 947.9,913.4 951.1,913.5 954.4,913.2 957.6,913.4 960.9,913.3 964.1,913.2 967.4,913.5 970.6,913.5 973.9,913.0 977.1,913.4 980.4,913.5 983.6,913.4 986.9,912.7 990.1,912.6 993.4,913.4 996.6,913.3 999.9,913.3 1003.1,913.3 1006.4,913.6 1009.6,913.6 1012.9,913.2 1016.1,913.4 1019.4,913.2 1022.6,912.4 1025.9,913.6 1029.2,913.3 1032.4,913.5 1035.7,913.3 1038.9,913.2 1042.2,913.0 1045.4,913.4 1048.7,913.2 1051.9,913.3 1055.2,913.2 1058.4,913.7 1061.7,913.4 1064.9,913.3 1068.2,913.3 1071.4,913.5 1074.7,912.3 1077.9,913.2 1081.2,913.3 1084.4,913.4 1087.7,913.4 1090.9,912.3 1094.2,912.3 1097.4,913.1 1100.7,913.4 1103.9,913.5 1107.2,913.5 1110.4,913.2 1113.7,913.3 1116.9,911.8 1120.2,913.3 1123.4,913.3 1126.7,912.5 1129.9,913.5 1133.2,913.4 1136.4,913.3 1139.7,913.3 1142.9,911.8 1146.2,913.4 1149.4,913.1 1152.7,912.4 1155.9,913.3 1159.2,913.4 1162.4,913.5 1165.7,913.6 1168.9,912.2 1172.2,913.5 1175.4,913.2 1178.7,913.5 1181.9,913.4 1185.2,913.2 1188.4,913.4 1191.7,913.3 1194.9,913.2 1198.2,913.6 1201.4,912.7 1204.7,913.5 1207.9,911.8 1211.2,912.6 1214.4,913.3 1217.7,911.6 1220.9,913.4 1224.2,913.3 1227.4,913.3 1230.7,913.4 1233.9,912.2 1237.2,912.2 1240.4,913.2 1243.7,912.1 1246.9,913.4 1250.2,913.4 1253.4,912.5 1256.7,913.6 1259.9,913.3 1263.2,913.2 1266.4,913.3 1269.7,913.4 1272.9,913.3 1276.2,913.3 1279.4,913.3 1282.7,913.1 1285.9,912.4 1289.2,913.3 1292.4,913.2 1295.7,913.3 1298.9,913.4 1302.2,912.4 1305.4,913.4 1308.7,913.2 1311.9,913.1 1315.2,913.4 1318.4,913.3 1321.7,913.3 1324.9,913.2 1328.2,913.3 1331.4,913.3 1334.7,913.2 1337.9,912.5 1341.2,913.3 1344.4,913.6 1347.7,913.6 1350.9,913.5 1354.2,913.6 1357.4,913.3 1360.7,913.2 1363.9,913.4 1367.2,913.4 1370.4,913.4 1373.7,913.4 1376.9,913.3 1380.2,913.3 1383.4,913.4 1386.7,913.5 1389.9,913.4 1393.2,913.2 1396.4,913.4 1399.7,913.1 1402.9,913.4 1406.2,913.1 1409.4,913.5 1412.7,913.5 1415.9,913.3 1419.2,912.6 1422.4,913.4 1425.7,913.0 1428.9,913.3 1432.2,913.3 1435.4,912.3 1438.7,913.1 1441.9,913.2 1445.2,913.3 1448.4,913.6 1451.7,913.3 1454.9,913.4 1458.2,913.3 1461.4,913.2 1464.7,913.5 1467.9,912.7 1471.2,913.2 1474.4,913.3 1477.7,913.4 1480.9,913.5 1484.2,913.4 1487.4,913.5 1490.7,913.2 1493.9,913.3 1497.2,913.5 1500.4,913.3 1503.7,913.5 1506.9,913.8 1510.2,913.2 1513.4,913.2 1516.7,913.6 1519.9,913.5 1523.2,913.3 1526.4,913.4 1529.7,913.5 1532.9,913.4 1536.2,913.4 1539.4,913.4 1542.7,913.3 1545.9,913.4 1549.2,913.5 1552.4,913.3 1555.7,913.6 1558.9,913.1 1562.2,913.6 1565.4,913.4 1568.7,913.3 1571.9,912.1 1575.2,911.9 1578.4,913.2 1581.7,912.5 1584.9,913.4 1588.2,913.3 1591.4,913.4 1594.7,913.4 1597.9,913.2 1601.2,913.5 1604.4,913.4 1607.7,911.7 1610.9,913.4 1614.2,913.3 1617.4,913.4 1620.7,913.3 1623.9,913.3 1627.2,913.3 1630.4,912.2 1633.7,913.5 1636.9,913.1 1640.2,913.4 1643.4,913.2 1646.7,912.7 1649.9,912.1 1653.2,913.6 1656.4,913.1 1659.7,913.5 1662.9,913.5 1666.2,913.2 1669.4,913.3 1672.7,913.1 1675.9,913.1 1679.2,913.2"/>
<g stroke="#dfe1e4" stroke-width="2"><line x1="122" y1="1313.8" x2="1682" y2="1313.8"/><line x1="122" y1="1276.4" x2="1682" y2="1276.4"/><line x1="122" y1="1239.0" x2="1682" y2="1239.0"/><line x1="122" y1="1201.6" x2="1682" y2="1201.6"/><line x1="122" y1="1164.2" x2="1682" y2="1164.2"/><line x1="122" y1="1126.8" x2="1682" y2="1126.8"/><line x1="122" y1="1089.5" x2="1682" y2="1089.5"/><line x1="122" y1="1052.1" x2="1682" y2="1052.1"/></g>
<polyline fill="none" stroke="#9b7acd" stroke-width="2.8" stroke-linejoin="round" points="122.4,1270.7 125.7,1272.7 128.9,1272.4 132.2,1273.7 135.4,1273.0 138.7,1272.4 141.9,1272.3 145.2,1268.7 148.4,1272.5 151.7,1271.9 154.9,1258.0 158.2,1271.1 161.4,1272.1 164.7,1273.3 167.9,1272.1 171.2,1261.5 174.4,1271.8 177.7,1271.7 180.9,1271.8 184.2,1271.0 187.4,1273.4 190.7,1272.5 193.9,1252.0 197.2,1271.8 200.4,1273.0 203.7,1272.1 206.9,1272.6 210.2,1274.5 213.4,1273.7 216.7,1273.7 219.9,1273.5 223.2,1267.6 226.4,1261.2 229.7,1270.7 232.9,1270.4 236.2,1271.8 239.4,1270.0 242.7,1271.4 245.9,1271.7 249.2,1270.5 252.4,1273.2 255.7,1274.3 258.9,1273.2 262.1,1261.5 265.4,1265.4 268.6,1271.6 271.9,1272.1 275.1,1272.0 278.4,1271.3 281.6,1265.8 284.9,1270.9 288.1,1248.8 291.4,1270.2 294.6,1272.2 297.9,1272.9 301.1,1272.1 304.4,1272.9 307.6,1272.0 310.9,1266.3 314.1,1272.4 317.4,1271.7 320.6,1271.4 323.9,1272.3 327.1,1270.4 330.4,1270.7 333.6,1272.1 336.9,1272.4 340.1,1271.8 343.4,1272.1 346.6,1260.6 349.9,1271.8 353.1,1272.9 356.4,1268.9 359.6,1271.8 362.9,1272.0 366.1,1270.8 369.4,1267.5 372.6,1264.9 375.9,1262.5 379.1,1273.2 382.4,1272.3 385.6,1265.2 388.9,1269.7 392.1,1271.9 395.4,1271.9 398.6,1270.5 401.9,1273.5 405.1,1272.6 408.4,1268.3 411.6,1274.2 414.9,1275.2 418.1,1272.3 421.4,1270.7 424.6,1271.0 427.9,1270.3 431.1,1275.0 434.4,1255.4 437.6,1270.3 440.9,1272.8 444.1,1273.3 447.4,1271.4 450.6,1257.2 453.9,1271.1 457.1,1271.8 460.4,1270.4 463.6,1271.0 466.9,1271.5 470.1,1272.2 473.4,1271.0 476.6,1272.6 479.9,1273.0 483.1,1248.8 486.4,1270.7 489.6,1273.3 492.9,1255.4 496.1,1271.4 499.4,1270.8 502.6,1273.6 505.9,1272.5 509.1,1252.7 512.4,1270.2 515.6,1272.5 518.9,1270.8 522.1,1271.6 525.4,1269.5 528.6,1271.4 531.9,1273.7 535.1,1272.1 538.4,1274.2 541.6,1272.4 544.9,1271.0 548.1,1272.1 551.4,1273.3 554.6,1271.8 557.9,1266.1 561.1,1270.2 564.4,1261.0 567.6,1273.4 570.9,1274.5 574.1,1272.3 577.4,1271.5 580.6,1276.4 583.9,1272.4 587.1,1270.4 590.4,1270.9 593.6,1273.8 596.9,1271.4 600.1,1271.6 603.4,1265.6 606.6,1271.1 609.9,1271.1 613.1,1268.9 616.4,1271.5 619.6,1272.6 622.9,1272.4 626.1,1270.9 629.4,1257.6 632.6,1265.7 635.9,1271.2 639.1,1271.5 642.4,1272.3 645.6,1259.0 648.9,1273.2 652.1,1270.9 655.4,1271.2 658.6,1262.6 661.9,1272.8 665.1,1272.1 668.4,1258.5 671.6,1271.4 674.9,1272.1 678.1,1271.4 681.4,1270.7 684.6,1270.3 687.9,1273.0 691.1,1267.6 694.4,1273.1 697.6,1264.1 700.9,1272.8 704.1,1264.2 707.4,1272.4 710.6,1270.6 713.9,1272.4 717.1,1272.0 720.4,1271.6 723.6,1271.7 726.9,1272.0 730.1,1271.0 733.4,1270.4 736.6,1270.8 739.9,1272.3 743.1,1261.5 746.4,1271.6 749.6,1261.0 752.9,1271.0 756.1,1271.1 759.4,1273.2 762.6,1271.1 765.9,1272.6 769.1,1270.3 772.4,1269.7 775.6,1272.8 778.9,1272.5 782.1,1271.5 785.4,1273.0 788.6,1264.3 791.9,1272.2 795.1,1269.7 798.4,1272.1 801.6,1272.1 804.9,1264.4 808.1,1272.7 811.4,1271.3 814.6,1270.4 817.9,1271.7 821.1,1272.8 824.4,1271.5 827.6,1272.7 830.9,1274.9 834.1,1271.6 837.4,1273.8 840.6,1268.4 843.9,1261.0 847.1,1272.2 850.4,1272.1 853.6,1270.0 856.9,1270.7 860.1,1273.4 863.4,1271.5 866.6,1271.5 869.9,1269.7 873.1,1272.5 876.4,1260.0 879.6,1275.1 882.9,1271.4 886.1,1271.1 889.4,1271.6 892.6,1270.8 895.9,1272.8 899.1,1271.2 902.4,1273.0 905.6,1270.5 908.9,1254.3 912.1,1272.0 915.4,1260.0 918.6,1271.8 921.9,1271.1 925.1,1273.5 928.4,1261.5 931.6,1270.7 934.9,1272.0 938.1,1273.3 941.4,1274.4 944.6,1264.8 947.9,1273.8 951.1,1271.6 954.4,1271.9 957.6,1260.0 960.9,1273.3 964.1,1271.1 967.4,1273.2 970.6,1273.0 973.9,1272.0 977.1,1262.2 980.4,1265.8 983.6,1271.9 986.9,1272.7 990.1,1269.1 993.4,1262.6 996.6,1272.2 999.9,1272.1 1003.1,1272.7 1006.4,1271.1 1009.6,1270.4 1012.9,1273.3 1016.1,1272.4 1019.4,1272.3 1022.6,1273.4 1025.9,1273.4 1029.2,1262.2 1032.4,1272.9 1035.7,1266.2 1038.9,1270.9 1042.2,1274.2 1045.4,1268.3 1048.7,1272.9 1051.9,1272.5 1055.2,1271.4 1058.4,1268.7 1061.7,1261.0 1064.9,1271.2 1068.2,1272.1 1071.4,1273.2 1074.7,1271.5 1077.9,1272.3 1081.2,1273.8 1084.4,1270.9 1087.7,1271.4 1090.9,1254.3 1094.2,1272.4 1097.4,1270.1 1100.7,1271.3 1103.9,1270.7 1107.2,1272.6 1110.4,1264.1 1113.7,1270.4 1116.9,1271.9 1120.2,1271.8 1123.4,1270.1 1126.7,1261.0 1129.9,1271.6 1133.2,1269.6 1136.4,1265.2 1139.7,1271.9 1142.9,1272.5 1146.2,1270.1 1149.4,1270.0 1152.7,1272.4 1155.9,1265.2 1159.2,1263.6 1162.4,1271.2 1165.7,1271.5 1168.9,1270.7 1172.2,1269.6 1175.4,1271.7 1178.7,1273.1 1181.9,1271.9 1185.2,1271.9 1188.4,1272.3 1191.7,1262.2 1194.9,1271.0 1198.2,1270.8 1201.4,1274.0 1204.7,1271.5 1207.9,1273.0 1211.2,1272.2 1214.4,1272.8 1217.7,1271.4 1220.9,1267.0 1224.2,1271.9 1227.4,1274.5 1230.7,1272.2 1233.9,1248.3 1237.2,1270.6 1240.4,1272.9 1243.7,1270.3 1246.9,1272.2 1250.2,1262.9 1253.4,1278.7 1256.7,1273.3 1259.9,1271.4 1263.2,1270.4 1266.4,1269.6 1269.7,1271.3 1272.9,1271.2 1276.2,1271.1 1279.4,1271.1 1282.7,1271.3 1285.9,1272.3 1289.2,1260.0 1292.4,1271.4 1295.7,1270.9 1298.9,1267.5 1302.2,1268.5 1305.4,1271.9 1308.7,1271.1 1311.9,1270.6 1315.2,1274.0 1318.4,1273.3 1321.7,1273.7 1324.9,1272.4 1328.2,1272.6 1331.4,1271.6 1334.7,1272.2 1337.9,1270.3 1341.2,1260.0 1344.4,1272.6 1347.7,1260.7 1350.9,1272.2 1354.2,1271.6 1357.4,1272.4 1360.7,1258.0 1363.9,1273.4 1367.2,1274.5 1370.4,1272.4 1373.7,1272.9 1376.9,1259.0 1380.2,1273.8 1383.4,1269.5 1386.7,1263.0 1389.9,1272.8 1393.2,1272.3 1396.4,1265.2 1399.7,1274.1 1402.9,1273.9 1406.2,1270.8 1409.4,1272.0 1412.7,1273.5 1415.9,1272.6 1419.2,1272.4 1422.4,1272.6 1425.7,1270.2 1428.9,1274.0 1432.2,1272.4 1435.4,1271.6 1438.7,1271.3 1441.9,1274.3 1445.2,1271.6 1448.4,1261.0 1451.7,1272.5 1454.9,1262.2 1458.2,1271.0 1461.4,1268.3 1464.7,1270.7 1467.9,1272.2 1471.2,1273.8 1474.4,1270.8 1477.7,1270.5 1480.9,1267.0 1484.2,1270.8 1487.4,1273.9 1490.7,1273.3 1493.9,1271.7 1497.2,1262.2 1500.4,1265.4 1503.7,1270.2 1506.9,1271.8 1510.2,1271.3 1513.4,1270.0 1516.7,1255.4 1519.9,1270.3 1523.2,1279.7 1526.4,1273.0 1529.7,1257.2 1532.9,1270.5 1536.2,1271.6 1539.4,1270.9 1542.7,1271.4 1545.9,1271.5 1549.2,1260.0 1552.4,1275.8 1555.7,1272.2 1558.9,1270.6 1562.2,1271.2 1565.4,1271.3 1568.7,1271.9 1571.9,1249.0 1575.2,1274.6 1578.4,1272.8 1581.7,1270.7 1584.9,1272.3 1588.2,1271.1 1591.4,1270.0 1594.7,1270.9 1597.9,1273.5 1601.2,1274.4 1604.4,1273.1 1607.7,1271.2 1610.9,1265.2 1614.2,1272.1 1617.4,1271.2 1620.7,1272.0 1623.9,1269.6 1627.2,1271.6 1630.4,1271.5 1633.7,1271.1 1636.9,1265.6 1640.2,1271.0 1643.4,1271.8 1646.7,1271.7 1649.9,1271.2 1653.2,1263.5 1656.4,1272.2 1659.7,1272.4 1662.9,1272.0 1666.2,1253.2 1669.4,1274.9 1672.7,1273.0 1675.9,1272.2 1679.2,1272.3"/>
<polyline fill="none" stroke="#dc7b3d" stroke-width="2.8" stroke-linejoin="round" points="122.4,1299.3 125.7,1294.8 128.9,1293.2 132.2,1296.7 135.4,1298.1 138.7,1297.7 141.9,1297.8 145.2,1296.1 148.4,1295.2 151.7,1297.9 154.9,1297.3 158.2,1297.8 161.4,1294.9 164.7,1295.2 167.9,1298.1 171.2,1297.2 174.4,1296.5 177.7,1299.6 180.9,1297.6 184.2,1296.5 187.4,1289.7 190.7,1292.3 193.9,1296.7 197.2,1303.6 200.4,1295.1 203.7,1298.2 206.9,1296.1 210.2,1297.1 213.4,1295.0 216.7,1298.0 219.9,1302.3 223.2,1295.8 226.4,1294.9 229.7,1294.2 232.9,1299.1 236.2,1296.9 239.4,1298.4 242.7,1305.0 245.9,1294.6 249.2,1278.6 252.4,1296.4 255.7,1294.7 258.9,1296.4 262.1,1296.9 265.4,1299.3 268.6,1297.9 271.9,1295.2 275.1,1299.0 278.4,1296.3 281.6,1303.1 284.9,1296.8 288.1,1300.2 291.4,1284.2 294.6,1294.5 297.9,1297.4 301.1,1295.1 304.4,1297.7 307.6,1296.3 310.9,1297.3 314.1,1299.2 317.4,1298.4 320.6,1297.7 323.9,1294.4 327.1,1295.5 330.4,1296.8 333.6,1297.1 336.9,1298.8 340.1,1297.2 343.4,1296.2 346.6,1287.5 349.9,1295.3 353.1,1294.4 356.4,1288.2 359.6,1297.9 362.9,1297.3 366.1,1294.3 369.4,1289.4 372.6,1286.1 375.9,1308.5 379.1,1297.5 382.4,1285.4 385.6,1287.6 388.9,1298.0 392.1,1298.8 395.4,1284.2 398.6,1300.4 401.9,1297.7 405.1,1296.1 408.4,1298.6 411.6,1296.8 414.9,1298.1 418.1,1292.1 421.4,1296.4 424.6,1296.0 427.9,1296.0 431.1,1297.9 434.4,1269.8 437.6,1296.2 440.9,1297.8 444.1,1294.6 447.4,1297.4 450.6,1252.0 453.9,1295.4 457.1,1296.9 460.4,1297.5 463.6,1298.1 466.9,1298.0 470.1,1297.2 473.4,1294.6 476.6,1279.7 479.9,1296.9 483.1,1296.0 486.4,1297.2 489.6,1273.0 492.9,1299.1 496.1,1294.4 499.4,1297.2 502.6,1294.1 505.9,1293.7 509.1,1262.9 512.4,1295.5 515.6,1297.3 518.9,1296.9 522.1,1296.6 525.4,1296.7 528.6,1294.3 531.9,1290.5 535.1,1295.3 538.4,1290.8 541.6,1295.7 544.9,1293.7 548.1,1299.2 551.4,1294.8 554.6,1297.7 557.9,1288.0 561.1,1297.3 564.4,1283.0 567.6,1298.9 570.9,1301.0 574.1,1293.2 577.4,1295.3 580.6,1297.1 583.9,1299.7 587.1,1295.6 590.4,1294.1 593.6,1296.0 596.9,1299.5 600.1,1297.5 603.4,1296.3 606.6,1296.8 609.9,1294.9 613.1,1298.3 616.4,1297.7 619.6,1300.8 622.9,1294.9 626.1,1284.2 629.4,1297.4 632.6,1299.6 635.9,1295.3 639.1,1299.0 642.4,1298.8 645.6,1273.0 648.9,1299.0 652.1,1298.3 655.4,1298.5 658.6,1294.9 661.9,1295.6 665.1,1287.5 668.4,1297.7 671.6,1296.8 674.9,1298.9 678.1,1296.1 681.4,1298.3 684.6,1297.6 687.9,1296.2 691.1,1286.1 694.4,1299.0 697.6,1301.2 700.9,1299.6 704.1,1298.9 707.4,1298.7 710.6,1297.9 713.9,1297.0 717.1,1302.1 720.4,1297.6 723.6,1294.4 726.9,1294.8 730.1,1295.3 733.4,1296.9 736.6,1296.4 739.9,1297.7 743.1,1282.4 746.4,1301.3 749.6,1283.1 752.9,1296.3 756.1,1296.8 759.4,1295.3 762.6,1296.2 765.9,1286.9 769.1,1297.5 772.4,1292.8 775.6,1275.3 778.9,1295.3 782.1,1298.0 785.4,1296.4 788.6,1282.4 791.9,1301.3 795.1,1292.7 798.4,1295.5 801.6,1297.1 804.9,1298.7 808.1,1299.4 811.4,1285.4 814.6,1297.3 817.9,1295.6 821.1,1297.9 824.4,1297.3 827.6,1295.7 830.9,1303.5 834.1,1296.9 837.4,1302.6 840.6,1296.0 843.9,1295.3 847.1,1297.1 850.4,1294.4 853.6,1297.5 856.9,1297.4 860.1,1296.6 863.4,1297.2 866.6,1287.1 869.9,1301.5 873.1,1299.7 876.4,1283.0 879.6,1294.4 882.9,1295.4 886.1,1297.9 889.4,1290.9 892.6,1299.7 895.9,1297.3 899.1,1294.3 902.4,1295.7 905.6,1285.8 908.9,1282.4 912.1,1294.8 915.4,1296.6 918.6,1296.2 921.9,1291.5 925.1,1295.5 928.4,1285.4 931.6,1296.6 934.9,1296.1 938.1,1296.9 941.4,1296.3 944.6,1289.5 947.9,1295.1 951.1,1295.6 954.4,1296.2 957.6,1296.8 960.9,1297.8 964.1,1298.3 967.4,1298.6 970.6,1289.5 973.9,1295.2 977.1,1296.0 980.4,1299.1 983.6,1305.3 986.9,1294.5 990.1,1293.9 993.4,1283.1 996.6,1285.4 999.9,1297.9 1003.1,1296.0 1006.4,1292.1 1009.6,1293.0 1012.9,1290.2 1016.1,1296.0 1019.4,1296.1 1022.6,1297.8 1025.9,1289.4 1029.2,1300.5 1032.4,1297.4 1035.7,1298.4 1038.9,1295.3 1042.2,1287.6 1045.4,1296.2 1048.7,1308.6 1051.9,1298.5 1055.2,1286.6 1058.4,1297.1 1061.7,1302.8 1064.9,1298.5 1068.2,1296.2 1071.4,1296.3 1074.7,1295.3 1077.9,1298.2 1081.2,1296.7 1084.4,1299.0 1087.7,1287.4 1090.9,1285.4 1094.2,1297.3 1097.4,1295.1 1100.7,1298.8 1103.9,1294.0 1107.2,1295.9 1110.4,1278.7 1113.7,1296.2 1116.9,1297.8 1120.2,1297.6 1123.4,1275.3 1126.7,1296.6 1129.9,1296.1 1133.2,1297.2 1136.4,1295.2 1139.7,1295.5 1142.9,1286.1 1146.2,1293.3 1149.4,1294.9 1152.7,1290.3 1155.9,1303.0 1159.2,1296.7 1162.4,1295.2 1165.7,1285.4 1168.9,1296.8 1172.2,1290.3 1175.4,1296.7 1178.7,1296.5 1181.9,1295.0 1185.2,1298.7 1188.4,1297.3 1191.7,1297.1 1194.9,1295.0 1198.2,1294.8 1201.4,1301.2 1204.7,1294.8 1207.9,1296.4 1211.2,1296.4 1214.4,1300.4 1217.7,1298.1 1220.9,1298.5 1224.2,1295.9 1227.4,1296.5 1230.7,1298.4 1233.9,1283.9 1237.2,1296.9 1240.4,1296.0 1243.7,1297.6 1246.9,1297.9 1250.2,1285.4 1253.4,1297.1 1256.7,1295.0 1259.9,1298.1 1263.2,1297.0 1266.4,1297.2 1269.7,1298.3 1272.9,1301.8 1276.2,1298.9 1279.4,1289.5 1282.7,1300.2 1285.9,1295.5 1289.2,1296.6 1292.4,1286.1 1295.7,1293.3 1298.9,1297.8 1302.2,1296.7 1305.4,1298.8 1308.7,1297.5 1311.9,1296.6 1315.2,1296.6 1318.4,1295.4 1321.7,1286.9 1324.9,1295.1 1328.2,1297.8 1331.4,1296.5 1334.7,1298.4 1337.9,1297.0 1341.2,1269.8 1344.4,1296.9 1347.7,1296.6 1350.9,1297.5 1354.2,1297.4 1357.4,1299.5 1360.7,1297.8 1363.9,1297.7 1367.2,1286.1 1370.4,1296.0 1373.7,1297.4 1376.9,1278.7 1380.2,1296.1 1383.4,1298.2 1386.7,1295.0 1389.9,1289.5 1393.2,1296.1 1396.4,1297.5 1399.7,1296.4 1402.9,1294.8 1406.2,1294.6 1409.4,1298.9 1412.7,1296.2 1415.9,1305.2 1419.2,1297.4 1422.4,1296.3 1425.7,1283.9 1428.9,1297.2 1432.2,1298.1 1435.4,1291.3 1438.7,1298.4 1441.9,1293.9 1445.2,1299.3 1448.4,1295.7 1451.7,1296.5 1454.9,1287.6 1458.2,1298.4 1461.4,1297.5 1464.7,1297.3 1467.9,1297.6 1471.2,1297.1 1474.4,1296.6 1477.7,1297.5 1480.9,1296.0 1484.2,1295.5 1487.4,1297.6 1490.7,1295.5 1493.9,1296.6 1497.2,1297.7 1500.4,1296.0 1503.7,1294.9 1506.9,1297.3 1510.2,1306.1 1513.4,1295.5 1516.7,1285.4 1519.9,1298.6 1523.2,1297.0 1526.4,1296.0 1529.7,1284.2 1532.9,1295.5 1536.2,1287.0 1539.4,1295.4 1542.7,1301.0 1545.9,1298.5 1549.2,1290.0 1552.4,1293.0 1555.7,1300.5 1558.9,1288.5 1562.2,1295.6 1565.4,1298.0 1568.7,1299.8 1571.9,1296.3 1575.2,1296.5 1578.4,1298.0 1581.7,1296.4 1584.9,1295.3 1588.2,1295.1 1591.4,1296.1 1594.7,1298.8 1597.9,1293.1 1601.2,1300.5 1604.4,1304.0 1607.7,1296.5 1610.9,1295.9 1614.2,1296.8 1617.4,1296.8 1620.7,1300.0 1623.9,1280.8 1627.2,1298.7 1630.4,1297.8 1633.7,1297.8 1636.9,1293.2 1640.2,1289.3 1643.4,1298.5 1646.7,1297.9 1649.9,1297.7 1653.2,1297.8 1656.4,1297.7 1659.7,1296.1 1662.9,1294.9 1666.2,1295.7 1669.4,1295.8 1672.7,1296.6 1675.9,1296.1 1679.2,1297.4"/>
<polyline fill="none" stroke="#2a5ec0" stroke-width="3" stroke-linejoin="round" points="122.4,1313.5 125.7,1313.5 128.9,1312.8 132.2,1078.2 135.4,1311.9 138.7,1313.2 141.9,1313.5 145.2,1313.4 148.4,1313.4 151.7,1313.2 154.9,1313.5 158.2,1313.1 161.4,1313.3 164.7,1313.5 167.9,1312.6 171.2,1313.4 174.4,1313.0 177.7,1313.3 180.9,1313.4 184.2,1313.3 187.4,1313.1 190.7,1313.5 193.9,1313.6 197.2,1313.2 200.4,1313.3 203.7,1313.4 206.9,1313.4 210.2,1313.2 213.4,1313.8 216.7,1313.2 219.9,1313.4 223.2,1312.3 226.4,1313.4 229.7,1312.9 232.9,1313.4 236.2,1313.2 239.4,1313.7 242.7,1313.3 245.9,1313.2 249.2,1312.0 252.4,1313.7 255.7,1313.3 258.9,1313.2 262.1,1313.2 265.4,1313.5 268.6,1313.3 271.9,1313.6 275.1,1313.1 278.4,1313.4 281.6,1313.2 284.9,1313.4 288.1,1312.2 291.4,1313.1 294.6,1313.5 297.9,1313.2 301.1,1313.4 304.4,1313.5 307.6,1313.5 310.9,1313.2 314.1,1313.4 317.4,1313.4 320.6,1313.6 323.9,1313.2 327.1,1313.2 330.4,1313.3 333.6,1313.2 336.9,1313.8 340.1,1313.4 343.4,1313.3 346.6,1313.3 349.9,1313.4 353.1,1312.1 356.4,1313.5 359.6,1313.4 362.9,1313.5 366.1,1313.3 369.4,1313.5 372.6,1313.4 375.9,1313.1 379.1,1313.4 382.4,1313.4 385.6,1313.6 388.9,1313.4 392.1,1313.2 395.4,1313.3 398.6,1313.3 401.9,1313.4 405.1,1313.3 408.4,1313.3 411.6,1311.8 414.9,1313.7 418.1,1313.1 421.4,1313.2 424.6,1313.4 427.9,1313.1 431.1,1313.5 434.4,1313.2 437.6,1313.3 440.9,1313.2 444.1,1312.6 447.4,1313.3 450.6,1313.3 453.9,1313.2 457.1,1313.3 460.4,1313.3 463.6,1313.4 466.9,1313.1 470.1,1313.3 473.4,1313.4 476.6,1313.4 479.9,1313.5 483.1,1313.5 486.4,1313.6 489.6,1313.3 492.9,1312.1 496.1,1313.3 499.4,1313.5 502.6,1313.4 505.9,1313.4 509.1,1313.2 512.4,1313.6 515.6,1313.6 518.9,1313.2 522.1,1313.3 525.4,1313.6 528.6,1313.1 531.9,1311.7 535.1,1313.2 538.4,1313.7 541.6,1312.2 544.9,1313.5 548.1,1312.1 551.4,1313.6 554.6,1313.1 557.9,1313.5 561.1,1313.3 564.4,1313.2 567.6,1313.3 570.9,1313.3 574.1,1313.4 577.4,1312.3 580.6,1313.4 583.9,1069.3 587.1,1313.2 590.4,1313.4 593.6,1313.4 596.9,1313.4 600.1,1313.6 603.4,1313.5 606.6,1313.6 609.9,1313.3 613.1,1313.2 616.4,1313.3 619.6,1313.5 622.9,1313.2 626.1,1313.4 629.4,1313.6 632.6,1313.6 635.9,1313.3 639.1,1313.1 642.4,1313.4 645.6,1313.4 648.9,1313.4 652.1,1313.5 655.4,1313.4 658.6,1313.3 661.9,1313.5 665.1,1313.2 668.4,1313.5 671.6,1313.2 674.9,1313.3 678.1,1313.4 681.4,1313.4 684.6,1313.4 687.9,1313.1 691.1,1313.5 694.4,1313.2 697.6,1313.2 700.9,1313.4 704.1,1313.1 707.4,1313.7 710.6,1313.3 713.9,1313.3 717.1,1313.3 720.4,1311.7 723.6,1313.4 726.9,1313.4 730.1,1312.5 733.4,1313.4 736.6,1313.5 739.9,1313.3 743.1,1313.4 746.4,1313.4 749.6,1313.3 752.9,1311.8 756.1,1313.5 759.4,1313.4 762.6,1313.4 765.9,1313.3 769.1,1313.5 772.4,1311.5 775.6,1313.3 778.9,1313.3 782.1,1313.3 785.4,1313.1 788.6,1313.2 791.9,1313.5 795.1,1313.3 798.4,1313.5 801.6,1313.2 804.9,1313.4 808.1,1311.8 811.4,1313.1 814.6,1313.2 817.9,1312.8 821.1,1313.5 824.4,1313.3 827.6,1313.4 830.9,1313.2 834.1,1313.5 837.4,1313.6 840.6,1313.5 843.9,1313.4 847.1,1313.3 850.4,1313.2 853.6,1313.2 856.9,1313.3 860.1,1313.4 863.4,1313.2 866.6,1313.4 869.9,1313.4 873.1,1313.4 876.4,1313.2 879.6,1313.1 882.9,1313.2 886.1,1312.6 889.4,1313.2 892.6,1313.5 895.9,1313.4 899.1,1313.3 902.4,1312.0 905.6,1313.5 908.9,1312.0 912.1,1313.1 915.4,1313.2 918.6,1313.5 921.9,1313.3 925.1,1312.0 928.4,1313.3 931.6,1313.5 934.9,1312.2 938.1,1313.4 941.4,1312.0 944.6,1313.6 947.9,1313.3 951.1,1313.3 954.4,1313.1 957.6,1313.7 960.9,1313.3 964.1,1313.2 967.4,1313.4 970.6,1313.2 973.9,1313.0 977.1,1313.2 980.4,1313.2 983.6,1313.2 986.9,1313.3 990.1,1313.2 993.4,1313.3 996.6,1313.5 999.9,1313.5 1003.1,1313.2 1006.4,1313.3 1009.6,1313.5 1012.9,1313.3 1016.1,1313.1 1019.4,1313.6 1022.6,1313.5 1025.9,1313.2 1029.2,1313.2 1032.4,1313.5 1035.7,1313.5 1038.9,1312.4 1042.2,1313.1 1045.4,1312.0 1048.7,1313.7 1051.9,1313.2 1055.2,1313.4 1058.4,1313.4 1061.7,1313.5 1064.9,1312.1 1068.2,1313.3 1071.4,1313.3 1074.7,1313.3 1077.9,1313.3 1081.2,1313.2 1084.4,1313.1 1087.7,1313.5 1090.9,1313.4 1094.2,1313.4 1097.4,1311.6 1100.7,1312.6 1103.9,1313.6 1107.2,1311.8 1110.4,1313.5 1113.7,1313.5 1116.9,1313.4 1120.2,1313.5 1123.4,1312.2 1126.7,1313.1 1129.9,1313.4 1133.2,1313.5 1136.4,1313.3 1139.7,1313.2 1142.9,1313.6 1146.2,1313.4 1149.4,1312.2 1152.7,1313.5 1155.9,1313.3 1159.2,1313.5 1162.4,1313.5 1165.7,1313.4 1168.9,1313.3 1172.2,1313.3 1175.4,1313.5 1178.7,1313.4 1181.9,1313.7 1185.2,1313.0 1188.4,1313.4 1191.7,1313.4 1194.9,1313.3 1198.2,1313.3 1201.4,1313.3 1204.7,1313.5 1207.9,1313.6 1211.2,1313.4 1214.4,1313.5 1217.7,1313.4 1220.9,1313.4 1224.2,1312.4 1227.4,1313.2 1230.7,1313.4 1233.9,1313.6 1237.2,1313.3 1240.4,1313.2 1243.7,1313.6 1246.9,1313.3 1250.2,1313.3 1253.4,1313.4 1256.7,1313.3 1259.9,1313.3 1263.2,1313.3 1266.4,1313.2 1269.7,1313.4 1272.9,1313.4 1276.2,1313.0 1279.4,1313.5 1282.7,1312.2 1285.9,1313.4 1289.2,1313.2 1292.4,1313.2 1295.7,1312.5 1298.9,1313.2 1302.2,1313.5 1305.4,1313.0 1308.7,1313.5 1311.9,1313.2 1315.2,1313.4 1318.4,1313.2 1321.7,1313.5 1324.9,1313.3 1328.2,1313.3 1331.4,1313.3 1334.7,1313.2 1337.9,1313.4 1341.2,1312.0 1344.4,1312.7 1347.7,1313.4 1350.9,1313.4 1354.2,1313.2 1357.4,1311.7 1360.7,1313.5 1363.9,1312.5 1367.2,1313.2 1370.4,1313.4 1373.7,1313.5 1376.9,1313.0 1380.2,1313.3 1383.4,1313.2 1386.7,1313.0 1389.9,1313.5 1393.2,1313.3 1396.4,1313.6 1399.7,1311.8 1402.9,1313.3 1406.2,1312.0 1409.4,1313.5 1412.7,1313.4 1415.9,1313.4 1419.2,1313.1 1422.4,1313.4 1425.7,1313.4 1428.9,1313.4 1432.2,1313.6 1435.4,1313.4 1438.7,1313.6 1441.9,1313.3 1445.2,1313.7 1448.4,1313.5 1451.7,1313.3 1454.9,1313.7 1458.2,1313.6 1461.4,1313.2 1464.7,1313.6 1467.9,1313.4 1471.2,1313.3 1474.4,1311.9 1477.7,1313.6 1480.9,1313.1 1484.2,1313.4 1487.4,1313.3 1490.7,1313.5 1493.9,1313.3 1497.2,1313.5 1500.4,1313.6 1503.7,1313.5 1506.9,1313.4 1510.2,1313.4 1513.4,1313.4 1516.7,1313.3 1519.9,1313.4 1523.2,1313.2 1526.4,1312.8 1529.7,1311.7 1532.9,1313.2 1536.2,1313.1 1539.4,1313.7 1542.7,1312.5 1545.9,1313.6 1549.2,1313.1 1552.4,1313.4 1555.7,1312.6 1558.9,1313.5 1562.2,1313.2 1565.4,1313.2 1568.7,1313.4 1571.9,1313.4 1575.2,1313.2 1578.4,1313.2 1581.7,1313.2 1584.9,1313.4 1588.2,1313.4 1591.4,1313.2 1594.7,1312.3 1597.9,1313.2 1601.2,1313.3 1604.4,1313.5 1607.7,1313.3 1610.9,1313.3 1614.2,1313.4 1617.4,1313.3 1620.7,1313.5 1623.9,1313.3 1627.2,1313.4 1630.4,1313.0 1633.7,1313.2 1636.9,1312.4 1640.2,1313.5 1643.4,1313.5 1646.7,1313.2 1649.9,1313.4 1653.2,1313.3 1656.4,1313.6 1659.7,1312.7 1662.9,1313.3 1666.2,1313.4 1669.4,1313.6 1672.7,1313.5 1675.9,1313.2 1679.2,1313.4"/>
<line x1="683.7" y1="194" x2="683.7" y2="1333" stroke="#34373c" stroke-width="2"/>
<polygon points="683.70,174.00 690.63,178.00 690.63,186.00 683.70,190.00 676.77,186.00 676.77,178.00" fill="#d7d8db" stroke="#3a3d42" stroke-width="2.5"/>
<line x1="1637.8" y1="184" x2="1637.8" y2="1327" stroke="#34373c" stroke-width="2"/>
<line x1="1636.8" y1="176.5" x2="1636.8" y2="185" stroke="#34373c" stroke-width="1"/>
<path d="M1628.6 157 H1645.8 L1642.6 161 C1642.2 164 1642.2 169 1643.4 172.5 L1648 176.3 H1626.6 L1631 172.5 C1632.3 169 1632.4 164 1631.9 161 Z" fill="#ffffff" stroke="#45484d" stroke-width="1.6" stroke-linejoin="round"/>
<g stroke="#45484d" stroke-width="1.5"><line x1="1620.3" y1="169" x2="1627" y2="169"/><line x1="1623.6" y1="165.6" x2="1623.6" y2="172.4"/></g>
<rect x="1560" y="1326.3" width="155.7" height="31.4" rx="4" fill="#474a50"/>
<text x="1637.9" y="1349.8" font-size="21.5" text-anchor="middle" fill="#ffffff" textLength="146" lengthAdjust="spacingAndGlyphs">05/01 14:52:33</text>
</svg></body></html>
